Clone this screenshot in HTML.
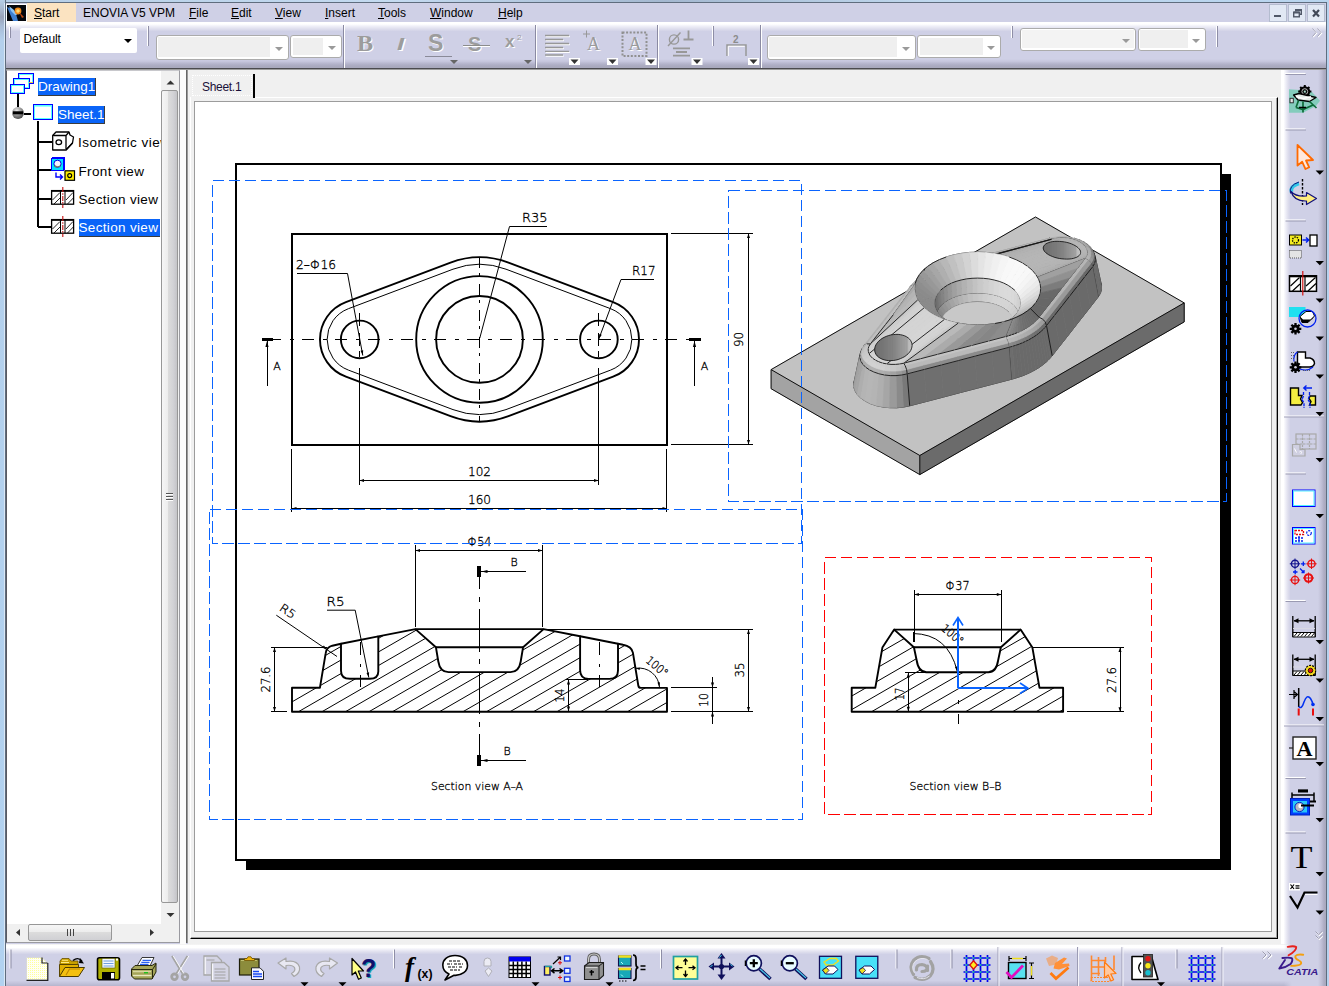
<!DOCTYPE html>
<html><head><meta charset="utf-8"><title>CATIA V5 - Drawing1</title>
<style>
html,body{margin:0;padding:0;}
body{width:1329px;height:986px;overflow:hidden;position:relative;background:#cfd0e6;font-family:"Liberation Sans","DejaVu Sans",sans-serif;font-size:12px;color:#000;}
.abs{position:absolute;}
#frameL{left:0;top:0;width:5px;height:986px;background:linear-gradient(180deg,#b6cee6 0px,#a9b7cc 10px,#98a2b8 17px,#a8bcd6 26px,#b4d0ec 40px,#b2d2f0 986px);border-right:1px solid #5f6d7e;}
#frameL2{left:4px;top:3px;width:1px;height:983px;background:#dbe8f6;}
#frameT{left:0;top:0;width:1329px;height:2px;background:linear-gradient(90deg,#b6cee6 0%,#c4daf0 30%,#a4b8d0 50%,#c0d8ee 70%,#b8d4ee 100%);border-bottom:1px solid #5f6d7e;}
#frameR{left:1326px;top:2px;width:3px;height:984px;background:#b6d2ee;border-left:1px solid #5f6d7e;box-sizing:border-box;}
#menubar{left:6px;top:3px;width:1320px;height:19px;background:#cfd0e6;}
.mi{position:absolute;top:2px;height:17px;line-height:16px;font-size:12px;white-space:nowrap;color:#000;}
.mi u{text-decoration:underline;}
#toolbar{left:6px;top:22px;width:1320px;height:46px;background:linear-gradient(180deg,#ffffff 0px,#ffffff 2px,#f0f0f8 4px,#dedeed 7px,#cfd0e6 9.5px,#cfd0e6 37px,#c5c5dc 39.5px,#b3b3ca 42px,#aaaabf 44px,#a8a8bc 46px);}
#tbline{left:6px;top:68px;width:1320px;height:1px;background:#4a4a4e;}
#tbline2{left:6px;top:69px;width:1320px;height:1px;background:#9c9c9c;}
.combo{position:absolute;background:#fff;border:1px solid #ababab;border-radius:3px;box-sizing:border-box;}
.combo .fill{position:absolute;left:1px;top:1px;bottom:2px;background:#efefef;}
.combo .arr{position:absolute;right:5px;top:10px;width:0;height:0;border-left:4px solid transparent;border-right:4px solid transparent;border-top:4px solid #9a9a9a;}
.grip{position:absolute;width:1px;background:#8e8ea6;border-left:1px solid #fff;}
.dd{position:absolute;width:0;height:0;border-left:4px solid transparent;border-right:4px solid transparent;border-top:4px solid #000;}
#treepanel{left:6px;top:70px;width:174px;height:873px;background:#fff;border:1px solid #9a9aa0;border-top-color:#c8c8cc;border-left-color:#5a5a62;box-sizing:border-box;overflow:hidden;}
#splitter{left:180px;top:70px;width:6px;height:874px;background:#fbfbfb;}
#splitline{left:186px;top:70px;width:1px;height:873px;background:#666;border-right:1px solid #999;}
#docarea{left:188px;top:70px;width:1093px;height:874px;background:#f0f0f0;}
#viewport{left:194px;top:101px;width:1078px;height:831px;background:#fff;border:1px solid #9c9c9c;box-sizing:border-box;}
#tabframe{left:190px;top:97px;width:1088px;height:842px;box-sizing:border-box;border-top:1px solid #fff;border-left:1px solid #fff;border-right:1px solid #000;border-bottom:1px solid #000;}
#tabframe2{left:191px;top:98px;width:1086px;height:840px;box-sizing:border-box;border-right:1px solid #a0a0a0;border-bottom:1px solid #a0a0a0;}
#rtool{left:1281px;top:70px;width:45px;height:916px;background:linear-gradient(90deg,#ffffff 0px,#ffffff 2.5px,#f0f0f8 4.5px,#dedeed 7px,#cfd0e6 9.5px,#cfd0e6 37px,#c2c2d8 40px,#adadc4 43px,#a8a8bc 45px);}
#corner{left:1281px;top:944px;width:45px;height:42px;background:linear-gradient(90deg,rgba(207,208,230,0) 0px,rgba(207,208,230,0) 3px,rgba(207,208,230,1) 11px,#cfd0e6 37px,#c2c2d8 40px,#adadc4 43px,#a8a8bc 45px);}
#btool{left:6px;top:944px;width:1320px;height:42px;background:linear-gradient(180deg,#e8e8e8 0px,#ffffff 1px,#ffffff 3.5px,#f0f0f8 5.5px,#dedeed 8px,#cfd0e6 10.5px,#cfd0e6 36.5px,#c4c4dc 39px,#b6b6ce 42px);}
.tree{font-size:13px;white-space:nowrap;}
</style></head><body>
<div class="abs" id="frameT"></div>
<div class="abs" id="frameL"></div><div class="abs" id="frameL2"></div>
<div class="abs" id="frameR"></div>
<div class="abs" id="menubar">
 <div class="abs" style="left:0px;top:1px;width:19px;height:16px;background:#000;overflow:hidden;border:1px solid #fff">
  <svg width="19" height="16" viewBox="0 0 19 16"><rect width="19" height="16" fill="#05070c"/><path d="M0 2 L5 4 L9 9 L11 16 L6 16 L3 9 Z" fill="#3f7fd0"/><path d="M2 1 L7 5 L10 10 L8 10 L4 6Z" fill="#8cc4f4"/><circle cx="11" cy="6" r="3.4" fill="#f08a1c"/><circle cx="11" cy="6" r="1.8" fill="#ffd870"/><path d="M12 7 L17 12 L15 13Z" fill="#c04810"/></svg>
 </div>
 <div class="abs" style="left:21px;top:0;width:49px;height:19px;background:#fbe3c1"></div>
 <div class="mi" style="left:28px"><u>S</u>tart</div>
 <div class="mi" style="left:77px">ENOVIA V5 VPM</div>
 <div class="mi" style="left:183px"><u>F</u>ile</div>
 <div class="mi" style="left:225px"><u>E</u>dit</div>
 <div class="mi" style="left:269px"><u>V</u>iew</div>
 <div class="mi" style="left:319px"><u>I</u>nsert</div>
 <div class="mi" style="left:372px"><u>T</u>ools</div>
 <div class="mi" style="left:424px"><u>W</u>indow</div>
 <div class="mi" style="left:492px"><u>H</u>elp</div>
</div>
<div class="abs" id="toolbar"></div>
<div class="abs" id="tbline"></div><div class="abs" id="tbline2"></div>
<div class="abs" id="treepanel"></div>
<div class="abs" id="splitter"></div>
<div class="abs" id="splitline"></div>
<div class="abs" id="docarea"></div>
<div class="abs" id="tabframe"></div><div class="abs" id="tabframe2"></div>
<div class="abs" id="viewport"></div>
<div class="abs" style="left:191px;top:74px;width:64px;height:24px;background:#f0f0f0;border-right:2px solid #000;box-sizing:border-box"></div>
<div class="abs" style="left:192px;top:75px;width:60px;height:21px;border:1px dotted #fff;box-sizing:border-box"></div>
<div class="abs" style="left:202px;top:80px;font-size:12px;line-height:14px;color:#1a1038;letter-spacing:-0.3px">Sheet.1</div>
<div class="abs" id="rtool"></div>
<div class="abs" id="btool"></div>
<div class="abs" id="corner"></div>
<!-- tree scrollbars -->
<div class="abs" style="left:161px;top:71px;width:18px;height:853px;background:#f0f0f0"></div>
<div class="abs" style="left:161px;top:90px;width:17px;height:813px;box-sizing:border-box;border:1px solid #979797;border-radius:2px;background:linear-gradient(90deg,#f6f6f6 0%,#ededed 38%,#dcdcdc 42%,#d2d2d6 75%,#c4c4c8 100%)"></div>
<svg class="abs" style="left:161px;top:71px" width="18" height="20"><path d="M5.5 13.5 L9.5 9.5 L13.5 13.5Z" fill="#333"/></svg>
<svg class="abs" style="left:161px;top:904px" width="18" height="20"><path d="M5.5 9 L13.5 9 L9.5 13Z" fill="#333"/></svg>
<svg class="abs" style="left:165px;top:492px" width="10" height="12"><path d="M1 2.500H8M1 5.500H8M1 8.500H8" stroke="#fff" stroke-width="1"/><path d="M1 1.500H8M1 4.500H8M1 7.500H8" stroke="#555" stroke-width="1"/></svg>
<div class="abs" style="left:7px;top:924px;width:172px;height:18px;background:#f0f0f0"></div>
<div class="abs" style="left:28px;top:924px;width:84px;height:17px;box-sizing:border-box;border:1px solid #979797;border-radius:2px;background:linear-gradient(180deg,#f6f6f6 0%,#ededed 45%,#dcdcdc 50%,#d0d0d4 100%)"></div>
<svg class="abs" style="left:7px;top:924px" width="160" height="18"><path d="M13 5 L9 8.5 L13 12Z" fill="#333"/><path d="M143 5 L147 8.5 L143 12Z" fill="#333"/><path d="M60.5 5V12M63.5 5V12M66.5 5V12" stroke="#444" stroke-width="1"/></svg>
<!-- tree content -->
<svg class="abs" style="left:7px;top:71px" width="154" height="180" viewBox="7 71 154 180" shape-rendering="crispEdges">
 <!-- connector lines -->
 <path d="M18 93V107" stroke="#000" stroke-width="2" fill="none"/>
 <path d="M24 113.5H31" stroke="#000" stroke-width="2" fill="none"/>
 <path d="M38 121V227M38 142H52M38 169.5H52M38 198.5H52M38 227H52" stroke="#000" stroke-width="2" fill="none"/>
 <!-- Drawing1 icon -->
 <g>
  <rect x="18.5" y="73.5" width="15" height="10" fill="#fff" stroke="#0000ff"/>
  <rect x="19.5" y="74.5" width="13" height="8" fill="none" stroke="#5ff"/>
  <rect x="13.5" y="78.5" width="16" height="10" fill="#fff" stroke="#0000ff"/>
  <rect x="14.5" y="79.5" width="14" height="8" fill="none" stroke="#5ff"/>
  <rect x="10.5" y="84.5" width="14" height="9" fill="#fff" stroke="#0000ff"/>
  <rect x="11.5" y="85.5" width="12" height="7" fill="none" stroke="#5ff"/>
  <rect x="29" y="82" width="4" height="1" fill="#e8c840"/>
 </g>
 <!-- Sheet icon -->
 <rect x="33.5" y="104.5" width="19" height="15" fill="#fff" stroke="#0000ff"/>
 <rect x="34.5" y="105.5" width="17" height="13" fill="none" stroke="#5ff"/>
 <rect x="35" y="106" width="16" height="1" fill="#a0ffff"/>
</svg>
<svg class="abs" style="left:7px;top:71px" width="154" height="180" viewBox="7 71 154 180">
 <defs><radialGradient id="ball" cx="40%" cy="30%" r="70%"><stop offset="0" stop-color="#e8e8e8"/><stop offset="0.6" stop-color="#8c8c8c"/><stop offset="1" stop-color="#4c4c4c"/></radialGradient></defs>
 <circle cx="18" cy="113" r="6" fill="url(#ball)"/>
 <rect x="13" y="111.3" width="10" height="3" fill="#000"/>
 <!-- Isometric icon -->
 <g fill="#fff" stroke="#000" stroke-width="1.3" stroke-linejoin="round">
  <path d="M52.7 135.5 L56 132 L69 132 L70 135 L73.5 137 L72.5 143 L66 150 L52.7 150 Z"/>
  <path d="M52.7 135.5 H66 V150 M66 135.5 L69 132 M66 150 L72.5 143"/>
  <ellipse cx="58.8" cy="142.2" rx="2.8" ry="2.4"/>
 </g>
 <!-- Front view icon -->
 <rect x="52.5" y="157.5" width="12" height="12" fill="#00e4ff" stroke="#0000ff" stroke-width="1"/>
 <rect x="51.5" y="158.5" width="12" height="12" fill="#00e4ff" stroke="#0000ff" stroke-width="1"/>
 <circle cx="57.5" cy="163.8" r="3.6" fill="#f4f4ff" stroke="#0000e0" stroke-width="1"/>
 <path d="M54.5 165.5 Q57 168 60.5 165.8" stroke="#7a7a60" stroke-width="1.2" fill="none"/>
 <path d="M56 172.5 V177 H62 M60 174.5 L62.5 177 L60 179.5" stroke="#0000ff" stroke-width="1.4" fill="none"/>
 <rect x="65" y="170.8" width="9.5" height="9.5" fill="#ffee00" stroke="#000" stroke-width="1.2"/>
 <circle cx="69.7" cy="175.6" r="2" fill="none" stroke="#000" stroke-width="1.1"/>
 <!-- Section icons -->
 <g id="secico">
  <rect x="51.6" y="190.6" width="22" height="13.6" fill="#fff" stroke="#000" stroke-width="1.3"/>
  <path d="M51.6 191H73.6" stroke="#000" stroke-width="1.6"/>
  <path d="M60.500 190.600V204.200M65 190.600V204.200" stroke="#000" stroke-width="1"/>
  <path d="M52.5 200 L60 192.5 M54 204 L60.5 197.5 M66 200 L73 192.5 M67.5 204 L73.3 198" stroke="#000" stroke-width="0.85"/>
  <path d="M62.8 187V208" stroke="#c81010" stroke-width="1.1" stroke-dasharray="5 1.2 1.5 1.2"/>
 </g>
 <use href="#secico" y="29"/>
</svg>
<div class="abs tree" style="left:38px;top:78px;width:57px;height:17px;background:#0a64f8;border-right:1px solid #3c3c3c;border-bottom:1px solid #3c3c3c"></div>
<div class="abs tree" style="left:38px;top:79px;line-height:16px;color:#fff;font-size:13.5px;letter-spacing:0.05px">Drawing1</div>
<div class="abs tree" style="left:58px;top:106px;width:46px;height:17px;background:#0a64f8;border-right:1px solid #3c3c3c;border-bottom:1px solid #3c3c3c"></div>
<div class="abs tree" style="left:58px;top:107px;line-height:16px;color:#fff;font-size:13.5px;letter-spacing:0px">Sheet.1</div>
<div class="abs tree" style="left:78px;top:135px;width:83px;overflow:hidden;line-height:16px;font-size:13.5px;letter-spacing:0.5px">Isometric view</div>
<div class="abs tree" style="left:78.5px;top:164px;line-height:16px;font-size:13.5px;letter-spacing:0.35px">Front view</div>
<div class="abs tree" style="left:78.5px;top:192px;line-height:16px;font-size:13.5px;letter-spacing:0.33px">Section view</div>
<div class="abs tree" style="left:79px;top:219px;width:81px;height:17px;background:#0a64f8;border-bottom:1px solid #3c3c3c"></div>
<div class="abs tree" style="left:78.5px;top:220px;line-height:16px;color:#fff;font-size:13.5px;letter-spacing:0.33px">Section view</div>
<!-- top toolbar -->
<div class="grip" style="left:9px;top:27px;height:11px"></div>
<div class="abs" style="left:20px;top:28px;width:117px;height:25px;background:#fff;border-radius:2px"></div>
<div class="abs" style="left:23.5px;top:32px;font-size:12px;line-height:15px;letter-spacing:-0.1px">Default</div>
<div class="dd" style="left:124px;top:39px"></div>
<div class="grip" style="left:147px;top:26px;height:20px"></div>
<div class="combo" style="left:156px;top:35px;width:133px;height:25px"><div class="fill" style="width:112px"></div><div class="arr" style="top:11px"></div></div>
<div class="combo" style="left:290px;top:35px;width:52px;height:23px"><div class="fill" style="width:30px;left:2px;top:2px;bottom:2px"></div><div class="arr"></div></div>
<div class="combo" style="left:767px;top:35px;width:149px;height:25px"><div class="fill" style="width:128px"></div><div class="arr" style="top:11px"></div></div>
<div class="combo" style="left:917px;top:35px;width:84px;height:23px"><div class="fill" style="width:63px;left:2px;top:2px;bottom:2px"></div><div class="arr"></div></div>
<div class="combo" style="left:1020px;top:28px;width:116px;height:23px"><div class="fill" style="width:112px;background:#f3f3f3"></div><div class="arr"></div></div>
<div class="combo" style="left:1138px;top:28px;width:68px;height:23px"><div class="fill" style="width:48px"></div><div class="arr"></div></div>
<div class="grip" style="left:1011px;top:26px;height:12px"></div>
<div class="grip" style="left:1216px;top:26px;height:21px"></div>
<div class="grip" style="left:712px;top:26px;height:20px"></div>
<div class="abs" style="left:343px;top:25px;width:1px;height:43px;background:#8a8aa2;border-right:1px solid #fff"></div>
<div class="abs" style="left:535px;top:25px;width:1px;height:43px;background:#8a8aa2;border-right:1px solid #fff"></div>
<div class="abs" style="left:657px;top:25px;width:1px;height:43px;background:#8a8aa2;border-right:1px solid #fff"></div>
<div class="abs" style="left:760px;top:25px;width:1px;height:43px;background:#8a8aa2;border-right:1px solid #fff"></div>
<div class="abs" style="left:357px;top:32px;font-family:'Liberation Serif',serif;font-weight:bold;font-size:23px;line-height:24px;color:#9c9c9c;text-shadow:1px 1px 0 #fff;transform:scaleX(1.05);transform-origin:0 0">B</div>
<div class="abs" style="left:397px;top:35px;font-family:'Liberation Sans',sans-serif;font-weight:bold;font-style:italic;font-size:17px;line-height:20px;color:#9c9c9c;text-shadow:1px 1px 0 #fff;transform:scaleX(1.5);transform-origin:0 0">I</div>
<div class="abs" style="left:428px;top:31px;font-family:'Liberation Sans',sans-serif;font-weight:bold;font-size:23px;line-height:24px;color:#9c9c9c;text-shadow:1px 1px 0 #fff">S</div>
<div class="abs" style="left:425px;top:56px;width:27px;height:1px;background:#8a8a98"></div>
<div class="abs" style="left:468px;top:33px;font-family:'Liberation Sans',sans-serif;font-weight:bold;font-size:20px;line-height:22px;color:#9c9c9c;text-shadow:1px 1px 0 #fff">S</div>
<div class="abs" style="left:463px;top:45px;width:27px;height:1px;background:#8c8c8c;border-bottom:1px solid #fff"></div>
<div class="abs" style="left:505px;top:33px;font-family:'Liberation Sans',sans-serif;font-weight:bold;font-size:17px;line-height:18px;color:#9c9c9c;text-shadow:1px 1px 0 #fff">x</div>
<div class="abs" style="left:517px;top:33px;font-family:'Liberation Sans',sans-serif;font-size:8px;line-height:9px;color:#9c9c9c;text-shadow:1px 1px 0 #fff">2</div>
<div class="dd" style="left:450px;top:60px;border-top-color:#666"></div>
<div class="dd" style="left:524px;top:60px;border-top-color:#666"></div>
<svg class="abs" style="left:540px;top:26px" width="225" height="42" viewBox="540 26 225 42">
 <g stroke="#fff" stroke-width="1.2" fill="none" transform="translate(0.8,1.2)">
  <path d="M545 35.5H569M545 39.5H563M545 43.5H569M545 47.5H563M545 51.3H569M545 55H563"/>
 </g>
 <g stroke="#989898" stroke-width="1.3" fill="none">
  <path d="M545 35.5H569M545 39.5H563M545 43.5H569M545 47.5H563M545 51.3H569M545 55H563"/>
 </g>
 <g fill="#fff"><rect x="569" y="58" width="11" height="7"/><rect x="607" y="58" width="11" height="7"/><rect x="645.5" y="58" width="11" height="7"/><rect x="691.5" y="58" width="11" height="7"/><rect x="748" y="58" width="11" height="7"/></g>
 <g fill="#333"><path d="M570.5 59.5h8l-4 4.5z"/><path d="M608.5 59.5h8l-4 4.5z"/><path d="M647 59.5h8l-4 4.5z"/><path d="M693 59.5h8l-4 4.5z"/><path d="M749.5 59.5h8l-4 4.5z"/></g>
 <path d="M583 34H590M586.5 30.5V37.5" stroke="#989898" stroke-width="1"/>
 <text x="587" y="49.5" font-family="Liberation Serif,serif" font-size="18" fill="#9a9a9a" style="text-shadow:1px 1px 0 #fff">A</text>
 <rect x="622.5" y="32.5" width="24" height="23.5" fill="none" stroke="#909090" stroke-width="2" stroke-dasharray="2 1.6"/>
 <text x="628.5" y="50" font-family="Liberation Serif,serif" font-size="18" fill="#9a9a9a" style="text-shadow:1px 1px 0 #fff">A</text>
 <g stroke="#989898" fill="none" stroke-width="1.4">
  <circle cx="674" cy="39.5" r="4.6"/><path d="M668 46 L680.5 32.5"/>
  <path d="M688.5 30.5V39.5M683.5 39.5H693.5" stroke-width="1.8"/>
  <path d="M673 48.3H690M676 52H687M673 55.7H690" stroke-width="1.8"/>
  <path d="M727 56V45H746V56" stroke-width="1.5"/>
 </g>
 <g stroke="#fff" fill="none" stroke-width="1"><path d="M728.3 56V46.3H744.7"/></g>
 <text x="733" y="42.5" font-family="Liberation Sans,sans-serif" font-size="10" fill="#8c8c8c" font-weight="bold">2</text>
</svg>
<svg class="abs" style="left:1310px;top:27px" width="14" height="12" viewBox="0 0 14 12"><path d="M2.5 1.5L6 5.5L2.5 9.5M7.5 1.5L11 5.5L7.5 9.5" stroke="#fff" stroke-width="1.2" fill="none" transform="translate(0.7,0.7)"/><path d="M2.5 1.5L6 5.5L2.5 9.5M7.5 1.5L11 5.5L7.5 9.5" stroke="#a4a4b8" stroke-width="1" fill="none"/></svg>
<!-- window buttons -->
<div class="abs" style="left:1269px;top:4px;width:18px;height:18px;box-sizing:border-box;background:#e1e8f4;border:1px solid #f4f8fc;outline:1px solid #b4bccf;outline-offset:-1px"></div>
<div class="abs" style="left:1288px;top:4px;width:18px;height:18px;box-sizing:border-box;background:#e1e8f4;border:1px solid #f4f8fc;outline:1px solid #b4bccf;outline-offset:-1px"></div>
<div class="abs" style="left:1307px;top:4px;width:18px;height:18px;box-sizing:border-box;background:#e1e8f4;border:1px solid #f4f8fc;outline:1px solid #b4bccf;outline-offset:-1px"></div>
<svg class="abs" style="left:1269px;top:4px" width="56" height="18" viewBox="0 0 56 18">
 <rect x="5" y="11" width="7" height="2" fill="#505868"/>
 <g fill="none" stroke="#505868" stroke-width="1.4"><path d="M26.7 7.5V5.7H32.3V10.3H30.5"/><rect x="24.7" y="8.2" width="5.6" height="4.6"/><path d="M24.7 8.6H30.3M26.7 6.1H32.3" stroke-width="2"/></g>
 <path d="M44 6L50 12.5M50 6L44 12.5" stroke="#404858" stroke-width="2.2" fill="none"/>
</svg>
<svg id="dwg" class="abs" style="left:195px;top:102px" width="1076" height="829" viewBox="195 102 1076 829">
<style>
.k{stroke:#000;stroke-width:1.9;fill:none;stroke-linejoin:round}
.t{stroke:#000;stroke-width:1;fill:none}
.h{stroke:#000;stroke-width:1;fill:none}
.ah{fill:#000;stroke:none}
.c{stroke:#000;stroke-width:1;fill:none;stroke-dasharray:24 4 4 4}
.vf{stroke:#0a64ff;stroke-width:1;fill:none;stroke-dasharray:11.7 4.3}
.vr{stroke:#ff0000;stroke-width:1;fill:none;stroke-dasharray:11.7 4.3}
#dwg text{font-family:"DejaVu Sans Light","DejaVu Sans","Liberation Sans",sans-serif;font-weight:200;fill:#000;stroke:#000;stroke-width:0.3}
</style>
<g shape-rendering="crispEdges">
<path d="M246 860H1221V174H1231V870H246Z" fill="#000"/>
<rect x="236" y="164" width="985" height="696" fill="#fff" stroke="#000" stroke-width="2"/>
</g>
<g shape-rendering="crispEdges">
<rect class="k" x="292" y="234" width="375.3" height="211"/>
</g>
<path class="k" d="M450.5 262.6A82 82 0 0 1 508.5 262.6L613.1 302.1A39.8 39.8 0 0 1 613.1 376.7L508.5 416.2A82 82 0 0 1 450.5 416.2L345.9 376.7A39.8 39.8 0 0 1 345.9 302.1Z"/>
<path class="t" d="M453 269.2A75 75 0 0 1 506 269.2L610.6 308.7A32.8 32.8 0 0 1 610.6 370.1L506 409.6A75 75 0 0 1 453 409.6L348.4 370.1A32.8 32.8 0 0 1 348.4 308.7Z"/>
<circle class="k" cx="479.5" cy="339.4" r="63.3"/>
<circle class="k" cx="479.5" cy="339.4" r="43.4"/>
<circle class="k" cx="359.7" cy="339.4" r="18.8"/>
<circle class="k" cx="598.9" cy="339.4" r="18.8"/>
<g shape-rendering="crispEdges">
<path class="c" d="M273 339.4H689" style="stroke-dasharray:12 9 3.5 8.5;stroke-dashoffset:3.8"/>
<path class="c" d="M479.5 257.3V421" style="stroke-dasharray:11 5 3 7.4"/>
<path class="t" d="M359.5 313V326M359.5 333V346M359.5 351V357"/>
<path class="t" d="M359.5 368V485"/>
<path class="t" d="M598.5 313V326M598.5 333V346M598.5 351V357"/>
<path class="t" d="M598.5 368V485"/>
<rect x="261.5" y="337.5" width="11.5" height="3.5" fill="#000"/>
<path class="t" d="M267 341V386"/>
<rect x="689" y="337.5" width="11.5" height="3.5" fill="#000"/>
<path class="t" d="M694.5 341V386"/>
</g>
<path class="ah" d="M267 341L268.6 347L265.4 347Z"/>
<text x="277" y="370" font-size="11" text-anchor="middle">A</text>
<path class="ah" d="M694.5 341L696.1 347L692.9 347Z"/>
<text x="704.5" y="370" font-size="11" text-anchor="middle">A</text>
<g shape-rendering="crispEdges">
<path class="t" d="M671 233.5H753M671 444.5H753M748.5 233.5V444.5"/>
<path class="t" d="M291.5 449V512M666.5 449V512M291.5 508.5H666.5M359.5 480.5H598.5"/>
</g>
<path class="ah" d="M748.5 233.5L750 238L747 238Z"/>
<path class="ah" d="M748.5 444.5L747 440L750 440Z"/>
<path class="ah" d="M292 508.5L296.5 507L296.5 510Z"/>
<path class="ah" d="M667 508.5L662.5 510L662.5 507Z"/>
<path class="ah" d="M359.5 480.5L364 479L364 482Z"/>
<path class="ah" d="M598.5 480.5L594 482L594 479Z"/>
<text x="743" y="339.4" font-size="11.5" text-anchor="middle" textLength="15" lengthAdjust="spacingAndGlyphs" transform="rotate(-90 743 339.4)">90</text>
<text x="479.5" y="475.5" font-size="11.5" text-anchor="middle" textLength="23" lengthAdjust="spacingAndGlyphs">102</text>
<text x="479.5" y="503.5" font-size="11.5" text-anchor="middle" textLength="23" lengthAdjust="spacingAndGlyphs">160</text>
<path class="t" d="M547 226.5H509.5L479.8 338"/>
<text x="522" y="221.5" font-size="11.5" text-anchor="start" textLength="25.5" lengthAdjust="spacingAndGlyphs">R35</text>
<path class="t" d="M297 273.5H347.5L362.8 355.5"/>
<path class="ah" d="M362.8 355.5L360.6 350.8L363.2 350.3Z"/>
<text x="296" y="268.5" font-size="11.5" text-anchor="start" textLength="40" lengthAdjust="spacingAndGlyphs">2–Φ16</text>
<path class="t" d="M654 279.5H621L598.8 339"/>
<path class="ah" d="M598.8 339L599.3 333.9L601.8 334.8Z"/>
<text x="632" y="274.8" font-size="11.5" text-anchor="start" textLength="23.5" lengthAdjust="spacingAndGlyphs">R17</text>
<clipPath id="clA"><path d="M292 711.8L292 687.8L319.9 687.8L325.7 653.2Q326.3 647.3 332.3 645.7L341 643.7L341 670.7Q341 678.8 350 678.8L369.8 678.8Q378.3 678.8 378.3 671.5L378.3 636.4L415.4 629.1L435.9 647.2L438.3 661.5Q440 672.1 448.5 672.1L510.5 672.1Q519 672.1 520.7 661.5L523.1 647.2L543.6 629.1L580.1 636.3L580.1 670Q580.1 678.9 588.5 678.9L609.5 678.9Q618 678.9 618 670.5L618 643.7L623 644.7Q631.6 646.2 632.9 652.6L638.3 685.5Q638.7 687.9 641 687.9L667 687.9L667 711.8Z"/></clipPath>
<path class="h" clip-path="url(#clA)" d="M86.8 711.8L346.6 561.8M110.3 711.8L370.1 561.8M133.8 711.8L393.6 561.8M157.3 711.8L417.1 561.8M180.8 711.8L440.6 561.8M204.3 711.8L464.1 561.8M227.8 711.8L487.6 561.8M251.3 711.8L511.1 561.8M274.8 711.8L534.6 561.8M298.3 711.8L558.1 561.8M321.8 711.8L581.6 561.8M345.3 711.8L605.1 561.8M368.8 711.8L628.6 561.8M392.3 711.8L652.1 561.8M415.8 711.8L675.6 561.8M439.3 711.8L699.1 561.8M462.8 711.8L722.6 561.8M486.3 711.8L746.1 561.8M509.8 711.8L769.6 561.8M533.3 711.8L793.1 561.8M556.8 711.8L816.6 561.8M580.3 711.8L840.1 561.8M603.8 711.8L863.6 561.8M627.3 711.8L887.1 561.8M650.8 711.8L910.6 561.8"/>
<path class="k" d="M292 711.8L292 687.8L319.9 687.8L325.7 653.2Q326.3 647.3 332.3 645.7L341 643.7L341 670.7Q341 678.8 350 678.8L369.8 678.8Q378.3 678.8 378.3 671.5L378.3 636.4L415.4 629.1L435.9 647.2L438.3 661.5Q440 672.1 448.5 672.1L510.5 672.1Q519 672.1 520.7 661.5L523.1 647.2L543.6 629.1L580.1 636.3L580.1 670Q580.1 678.9 588.5 678.9L609.5 678.9Q618 678.9 618 670.5L618 643.7L623 644.7Q631.6 646.2 632.9 652.6L638.3 685.5Q638.7 687.9 641 687.9L667 687.9L667 711.8Z"/>
<path class="k" d="M415.4 629.1H543.6M435.9 647.2H523.1M341 643.7L378.3 636.4M580.1 636.3L618 643.7"/>
<g shape-rendering="crispEdges">
<path class="c" d="M479.5 576V754.5" style="stroke-dasharray:42.3 7.5 5.3 7.4;stroke-dashoffset:29.3"/>
<path class="t" d="M360 642V655M360 663.5V667M360 675V687"/>
<path class="t" d="M599 642V655M599 663.5V667M599 675V687"/>
<rect x="477" y="566" width="4" height="10.5" fill="#000"/><rect x="477" y="754.5" width="4" height="11.5" fill="#000"/>
<path class="t" d="M479.5 571.5H526M479.5 760.5H526"/>
<path class="t" d="M415.5 545V627M542.5 545V627M415.5 550.5H542.5"/>
<path class="t" d="M546 629.5H753M671 711.5H753M748.5 629.5V711.5"/>
<path class="t" d="M671 687.5H717M712.5 677V723.5"/>
<path class="t" d="M566 679.5H588M568.5 679.5V711.5"/>
<path class="t" d="M270.5 647.5H327M270.5 711.5H287M274.5 647.5V711.5"/>
</g>
<path class="ah" d="M481.5 571.5L487.5 569.9L487.5 573.1Z"/>
<path class="ah" d="M481.5 760.5L487.5 758.9L487.5 762.1Z"/>
<text x="514" y="565.5" font-size="11" text-anchor="middle">B</text>
<text x="507" y="754.5" font-size="11" text-anchor="middle">B</text>
<path class="ah" d="M415.5 550.5L420 549L420 552Z"/>
<path class="ah" d="M542.5 550.5L538 552L538 549Z"/>
<text x="479.5" y="545.5" font-size="11.5" text-anchor="middle" textLength="24" lengthAdjust="spacingAndGlyphs">Φ54</text>
<path class="ah" d="M748.5 629.5L750 634L747 634Z"/>
<path class="ah" d="M748.5 711.5L747 707L750 707Z"/>
<text x="743.5" y="670" font-size="11.5" text-anchor="middle" textLength="15" lengthAdjust="spacingAndGlyphs" transform="rotate(-90 743.5 670)">35</text>
<path class="ah" d="M712.5 687.5L711 682.5L714 682.5Z"/>
<path class="ah" d="M712.5 711.5L714 716.5L711 716.5Z"/>
<text x="708" y="700" font-size="11.5" text-anchor="middle" textLength="14" lengthAdjust="spacingAndGlyphs" transform="rotate(-90 708 700)">10</text>
<path class="ah" d="M568.5 679.5L570 684.5L567 684.5Z"/>
<path class="ah" d="M568.5 711.5L567 706.5L570 706.5Z"/>
<text x="564" y="695.5" font-size="11.5" text-anchor="middle" textLength="14" lengthAdjust="spacingAndGlyphs" transform="rotate(-90 564 695.5)">14</text>
<path class="ah" d="M274.5 647.5L276 652L273 652Z"/>
<path class="ah" d="M274.5 711.5L273 707L276 707Z"/>
<text x="269.5" y="679.5" font-size="11.5" text-anchor="middle" textLength="26" lengthAdjust="spacingAndGlyphs" transform="rotate(-90 269.5 679.5)">27.6</text>
<path class="t" d="M276.3 615.2L337 656.5"/>
<path class="ah" d="M327.2 649.5L322.3 647.8L323.8 645.6Z"/>
<text x="285.5" y="614.5" font-size="11.5" text-anchor="middle" textLength="17" lengthAdjust="spacingAndGlyphs" transform="rotate(34 285.5 614.5)">R5</text>
<path class="t" d="M327 610.2H355.2L368.8 677.5"/>
<path class="ah" d="M368.8 677.5L366.5 672.9L369.1 672.3Z"/>
<text x="326.5" y="605.5" font-size="11.5" text-anchor="start" textLength="18" lengthAdjust="spacingAndGlyphs">R5</text>
<path class="t" d="M635.8 668.3A20.5 20.5 0 0 1 659.5 687.5"/>
<path class="ah" d="M659.5 687.3L657.4 682.6L659.9 682.2Z"/>
<path class="ah" d="M635.9 668.2L640 667.7L639.6 670.1Z"/>
<text x="654.5" y="669.5" font-size="11.5" text-anchor="middle" textLength="25" lengthAdjust="spacingAndGlyphs" transform="rotate(40 654.5 669.5)">100°</text>
<text x="477" y="790" font-size="11" text-anchor="middle" textLength="92" lengthAdjust="spacingAndGlyphs">Section view A–A</text>
<clipPath id="clB"><path d="M851.7 711.7L851.7 687.8L875.3 687.8L882.4 647.6L894.2 629.6L913.9 647.3L916.7 660.5Q918.5 672.2 926.5 672.2L988.3 672.2Q996.3 672.2 998.1 660.5L1000.9 647.3L1020.6 629.6L1032.4 647.6L1039.5 687.8L1063.1 687.8L1063.1 711.7Z"/></clipPath>
<path class="h" clip-path="url(#clB)" d="M636.6 711.7L896.4 561.7M660.1 711.7L919.9 561.7M683.6 711.7L943.4 561.7M707.1 711.7L966.9 561.7M730.6 711.7L990.4 561.7M754.1 711.7L1013.9 561.7M777.6 711.7L1037.4 561.7M801.1 711.7L1060.9 561.7M824.6 711.7L1084.4 561.7M848.1 711.7L1107.9 561.7M871.6 711.7L1131.4 561.7M895.1 711.7L1154.9 561.7M918.6 711.7L1178.4 561.7M942.1 711.7L1201.9 561.7M965.6 711.7L1225.4 561.7M989.1 711.7L1248.9 561.7M1012.6 711.7L1272.4 561.7M1036.1 711.7L1295.9 561.7M1059.6 711.7L1319.4 561.7"/>
<path class="k" d="M851.7 711.7L851.7 687.8L875.3 687.8L882.4 647.6L894.2 629.6L913.9 647.3L916.7 660.5Q918.5 672.2 926.5 672.2L988.3 672.2Q996.3 672.2 998.1 660.5L1000.9 647.3L1020.6 629.6L1032.4 647.6L1039.5 687.8L1063.1 687.8L1063.1 711.7Z"/>
<path class="k" d="M894.2 629.6H1020.6M913.9 647.3H1000.9"/>
<g shape-rendering="crispEdges">
<path class="t" d="M914.5 590V642M1001.5 590V642M914.5 594.5H1001.5"/>
<path class="t" d="M1033 647.6H1124M1067 711.7H1124M1120 647.6V711.7"/>
<path class="t" d="M904.5 672.4H924M908.3 672.4V711.7"/>
<path class="t" d="M958 713.5V723.5M958 700V704M913 631.5V642"/>
</g>
<path class="ah" d="M914.4 594.5L918.9 593L918.9 596Z"/>
<path class="ah" d="M1001.3 594.5L996.8 596L996.8 593Z"/>
<text x="957.6" y="590" font-size="11.5" text-anchor="middle" textLength="24" lengthAdjust="spacingAndGlyphs">Φ37</text>
<path class="ah" d="M1120 647.6L1121.5 652.1L1118.5 652.1Z"/>
<path class="ah" d="M1120 711.7L1118.5 707.2L1121.5 707.2Z"/>
<text x="1115.5" y="680" font-size="11.5" text-anchor="middle" textLength="26" lengthAdjust="spacingAndGlyphs" transform="rotate(-90 1115.5 680)">27.6</text>
<path class="ah" d="M908.3 672.4L909.8 677.4L906.8 677.4Z"/>
<path class="ah" d="M908.3 711.7L906.8 706.7L909.8 706.7Z"/>
<text x="903.5" y="694" font-size="11.5" text-anchor="middle" textLength="13" lengthAdjust="spacingAndGlyphs" transform="rotate(-90 903.5 694)">17</text>
<path class="t" d="M913 633.5Q948 634 957.2 671"/>
<path class="ah" d="M957.3 671.5L955 666.9L957.5 666.3Z"/>
<text x="950" y="637.5" font-size="11.5" text-anchor="middle" textLength="25" lengthAdjust="spacingAndGlyphs" transform="rotate(40 950 637.5)">100°</text>
<path d="M958 688.3V618M958 688.3H1027.5" stroke="#0a64ff" stroke-width="2" fill="none" shape-rendering="crispEdges"/>
<path d="M953 625.5L958 617.5L963 625.5M1020 683L1028 688.3L1020 693.5" stroke="#0a64ff" stroke-width="1.6" fill="none"/>
<text x="955.5" y="790" font-size="11" text-anchor="middle" textLength="92" lengthAdjust="spacingAndGlyphs">Section view B–B</text>
<g id="iso" stroke-linejoin="round">
<polygon points="771.1,369.6 1035.5,217 1184.2,302.9 919.8,455.5" fill="#c2c2c2" stroke="#c2c2c2" stroke-width="0.7"/>
<polygon points="771.1,369.6 919.8,455.5 919.8,474.6 771.1,388.7" fill="#a3a3a3" stroke="#a3a3a3" stroke-width="0.7"/>
<polygon points="919.8,455.5 1184.2,302.9 1184.2,321.9 919.8,474.6" fill="#6b6b6b" stroke="#6b6b6b" stroke-width="0.7"/>
<path d="M771.1 369.6L1035.5 217L1184.2 302.9L919.8 455.5L771.1 369.6M771.1 369.6L771.1 388.7L919.8 474.6L1184.2 321.9L1184.2 302.9M919.8 455.5L919.8 474.6" stroke="#0c0c0c" stroke-width="1" fill="none"/>
<path d="M1058.8 264.7L1065.6 264.8" stroke="#141414" stroke-width="0.9" fill="none"/>
<path d="M1052 265.4L1058.8 264.7" stroke="#141414" stroke-width="0.9" fill="none"/>
<path d="M1065.6 264.8L1072.4 265.5" stroke="#141414" stroke-width="0.9" fill="none"/>
<path d="M1045.6 266.7L1052 265.4" stroke="#141414" stroke-width="0.9" fill="none"/>
<path d="M1072.4 265.5L1078.8 266.8" stroke="#141414" stroke-width="0.9" fill="none"/>
<path d="M1078.8 266.8L1084.8 268.8" stroke="#141414" stroke-width="0.9" fill="none"/>
<path d="M1028.6 271.1L1045.6 266.7" stroke="#141414" stroke-width="0.9" fill="none"/>
<path d="M1084.8 268.8L1090 271.4" stroke="#141414" stroke-width="0.9" fill="none"/>
<path d="M1090 271.4L1094.4 274.4" stroke="#141414" stroke-width="0.9" fill="none"/>
<path d="M1011.7 275.5L1028.6 271.1" stroke="#141414" stroke-width="0.9" fill="none"/>
<path d="M1094.4 274.4L1097.9 277.8" stroke="#141414" stroke-width="0.9" fill="none"/>
<path d="M1045.6 266.7L1048.1 241.3" stroke="#141414" stroke-width="0.9" fill="none"/>
<path d="M994.8 280L1011.7 275.5" stroke="#141414" stroke-width="0.9" fill="none"/>
<path d="M1097.9 277.8L1100.2 281.5" stroke="#141414" stroke-width="0.9" fill="none"/>
<path d="M977.8 284.4L994.8 280" stroke="#141414" stroke-width="0.9" fill="none"/>
<path d="M1059.3 239.7L1065.1 239.7" stroke="#141414" stroke-width="0.9" fill="none"/>
<path d="M1100.2 281.5L1101.5 285.4" stroke="#141414" stroke-width="0.9" fill="none"/>
<path d="M1053.6 240.2L1059.3 239.7" stroke="#141414" stroke-width="0.9" fill="none"/>
<path d="M1065.1 239.7L1070.8 240.3" stroke="#141414" stroke-width="0.9" fill="none"/>
<path d="M1048.1 241.3L1053.6 240.2" stroke="#141414" stroke-width="0.9" fill="none"/>
<path d="M1070.8 240.3L1076.2 241.5" stroke="#141414" stroke-width="0.9" fill="none"/>
<path d="M1076.2 241.5L1081.2 243.1" stroke="#141414" stroke-width="0.9" fill="none"/>
<path d="M1048.1 241.3L1048.7 238.5" stroke="#141414" stroke-width="0.9" fill="none"/>
<path d="M960.9 288.8L977.8 284.4" stroke="#141414" stroke-width="0.9" fill="none"/>
<path d="M1031.2 245.8L1048.1 241.3" stroke="#141414" stroke-width="0.9" fill="none"/>
<path d="M1101.5 285.4L1101.5 289.4" stroke="#141414" stroke-width="0.9" fill="none"/>
<path d="M1081.2 243.1L1085.6 245.3" stroke="#141414" stroke-width="0.9" fill="none"/>
<polygon points="1075.5,238.6 1080.3,240.2 1078.6,239.8 1074.3,238.3" fill="#797979" stroke="#797979" stroke-width="0.7"/>
<polygon points="1059.6,236.8 1064.6,236.8 1064.3,238.1 1059.9,238.1" fill="#ababab" stroke="#ababab" stroke-width="0.7"/>
<path d="M1048.7 238.5L1050 238.2" stroke="#141414" stroke-width="0.9" fill="none"/>
<polygon points="1054.7,237.2 1059.6,236.8 1059.9,238.1 1055.6,238.5" fill="#adadad" stroke="#adadad" stroke-width="0.7"/>
<polygon points="1064.6,236.8 1069.6,237.3 1068.6,238.5 1064.3,238.1" fill="#a9a9a9" stroke="#a9a9a9" stroke-width="0.7"/>
<path d="M1048.7 238.5L1050 238.2" stroke="#141414" stroke-width="0.9" fill="none"/>
<path d="M1075.5 238.6L1074.3 238.3" stroke="#141414" stroke-width="0.9" fill="none"/>
<polygon points="1050,238.2 1054.7,237.2 1055.6,238.5 1051.5,239.3" fill="#b0b0b0" stroke="#b0b0b0" stroke-width="0.7"/>
<polygon points="1069.6,237.3 1074.3,238.3 1072.7,239.4 1068.6,238.5" fill="#a7a7a7" stroke="#a7a7a7" stroke-width="0.7"/>
<polygon points="1031.8,242.9 1048.7,238.5 1050,238.2 1033,242.6" fill="#989898" stroke="#989898" stroke-width="0.7"/>
<polygon points="1080.3,240.2 1084.6,242.3 1082.4,241.6 1078.6,239.8" fill="#797979" stroke="#797979" stroke-width="0.7"/>
<path d="M1085.6 245.3L1089.4 247.8" stroke="#141414" stroke-width="0.9" fill="none"/>
<polygon points="1074.3,238.3 1078.6,239.8 1076.4,240.7 1072.7,239.4" fill="#a7a7a7" stroke="#a7a7a7" stroke-width="0.7"/>
<path d="M944 293.2L960.9 288.8" stroke="#141414" stroke-width="0.9" fill="none"/>
<path d="M1101.5 289.4L1100.4 293.3" stroke="#141414" stroke-width="0.9" fill="none"/>
<path d="M1059.9 238.1L1064.3 238.1" stroke="#141414" stroke-width="0.9" fill="none"/>
<path d="M1050 238.2L1051.5 239.3" stroke="#141414" stroke-width="0.9" fill="none"/>
<path d="M1055.6 238.5L1059.9 238.1" stroke="#141414" stroke-width="0.9" fill="none"/>
<path d="M1064.3 238.1L1068.6 238.5" stroke="#141414" stroke-width="0.9" fill="none"/>
<path d="M1014.2 250.2L1031.2 245.8" stroke="#141414" stroke-width="0.9" fill="none"/>
<path d="M1051.5 239.3L1055.6 238.5" stroke="#141414" stroke-width="0.9" fill="none"/>
<path d="M1068.6 238.5L1072.7 239.4" stroke="#141414" stroke-width="0.9" fill="none"/>
<polygon points="1033,242.6 1050,238.2 1051.5,239.3 1034.6,243.7" fill="#b1b1b1" stroke="#b1b1b1" stroke-width="0.7"/>
<polygon points="1084.6,242.3 1088.1,244.7 1085.6,243.8 1082.4,241.6" fill="#7a7a7a" stroke="#7a7a7a" stroke-width="0.7"/>
<polygon points="1078.6,239.8 1082.4,241.6 1079.8,242.3 1076.4,240.7" fill="#a6a6a6" stroke="#a6a6a6" stroke-width="0.7"/>
<path d="M1089.4 247.8L1092.3 250.7" stroke="#141414" stroke-width="0.9" fill="none"/>
<path d="M1072.7 239.4L1076.4 240.7" stroke="#141414" stroke-width="0.9" fill="none"/>
<path d="M940.2 294.3L944 293.2" stroke="#141414" stroke-width="0.9" fill="none"/>
<path d="M1101.5 285.4L1095.3 257.2" stroke="#141414" stroke-width="0.9" fill="none"/>
<polygon points="1101.5,285.4 1101.5,289.4 1095.4,260.5 1095.3,257.2" fill="#6a6a6a" stroke="#6a6a6a" stroke-width="0.7"/>
<polygon points="1014.9,247.4 1031.8,242.9 1033,242.6 1016.1,247" fill="#989898" stroke="#989898" stroke-width="0.7"/>
<polygon points="1082.4,241.6 1085.6,243.8 1082.6,244.2 1079.8,242.3" fill="#a7a7a7" stroke="#a7a7a7" stroke-width="0.7"/>
<path d="M1076.4 240.7L1079.8 242.3" stroke="#141414" stroke-width="0.9" fill="none"/>
<path d="M1034.6 243.7L1051.5 239.3" stroke="#141414" stroke-width="0.9" fill="none"/>
<path d="M936.5 295.5L940.2 294.3" stroke="#141414" stroke-width="0.9" fill="none"/>
<polygon points="1088.1,244.7 1090.9,247.5 1088.1,246.3 1085.6,243.8" fill="#7c7c7c" stroke="#7c7c7c" stroke-width="0.7"/>
<path d="M1100.4 293.3L1098.1 297" stroke="#141414" stroke-width="0.9" fill="none"/>
<path d="M1092.3 250.7L1094.3 253.9" stroke="#141414" stroke-width="0.9" fill="none"/>
<path d="M932.9 296.7L936.5 295.5" stroke="#141414" stroke-width="0.9" fill="none"/>
<path d="M997.3 254.6L1014.2 250.2" stroke="#141414" stroke-width="0.9" fill="none"/>
<polygon points="1085.6,243.8 1088.1,246.3 1084.8,246.4 1082.6,244.2" fill="#a7a7a7" stroke="#a7a7a7" stroke-width="0.7"/>
<path d="M1079.8 242.3L1082.6 244.2" stroke="#141414" stroke-width="0.9" fill="none"/>
<polygon points="1016.1,247 1033,242.6 1034.6,243.7 1017.7,248.1" fill="#b1b1b1" stroke="#b1b1b1" stroke-width="0.7"/>
<path d="M929.4 298.1L932.9 296.7" stroke="#141414" stroke-width="0.9" fill="none"/>
<polygon points="1090.9,247.5 1092.8,250.5 1089.9,249 1088.1,246.3" fill="#7f7f7f" stroke="#7f7f7f" stroke-width="0.7"/>
<polygon points="1101.5,289.4 1100.4,293.3 1094.4,263.8 1095.4,260.5" fill="#6a6a6a" stroke="#6a6a6a" stroke-width="0.7"/>
<path d="M1082.6 244.2L1084.8 246.4" stroke="#141414" stroke-width="0.9" fill="none"/>
<polygon points="997.9,251.8 1014.9,247.4 1016.1,247 999.2,251.5" fill="#989898" stroke="#989898" stroke-width="0.7"/>
<path d="M926.1 299.6L929.4 298.1" stroke="#141414" stroke-width="0.9" fill="none"/>
<polygon points="1094.3,253.9 1095.3,257.2 1093.8,253.6 1092.8,250.5" fill="#565656" stroke="#565656" stroke-width="0.7"/>
<path d="M1094.3 253.9L1092.8 250.5" stroke="#141414" stroke-width="0.9" fill="none"/>
<polygon points="1088.1,246.3 1089.9,249 1086.3,248.7 1084.8,246.4" fill="#a9a9a9" stroke="#a9a9a9" stroke-width="0.7"/>
<path d="M1094.3 253.9L1095.3 257.2" stroke="#141414" stroke-width="0.9" fill="none"/>
<path d="M1017.7 248.1L1034.6 243.7" stroke="#141414" stroke-width="0.9" fill="none"/>
<path d="M922.9 301.2L926.1 299.6" stroke="#141414" stroke-width="0.9" fill="none"/>
<polygon points="1092.8,250.5 1093.8,253.6 1090.8,251.9 1089.9,249" fill="#838383" stroke="#838383" stroke-width="0.7"/>
<path d="M980.4 259L997.3 254.6" stroke="#141414" stroke-width="0.9" fill="none"/>
<path d="M1084.8 246.4L1086.3 248.7" stroke="#141414" stroke-width="0.9" fill="none"/>
<polygon points="999.2,251.5 1016.1,247 1017.7,248.1 1000.7,252.6" fill="#b1b1b1" stroke="#b1b1b1" stroke-width="0.7"/>
<polygon points="1100.4,293.3 1098.1,297 1092.5,267 1094.4,263.8" fill="#6a6a6a" stroke="#6a6a6a" stroke-width="0.7"/>
<polygon points="1089.9,249 1090.8,251.9 1087,251.2 1086.3,248.7" fill="#ababab" stroke="#ababab" stroke-width="0.7"/>
<path d="M1098.1 297L1090.5 306.8" stroke="#141414" stroke-width="0.9" fill="none"/>
<path d="M919.8 302.9L922.9 301.2" stroke="#141414" stroke-width="0.9" fill="none"/>
<polygon points="1095.3,257.2 1095.4,260.5 1093.8,256.8 1093.8,253.6" fill="#5c5c5c" stroke="#5c5c5c" stroke-width="0.7"/>
<path d="M1095.3 257.2L1095.4 260.5" stroke="#141414" stroke-width="0.9" fill="none"/>
<path d="M944 293.2L946.5 267.9" stroke="#141414" stroke-width="0.9" fill="none"/>
<polygon points="981,256.2 997.9,251.8 999.2,251.5 982.2,255.9" fill="#989898" stroke="#989898" stroke-width="0.7"/>
<path d="M1086.3 248.7L1087 251.2" stroke="#141414" stroke-width="0.9" fill="none"/>
<polygon points="1093.8,253.6 1093.8,256.8 1090.8,254.8 1090.8,251.9" fill="#898989" stroke="#898989" stroke-width="0.7"/>
<path d="M1000.7 252.6L1017.7 248.1" stroke="#141414" stroke-width="0.9" fill="none"/>
<path d="M916.9 304.6L919.8 302.9" stroke="#141414" stroke-width="0.9" fill="none"/>
<polygon points="1090.8,251.9 1090.8,254.8 1087.1,253.7 1087,251.2" fill="#adadad" stroke="#adadad" stroke-width="0.7"/>
<path d="M1098.1 297L1092.5 267" stroke="#141414" stroke-width="0.9" fill="none"/>
<path d="M963.4 263.4L980.4 259" stroke="#141414" stroke-width="0.9" fill="none"/>
<polygon points="1095.4,260.5 1094.4,263.8 1092.9,260 1093.8,256.8" fill="#626262" stroke="#626262" stroke-width="0.7"/>
<path d="M914.2 306.5L916.9 304.6" stroke="#141414" stroke-width="0.9" fill="none"/>
<polygon points="982.2,255.9 999.2,251.5 1000.7,252.6 983.8,257" fill="#b1b1b1" stroke="#b1b1b1" stroke-width="0.7"/>
<path d="M1087 251.2L1087.1 253.7" stroke="#141414" stroke-width="0.9" fill="none"/>
<path d="M1095.4 260.5L1094.4 263.8" stroke="#141414" stroke-width="0.9" fill="none"/>
<polygon points="1093.8,256.8 1092.9,260 1090,257.6 1090.8,254.8" fill="#8f8f8f" stroke="#8f8f8f" stroke-width="0.7"/>
<polygon points="1090.8,254.8 1090,257.6 1086.4,256.2 1087.1,253.7" fill="#b0b0b0" stroke="#b0b0b0" stroke-width="0.7"/>
<path d="M911.6 308.4L914.2 306.5" stroke="#141414" stroke-width="0.9" fill="none"/>
<polygon points="964.1,260.6 981,256.2 982.2,255.9 965.3,260.3" fill="#989898" stroke="#989898" stroke-width="0.7"/>
<polygon points="1098.1,297 1090.5,306.8 1084.8,276.7 1092.5,267" fill="#6a6a6a" stroke="#6a6a6a" stroke-width="0.7"/>
<polygon points="1051.5,239.3 1055.6,238.5 1000.2,254.5 997.2,253.9" fill="#a0a0a0" stroke="#a0a0a0" stroke-width="0.7"/>
<path d="M983.8 257L1000.7 252.6" stroke="#141414" stroke-width="0.9" fill="none"/>
<polygon points="1055.6,238.5 1059.9,238.1 1003.6,255.3 1000.2,254.5" fill="#ababab" stroke="#ababab" stroke-width="0.7"/>
<path d="M1087.1 253.7L1086.4 256.2" stroke="#141414" stroke-width="0.9" fill="none"/>
<polygon points="1059.9,238.1 1064.3,238.1 1007.2,256.4 1003.6,255.3" fill="#b0b0b0" stroke="#b0b0b0" stroke-width="0.7"/>
<polygon points="1094.4,263.8 1092.5,267 1091.1,263 1092.9,260" fill="#676767" stroke="#676767" stroke-width="0.7"/>
<path d="M1094.4 263.8L1092.5 267" stroke="#141414" stroke-width="0.9" fill="none"/>
<polygon points="1064.3,238.1 1068.6,238.5 1011,257.6 1007.2,256.4" fill="#b2b2b2" stroke="#b2b2b2" stroke-width="0.7"/>
<path d="M909.2 310.4L911.6 308.4" stroke="#141414" stroke-width="0.9" fill="none"/>
<path d="M946.5 267.9L963.4 263.4" stroke="#141414" stroke-width="0.9" fill="none"/>
<path d="M1051.5 239.3L997.2 253.9" stroke="#141414" stroke-width="0.9" fill="none"/>
<polygon points="1092.9,260 1091.1,263 1088.3,260.3 1090,257.6" fill="#969696" stroke="#969696" stroke-width="0.7"/>
<polygon points="1090,257.6 1088.3,260.3 1084.9,258.6 1086.4,256.2" fill="#b3b3b3" stroke="#b3b3b3" stroke-width="0.7"/>
<path d="M1051.5 239.3L997.2 253.9" stroke="#141414" stroke-width="0.9" fill="none"/>
<polygon points="965.3,260.3 982.2,255.9 983.8,257 966.9,261.4" fill="#b1b1b1" stroke="#b1b1b1" stroke-width="0.7"/>
<polygon points="1068.6,238.5 1072.7,239.4 1014.8,259.1 1011,257.6" fill="#b4b4b4" stroke="#b4b4b4" stroke-width="0.7"/>
<path d="M1086.4 256.2L1084.9 258.6" stroke="#141414" stroke-width="0.9" fill="none"/>
<path d="M1092.5 267L1091.1 263" stroke="#141414" stroke-width="0.9" fill="none"/>
<path d="M907 312.5L909.2 310.4" stroke="#141414" stroke-width="0.9" fill="none"/>
<polygon points="1072.7,239.4 1076.4,240.7 1018.6,260.9 1014.8,259.1" fill="#b5b5b5" stroke="#b5b5b5" stroke-width="0.7"/>
<path d="M1090.5 306.8L1082.8 316.6" stroke="#141414" stroke-width="0.9" fill="none"/>
<polygon points="947.1,265 964.1,260.6 965.3,260.3 948.4,264.7" fill="#989898" stroke="#989898" stroke-width="0.7"/>
<path d="M943 268.8L946.5 267.9" stroke="#141414" stroke-width="0.9" fill="none"/>
<path d="M1088.3 260.3L1084.9 258.6" stroke="#141414" stroke-width="0.9" fill="none"/>
<path d="M1091.1 263L1088.3 260.3" stroke="#141414" stroke-width="0.9" fill="none"/>
<path d="M966.9 261.4L983.8 257" stroke="#141414" stroke-width="0.9" fill="none"/>
<path d="M946.5 267.9L947.1 265" stroke="#141414" stroke-width="0.9" fill="none"/>
<path d="M939.6 269.9L943 268.8" stroke="#141414" stroke-width="0.9" fill="none"/>
<polygon points="1076.4,240.7 1079.8,242.3 1022.3,262.8 1018.6,260.9" fill="#b6b6b6" stroke="#b6b6b6" stroke-width="0.7"/>
<path d="M905 314.6L907 312.5" stroke="#141414" stroke-width="0.9" fill="none"/>
<path d="M936.3 271.1L939.6 269.9" stroke="#141414" stroke-width="0.9" fill="none"/>
<polygon points="948.4,264.7 965.3,260.3 966.9,261.4 949.9,265.8" fill="#b1b1b1" stroke="#b1b1b1" stroke-width="0.7"/>
<polygon points="943.7,266 947.1,265 948.4,264.7 945.1,265.6" fill="#999999" stroke="#999999" stroke-width="0.7"/>
<polygon points="1092.5,267 1084.8,276.7 1083.4,272.7 1091.1,263" fill="#696969" stroke="#696969" stroke-width="0.7"/>
<polygon points="1079.8,242.3 1082.6,244.2 1025.6,264.9 1022.3,262.8" fill="#b6b6b6" stroke="#b6b6b6" stroke-width="0.7"/>
<path d="M933.1 272.4L936.3 271.1" stroke="#141414" stroke-width="0.9" fill="none"/>
<path d="M947.1 265L948.4 264.7" stroke="#141414" stroke-width="0.9" fill="none"/>
<path d="M1092.5 267L1084.8 276.7" stroke="#141414" stroke-width="0.9" fill="none"/>
<polygon points="940.3,267.1 943.7,266 945.1,265.6 941.9,266.7" fill="#9b9b9b" stroke="#9b9b9b" stroke-width="0.7"/>
<path d="M903.1 316.8L905 314.6" stroke="#141414" stroke-width="0.9" fill="none"/>
<polygon points="1088.3,260.3 1080.7,270.1 1077.3,268.4 1084.9,258.6" fill="#b5b5b5" stroke="#b5b5b5" stroke-width="0.7"/>
<polygon points="1091.1,263 1083.4,272.7 1080.7,270.1 1088.3,260.3" fill="#9a9a9a" stroke="#9a9a9a" stroke-width="0.7"/>
<polygon points="937.1,268.2 940.3,267.1 941.9,266.7 938.8,267.8" fill="#9d9d9d" stroke="#9d9d9d" stroke-width="0.7"/>
<path d="M1084.9 258.6L1077.3 268.4" stroke="#141414" stroke-width="0.9" fill="none"/>
<path d="M930 273.8L933.1 272.4" stroke="#141414" stroke-width="0.9" fill="none"/>
<path d="M949.9 265.8L966.9 261.4" stroke="#141414" stroke-width="0.9" fill="none"/>
<polygon points="945.1,265.6 948.4,264.7 949.9,265.8 946.8,266.7" fill="#b2b2b2" stroke="#b2b2b2" stroke-width="0.7"/>
<polygon points="1082.6,244.2 1084.8,246.4 1028.6,267.1 1025.6,264.9" fill="#b6b6b6" stroke="#b6b6b6" stroke-width="0.7"/>
<polygon points="1090.5,306.8 1082.8,316.6 1077.2,286.5 1084.8,276.7" fill="#6a6a6a" stroke="#6a6a6a" stroke-width="0.7"/>
<polygon points="934,269.5 937.1,268.2 938.8,267.8 935.8,269" fill="#9f9f9f" stroke="#9f9f9f" stroke-width="0.7"/>
<path d="M948.4 264.7L949.9 265.8" stroke="#141414" stroke-width="0.9" fill="none"/>
<polygon points="941.9,266.7 945.1,265.6 946.8,266.7 943.8,267.7" fill="#b3b3b3" stroke="#b3b3b3" stroke-width="0.7"/>
<path d="M927 275.2L930 273.8" stroke="#141414" stroke-width="0.9" fill="none"/>
<polygon points="938.8,267.8 941.9,266.7 943.8,267.7 940.8,268.7" fill="#b4b4b4" stroke="#b4b4b4" stroke-width="0.7"/>
<polygon points="930.9,270.8 934,269.5 935.8,269 932.9,270.3" fill="#a1a1a1" stroke="#a1a1a1" stroke-width="0.7"/>
<polygon points="1084.8,246.4 1086.3,248.7 1031.2,269.3 1028.6,267.1" fill="#b6b6b6" stroke="#b6b6b6" stroke-width="0.7"/>
<path d="M946.8 266.7L949.9 265.8" stroke="#141414" stroke-width="0.9" fill="none"/>
<path d="M924.2 276.8L927 275.2" stroke="#141414" stroke-width="0.9" fill="none"/>
<polygon points="935.8,269 938.8,267.8 940.8,268.7 938,269.9" fill="#b5b5b5" stroke="#b5b5b5" stroke-width="0.7"/>
<path d="M943.8 267.7L946.8 266.7" stroke="#141414" stroke-width="0.9" fill="none"/>
<polygon points="928,272.2 930.9,270.8 932.9,270.3 930.1,271.6" fill="#a3a3a3" stroke="#a3a3a3" stroke-width="0.7"/>
<path d="M921.5 278.4L924.2 276.8" stroke="#141414" stroke-width="0.9" fill="none"/>
<polygon points="977.6,292.9 983.1,293.1 982.4,302.2 977.6,302" fill="#cacaca" stroke="#cacaca" stroke-width="0.7"/>
<polygon points="972.2,293.1 977.6,292.9 977.6,302 972.9,302.2" fill="#c5c5c5" stroke="#c5c5c5" stroke-width="0.7"/>
<polygon points="932.9,270.3 935.8,269 938,269.9 935.2,271.1" fill="#b6b6b6" stroke="#b6b6b6" stroke-width="0.7"/>
<path d="M1082.8 316.6L1075.1 326.4" stroke="#141414" stroke-width="0.9" fill="none"/>
<path d="M940.8 268.7L943.8 267.7" stroke="#141414" stroke-width="0.9" fill="none"/>
<path d="M895.5 326.6L903.1 316.8" stroke="#141414" stroke-width="0.9" fill="none"/>
<polygon points="1086.3,248.7 1087,251.2 1033.4,271.5 1031.2,269.3" fill="#b5b5b5" stroke="#b5b5b5" stroke-width="0.7"/>
<polygon points="983.1,293.1 988.5,293.7 987,302.7 982.4,302.2" fill="#cecece" stroke="#cecece" stroke-width="0.7"/>
<polygon points="966.8,293.7 972.2,293.1 972.9,302.2 968.3,302.7" fill="#c0c0c0" stroke="#c0c0c0" stroke-width="0.7"/>
<path d="M972.2 293.1L977.6 292.9" stroke="#141414" stroke-width="0.9" fill="none"/>
<path d="M977.6 292.9L983.1 293.1" stroke="#141414" stroke-width="0.9" fill="none"/>
<polygon points="925.3,273.8 928,272.2 930.1,271.6 927.4,273.1" fill="#a5a5a5" stroke="#a5a5a5" stroke-width="0.7"/>
<path d="M983.1 293.1L988.5 293.7" stroke="#141414" stroke-width="0.9" fill="none"/>
<path d="M966.8 293.7L972.2 293.1" stroke="#141414" stroke-width="0.9" fill="none"/>
<path d="M977.6 302L982.4 302.2" stroke="#141414" stroke-width="0.9" fill="none"/>
<path d="M972.9 302.2L977.6 302" stroke="#141414" stroke-width="0.9" fill="none"/>
<polygon points="988.5,293.7 993.7,294.7 991.5,303.6 987,302.7" fill="#d1d1d1" stroke="#d1d1d1" stroke-width="0.7"/>
<polygon points="961.6,294.7 966.8,293.7 968.3,302.7 963.8,303.6" fill="#b9b9b9" stroke="#b9b9b9" stroke-width="0.7"/>
<path d="M982.4 302.2L987 302.7" stroke="#141414" stroke-width="0.9" fill="none"/>
<path d="M968.3 302.7L972.9 302.2" stroke="#141414" stroke-width="0.9" fill="none"/>
<path d="M938 269.9L940.8 268.7" stroke="#141414" stroke-width="0.9" fill="none"/>
<polygon points="930.1,271.6 932.9,270.3 935.2,271.1 932.6,272.4" fill="#b7b7b7" stroke="#b7b7b7" stroke-width="0.7"/>
<path d="M988.5 293.7L993.7 294.7" stroke="#141414" stroke-width="0.9" fill="none"/>
<path d="M961.6 294.7L966.8 293.7" stroke="#141414" stroke-width="0.9" fill="none"/>
<path d="M919 280.1L921.5 278.4" stroke="#141414" stroke-width="0.9" fill="none"/>
<path d="M987 302.7L991.5 303.6" stroke="#141414" stroke-width="0.9" fill="none"/>
<path d="M963.8 303.6L968.3 302.7" stroke="#141414" stroke-width="0.9" fill="none"/>
<polygon points="922.6,275.4 925.3,273.8 927.4,273.1 924.9,274.6" fill="#a6a6a6" stroke="#a6a6a6" stroke-width="0.7"/>
<polygon points="993.7,294.7 998.7,296.1 995.8,304.8 991.5,303.6" fill="#d4d4d4" stroke="#d4d4d4" stroke-width="0.7"/>
<polygon points="956.6,296.1 961.6,294.7 963.8,303.6 959.5,304.8" fill="#b3b3b3" stroke="#b3b3b3" stroke-width="0.7"/>
<path d="M935.2 271.1L938 269.9" stroke="#141414" stroke-width="0.9" fill="none"/>
<polygon points="1087,251.2 1087.1,253.7 1035.2,273.6 1033.4,271.5" fill="#b4b4b4" stroke="#b4b4b4" stroke-width="0.7"/>
<polygon points="927.4,273.1 930.1,271.6 932.6,272.4 930.1,273.8" fill="#b8b8b8" stroke="#b8b8b8" stroke-width="0.7"/>
<path d="M993.7 294.7L998.7 296.1" stroke="#141414" stroke-width="0.9" fill="none"/>
<path d="M956.6 296.1L961.6 294.7" stroke="#141414" stroke-width="0.9" fill="none"/>
<polygon points="972,278.3 977.6,278.1 977.6,292.9 972.2,293.1" fill="#c2c2c2" stroke="#c2c2c2" stroke-width="0.7"/>
<polygon points="977.6,278.1 983.3,278.3 983.1,293.1 977.6,292.9" fill="#c9c9c9" stroke="#c9c9c9" stroke-width="0.7"/>
<path d="M991.5 303.6L995.8 304.8" stroke="#141414" stroke-width="0.9" fill="none"/>
<path d="M959.5 304.8L963.8 303.6" stroke="#141414" stroke-width="0.9" fill="none"/>
<path d="M969.4 252.4L977.6 252.1" stroke="#141414" stroke-width="0.9" fill="none"/>
<path d="M977.6 252.1L985.9 252.4" stroke="#141414" stroke-width="0.9" fill="none"/>
<polygon points="983.3,278.3 988.8,278.9 988.5,293.7 983.1,293.1" fill="#cfcfcf" stroke="#cfcfcf" stroke-width="0.7"/>
<polygon points="966.5,278.9 972,278.3 972.2,293.1 966.8,293.7" fill="#bababa" stroke="#bababa" stroke-width="0.7"/>
<path d="M916.6 281.9L919 280.1" stroke="#141414" stroke-width="0.9" fill="none"/>
<polygon points="1084.8,276.7 1077.2,286.5 1075.8,282.5 1083.4,272.7" fill="#696969" stroke="#696969" stroke-width="0.7"/>
<path d="M949.9 265.8L943 258.1" stroke="#141414" stroke-width="0.9" fill="none"/>
<path d="M932.6 272.4L935.2 271.1" stroke="#141414" stroke-width="0.9" fill="none"/>
<polygon points="998.7,296.1 1003.3,297.9 999.7,306.3 995.8,304.8" fill="#d5d5d5" stroke="#d5d5d5" stroke-width="0.7"/>
<polygon points="952,297.9 956.6,296.1 959.5,304.8 955.6,306.3" fill="#ababab" stroke="#ababab" stroke-width="0.7"/>
<polygon points="920.2,277 922.6,275.4 924.9,274.6 922.5,276.2" fill="#a8a8a8" stroke="#a8a8a8" stroke-width="0.7"/>
<path d="M985.9 252.4L994 253.4" stroke="#141414" stroke-width="0.9" fill="none"/>
<path d="M961.3 253.4L969.4 252.4" stroke="#141414" stroke-width="0.9" fill="none"/>
<path d="M1084.8 276.7L1077.2 286.5" stroke="#141414" stroke-width="0.9" fill="none"/>
<polygon points="977.6,252.1 985.9,252.4 983.3,278.3 977.6,278.1" fill="#e4e4e4" stroke="#e4e4e4" stroke-width="0.7"/>
<polygon points="969.4,252.4 977.6,252.1 977.6,278.1 972,278.3" fill="#dcdcdc" stroke="#dcdcdc" stroke-width="0.7"/>
<polygon points="1080.7,270.1 1073,279.9 1069.6,278.1 1077.3,268.4" fill="#b5b5b5" stroke="#b5b5b5" stroke-width="0.7"/>
<path d="M903.1 316.8L908.8 289.6" stroke="#141414" stroke-width="0.9" fill="none"/>
<polygon points="924.9,274.6 927.4,273.1 930.1,273.8 927.7,275.2" fill="#b9b9b9" stroke="#b9b9b9" stroke-width="0.7"/>
<polygon points="988.8,278.9 994.2,280 993.7,294.7 988.5,293.7" fill="#d3d3d3" stroke="#d3d3d3" stroke-width="0.7"/>
<polygon points="961.1,280 966.5,278.9 966.8,293.7 961.6,294.7" fill="#b2b2b2" stroke="#b2b2b2" stroke-width="0.7"/>
<polygon points="1083.4,272.7 1075.8,282.5 1073,279.9 1080.7,270.1" fill="#9a9a9a" stroke="#9a9a9a" stroke-width="0.7"/>
<path d="M995.8 304.8L999.7 306.3" stroke="#141414" stroke-width="0.9" fill="none"/>
<path d="M955.6 306.3L959.5 304.8" stroke="#141414" stroke-width="0.9" fill="none"/>
<path d="M998.7 296.1L1003.3 297.9" stroke="#141414" stroke-width="0.9" fill="none"/>
<path d="M952 297.9L956.6 296.1" stroke="#141414" stroke-width="0.9" fill="none"/>
<polygon points="961.3,253.4 969.4,252.4 972,278.3 966.5,278.9" fill="#d3d3d3" stroke="#d3d3d3" stroke-width="0.7"/>
<polygon points="985.9,252.4 994,253.4 988.8,278.9 983.3,278.3" fill="#ebebeb" stroke="#ebebeb" stroke-width="0.7"/>
<polygon points="1087.1,253.7 1086.4,256.2 1036.6,275.5 1035.2,273.6" fill="#b1b1b1" stroke="#b1b1b1" stroke-width="0.7"/>
<path d="M930.1 273.8L932.6 272.4" stroke="#141414" stroke-width="0.9" fill="none"/>
<path d="M994 253.4L1001.8 254.9" stroke="#141414" stroke-width="0.9" fill="none"/>
<path d="M953.5 254.9L961.3 253.4" stroke="#141414" stroke-width="0.9" fill="none"/>
<path d="M914.4 283.7L916.6 281.9" stroke="#141414" stroke-width="0.9" fill="none"/>
<path d="M1077.3 268.4L1069.6 278.1" stroke="#141414" stroke-width="0.9" fill="none"/>
<polygon points="994.2,280 999.3,281.4 998.7,296.1 993.7,294.7" fill="#d7d7d7" stroke="#d7d7d7" stroke-width="0.7"/>
<polygon points="956,281.4 961.1,280 961.6,294.7 956.6,296.1" fill="#a9a9a9" stroke="#a9a9a9" stroke-width="0.7"/>
<polygon points="917.8,278.8 920.2,277 922.5,276.2 920.3,277.9" fill="#aaaaaa" stroke="#aaaaaa" stroke-width="0.7"/>
<polygon points="1003.3,297.9 1007.4,300 1003.3,308.1 999.7,306.3" fill="#d5d5d5" stroke="#d5d5d5" stroke-width="0.7"/>
<polygon points="947.9,300 952,297.9 955.6,306.3 952,308.1" fill="#a4a4a4" stroke="#a4a4a4" stroke-width="0.7"/>
<polygon points="994,253.4 1001.8,254.9 994.2,280 988.8,278.9" fill="#f0f0f0" stroke="#f0f0f0" stroke-width="0.7"/>
<polygon points="953.5,254.9 961.3,253.4 966.5,278.9 961.1,280" fill="#cacaca" stroke="#cacaca" stroke-width="0.7"/>
<polygon points="922.5,276.2 924.9,274.6 927.7,275.2 925.4,276.7" fill="#bababa" stroke="#bababa" stroke-width="0.7"/>
<path d="M999.7 306.3L1003.3 308.1" stroke="#141414" stroke-width="0.9" fill="none"/>
<path d="M952 308.1L955.6 306.3" stroke="#141414" stroke-width="0.9" fill="none"/>
<polygon points="1082.8,316.6 1075.1,326.4 1069.5,296.3 1077.2,286.5" fill="#6a6a6a" stroke="#6a6a6a" stroke-width="0.7"/>
<path d="M1003.3 297.9L1007.4 300" stroke="#141414" stroke-width="0.9" fill="none"/>
<path d="M947.9 300L952 297.9" stroke="#141414" stroke-width="0.9" fill="none"/>
<path d="M927.7 275.2L930.1 273.8" stroke="#141414" stroke-width="0.9" fill="none"/>
<path d="M1001.8 254.9L1009.2 257" stroke="#141414" stroke-width="0.9" fill="none"/>
<path d="M946.1 257L953.5 254.9" stroke="#141414" stroke-width="0.9" fill="none"/>
<path d="M977.6 278.1L983.3 278.3" stroke="#141414" stroke-width="0.9" fill="none"/>
<path d="M972 278.3L977.6 278.1" stroke="#141414" stroke-width="0.9" fill="none"/>
<polygon points="999.3,281.4 1004,283.2 1003.3,297.9 998.7,296.1" fill="#dadada" stroke="#dadada" stroke-width="0.7"/>
<polygon points="951.3,283.2 956,281.4 956.6,296.1 952,297.9" fill="#a0a0a0" stroke="#a0a0a0" stroke-width="0.7"/>
<polygon points="1086.4,256.2 1084.9,258.6 1037.6,277.2 1036.6,275.5" fill="#aaaaaa" stroke="#aaaaaa" stroke-width="0.7"/>
<path d="M912.3 285.7L914.4 283.7" stroke="#141414" stroke-width="0.9" fill="none"/>
<polygon points="1001.8,254.9 1009.2,257 999.3,281.4 994.2,280" fill="#f5f5f5" stroke="#f5f5f5" stroke-width="0.7"/>
<polygon points="946.1,257 953.5,254.9 961.1,280 956,281.4" fill="#c1c1c1" stroke="#c1c1c1" stroke-width="0.7"/>
<polygon points="915.7,280.6 917.8,278.8 920.3,277.9 918.2,279.6" fill="#acacac" stroke="#acacac" stroke-width="0.7"/>
<polygon points="920.3,277.9 922.5,276.2 925.4,276.7 923.3,278.3" fill="#bbbbbb" stroke="#bbbbbb" stroke-width="0.7"/>
<path d="M983.3 278.3L988.8 278.9" stroke="#141414" stroke-width="0.9" fill="none"/>
<path d="M966.5 278.9L972 278.3" stroke="#141414" stroke-width="0.9" fill="none"/>
<polygon points="1007.4,300 1011,302.4 1006.4,310.2 1003.3,308.1" fill="#d5d5d5" stroke="#d5d5d5" stroke-width="0.7"/>
<polygon points="944.3,302.4 947.9,300 952,308.1 948.9,310.2" fill="#9c9c9c" stroke="#9c9c9c" stroke-width="0.7"/>
<path d="M925.4 276.7L927.7 275.2" stroke="#141414" stroke-width="0.9" fill="none"/>
<path d="M1003.3 308.1L1006.4 310.2" stroke="#141414" stroke-width="0.9" fill="none"/>
<path d="M948.9 310.2L952 308.1" stroke="#141414" stroke-width="0.9" fill="none"/>
<path d="M988.8 278.9L994.2 280" stroke="#141414" stroke-width="0.9" fill="none"/>
<path d="M961.1 280L966.5 278.9" stroke="#141414" stroke-width="0.9" fill="none"/>
<path d="M1007.4 300L1011 302.4" stroke="#141414" stroke-width="0.9" fill="none"/>
<path d="M944.3 302.4L947.9 300" stroke="#141414" stroke-width="0.9" fill="none"/>
<polygon points="918.2,279.6 920.3,277.9 923.3,278.3 921.3,280" fill="#bcbcbc" stroke="#bcbcbc" stroke-width="0.7"/>
<polygon points="913.7,282.5 915.7,280.6 918.2,279.6 916.3,281.4" fill="#adadad" stroke="#adadad" stroke-width="0.7"/>
<polygon points="1004,283.2 1008.2,285.4 1007.4,300 1003.3,297.9" fill="#dbdbdb" stroke="#dbdbdb" stroke-width="0.7"/>
<polygon points="947.1,285.4 951.3,283.2 952,297.9 947.9,300" fill="#969696" stroke="#969696" stroke-width="0.7"/>
<path d="M910.5 287.6L912.3 285.7" stroke="#141414" stroke-width="0.9" fill="none"/>
<polygon points="1009.2,257 1016.1,259.7 1004,283.2 999.3,281.4" fill="#f8f8f8" stroke="#f8f8f8" stroke-width="0.7"/>
<polygon points="939.2,259.7 946.1,257 956,281.4 951.3,283.2" fill="#b8b8b8" stroke="#b8b8b8" stroke-width="0.7"/>
<path d="M1009.2 257L1016.1 259.7" stroke="#141414" stroke-width="0.9" fill="none"/>
<path d="M939.2 259.7L946.1 257" stroke="#141414" stroke-width="0.9" fill="none"/>
<path d="M1084.9 258.6L1037.6 277.2" stroke="#141414" stroke-width="0.9" fill="none"/>
<path d="M994.2 280L999.3 281.4" stroke="#141414" stroke-width="0.9" fill="none"/>
<path d="M956 281.4L961.1 280" stroke="#141414" stroke-width="0.9" fill="none"/>
<path d="M923.3 278.3L925.4 276.7" stroke="#141414" stroke-width="0.9" fill="none"/>
<path d="M1075.1 326.4L1067.5 336.2" stroke="#141414" stroke-width="0.9" fill="none"/>
<polygon points="1011,302.4 1014.1,305 1009,312.4 1006.4,310.2" fill="#d3d3d3" stroke="#d3d3d3" stroke-width="0.7"/>
<polygon points="941.2,305 944.3,302.4 948.9,310.2 946.3,312.4" fill="#949494" stroke="#949494" stroke-width="0.7"/>
<path d="M887.8 336.3L895.5 326.6" stroke="#141414" stroke-width="0.9" fill="none"/>
<path d="M1006.4 310.2L1009 312.4" stroke="#141414" stroke-width="0.9" fill="none"/>
<path d="M946.3 312.4L948.9 310.2" stroke="#141414" stroke-width="0.9" fill="none"/>
<polygon points="916.3,281.4 918.2,279.6 921.3,280 919.5,281.7" fill="#bdbdbd" stroke="#bdbdbd" stroke-width="0.7"/>
<polygon points="911.8,284.4 913.7,282.5 916.3,281.4 914.5,283.3" fill="#afafaf" stroke="#afafaf" stroke-width="0.7"/>
<path d="M908.8 289.6L910.5 287.6" stroke="#141414" stroke-width="0.9" fill="none"/>
<path d="M999.3 281.4L1004 283.2" stroke="#141414" stroke-width="0.9" fill="none"/>
<path d="M951.3 283.2L956 281.4" stroke="#141414" stroke-width="0.9" fill="none"/>
<path d="M921.3 280L923.3 278.3" stroke="#141414" stroke-width="0.9" fill="none"/>
<path d="M1011 302.4L1014.1 305" stroke="#141414" stroke-width="0.9" fill="none"/>
<path d="M941.2 305L944.3 302.4" stroke="#141414" stroke-width="0.9" fill="none"/>
<polygon points="1008.2,285.4 1011.9,287.9 1011,302.4 1007.4,300" fill="#dbdbdb" stroke="#dbdbdb" stroke-width="0.7"/>
<polygon points="943.4,287.9 947.1,285.4 947.9,300 944.3,302.4" fill="#8d8d8d" stroke="#8d8d8d" stroke-width="0.7"/>
<polygon points="1016.1,259.7 1022.3,262.8 1008.2,285.4 1004,283.2" fill="#f9f9f9" stroke="#f9f9f9" stroke-width="0.7"/>
<polygon points="933,262.8 939.2,259.7 951.3,283.2 947.1,285.4" fill="#afafaf" stroke="#afafaf" stroke-width="0.7"/>
<polygon points="1084.9,258.6 1077.3,268.4 1039.7,281.9 1037.6,277.2" fill="#a0a0a0" stroke="#a0a0a0" stroke-width="0.7"/>
<path d="M1016.1 259.7L1022.3 262.8" stroke="#141414" stroke-width="0.9" fill="none"/>
<path d="M933 262.8L939.2 259.7" stroke="#141414" stroke-width="0.9" fill="none"/>
<polygon points="914.5,283.3 916.3,281.4 919.5,281.7 917.8,283.4" fill="#bebebe" stroke="#bebebe" stroke-width="0.7"/>
<path d="M1009 312.4L1011.1 314.9" stroke="#141414" stroke-width="0.9" fill="none"/>
<path d="M944.2 314.9L946.3 312.4" stroke="#141414" stroke-width="0.9" fill="none"/>
<polygon points="1014.1,305 1016.5,307.9 1011.1,314.9 1009,312.4" fill="#d0d0d0" stroke="#d0d0d0" stroke-width="0.7"/>
<polygon points="938.8,307.9 941.2,305 946.3,312.4 944.2,314.9" fill="#8d8d8d" stroke="#8d8d8d" stroke-width="0.7"/>
<polygon points="910.2,286.4 911.8,284.4 914.5,283.3 912.9,285.2" fill="#b0b0b0" stroke="#b0b0b0" stroke-width="0.7"/>
<path d="M919.5 281.7L921.3 280" stroke="#141414" stroke-width="0.9" fill="none"/>
<path d="M1004 283.2L1008.2 285.4" stroke="#141414" stroke-width="0.9" fill="none"/>
<path d="M947.1 285.4L951.3 283.2" stroke="#141414" stroke-width="0.9" fill="none"/>
<path d="M908.8 289.6L910.2 286.4" stroke="#141414" stroke-width="0.9" fill="none"/>
<polygon points="1077.2,286.5 1069.5,296.3 1068.1,292.3 1075.8,282.5" fill="#696969" stroke="#696969" stroke-width="0.7"/>
<path d="M1077.2 286.5L1069.5 296.3" stroke="#141414" stroke-width="0.9" fill="none"/>
<polygon points="1011.9,287.9 1015.1,290.6 1014.1,305 1011,302.4" fill="#dadada" stroke="#dadada" stroke-width="0.7"/>
<polygon points="940.2,290.6 943.4,287.9 944.3,302.4 941.2,305" fill="#838383" stroke="#838383" stroke-width="0.7"/>
<path d="M1014.1 305L1016.5 307.9" stroke="#141414" stroke-width="0.9" fill="none"/>
<path d="M938.8 307.9L941.2 305" stroke="#141414" stroke-width="0.9" fill="none"/>
<polygon points="1073,279.9 1065.4,289.7 1061.9,287.9 1069.6,278.1" fill="#b5b5b5" stroke="#b5b5b5" stroke-width="0.7"/>
<polygon points="1075.8,282.5 1068.1,292.3 1065.4,289.7 1073,279.9" fill="#9a9a9a" stroke="#9a9a9a" stroke-width="0.7"/>
<polygon points="912.9,285.2 914.5,283.3 917.8,283.4 916.3,285.2" fill="#bfbfbf" stroke="#bfbfbf" stroke-width="0.7"/>
<polygon points="1022.3,262.8 1027.7,266.4 1011.9,287.9 1008.2,285.4" fill="#f9f9f9" stroke="#f9f9f9" stroke-width="0.7"/>
<polygon points="927.6,266.4 933,262.8 947.1,285.4 943.4,287.9" fill="#a7a7a7" stroke="#a7a7a7" stroke-width="0.7"/>
<path d="M917.8 283.4L919.5 281.7" stroke="#141414" stroke-width="0.9" fill="none"/>
<path d="M1069.6 278.1L1061.9 287.9" stroke="#141414" stroke-width="0.9" fill="none"/>
<path d="M1011.1 314.9L1012.6 317.5" stroke="#141414" stroke-width="0.9" fill="none"/>
<path d="M942.7 317.5L944.2 314.9" stroke="#141414" stroke-width="0.9" fill="none"/>
<path d="M910.2 286.4L912.9 285.2" stroke="#141414" stroke-width="0.9" fill="none"/>
<polygon points="1016.5,307.9 1018.3,310.9 1012.6,317.5 1011.1,314.9" fill="#cdcdcd" stroke="#cdcdcd" stroke-width="0.7"/>
<polygon points="937,310.9 938.8,307.9 944.2,314.9 942.7,317.5" fill="#868686" stroke="#868686" stroke-width="0.7"/>
<path d="M1008.2 285.4L1011.9 287.9" stroke="#141414" stroke-width="0.9" fill="none"/>
<path d="M943.4 287.9L947.1 285.4" stroke="#141414" stroke-width="0.9" fill="none"/>
<path d="M1022.3 262.8L1027.7 266.4" stroke="#141414" stroke-width="0.9" fill="none"/>
<path d="M927.6 266.4L933 262.8" stroke="#141414" stroke-width="0.9" fill="none"/>
<polygon points="1075.1,326.4 1067.5,336.2 1061.8,306.1 1069.5,296.3" fill="#6a6a6a" stroke="#6a6a6a" stroke-width="0.7"/>
<path d="M916.3 285.2L917.8 283.4" stroke="#141414" stroke-width="0.9" fill="none"/>
<path d="M912.9 285.2L916.3 285.2" stroke="#141414" stroke-width="0.9" fill="none"/>
<polygon points="1015.1,290.6 1017.6,293.5 1016.5,307.9 1014.1,305" fill="#d7d7d7" stroke="#d7d7d7" stroke-width="0.7"/>
<polygon points="937.7,293.5 940.2,290.6 941.2,305 938.8,307.9" fill="#7a7a7a" stroke="#7a7a7a" stroke-width="0.7"/>
<path d="M1016.5 307.9L1018.3 310.9" stroke="#141414" stroke-width="0.9" fill="none"/>
<path d="M937 310.9L938.8 307.9" stroke="#141414" stroke-width="0.9" fill="none"/>
<path d="M901.1 299.4L908.8 289.6" stroke="#141414" stroke-width="0.9" fill="none"/>
<polygon points="1027.7,266.4 1032.3,270.3 1015.1,290.6 1011.9,287.9" fill="#f8f8f8" stroke="#f8f8f8" stroke-width="0.7"/>
<polygon points="923,270.3 927.6,266.4 943.4,287.9 940.2,290.6" fill="#9f9f9f" stroke="#9f9f9f" stroke-width="0.7"/>
<path d="M1012.6 317.5L1013.6 320.2" stroke="#141414" stroke-width="0.9" fill="none"/>
<path d="M941.7 320.2L942.7 317.5" stroke="#141414" stroke-width="0.9" fill="none"/>
<path d="M1011.9 287.9L1015.1 290.6" stroke="#141414" stroke-width="0.9" fill="none"/>
<path d="M940.2 290.6L943.4 287.9" stroke="#141414" stroke-width="0.9" fill="none"/>
<polygon points="1018.3,310.9 1019.4,314 1013.6,320.2 1012.6,317.5" fill="#c8c8c8" stroke="#c8c8c8" stroke-width="0.7"/>
<polygon points="935.9,314 937,310.9 942.7,317.5 941.7,320.2" fill="#7f7f7f" stroke="#7f7f7f" stroke-width="0.7"/>
<path d="M916.3 285.2L924.9 268.6" stroke="#141414" stroke-width="0.9" fill="none"/>
<polygon points="902.5,296.2 910.2,286.4 912.9,285.2 905.3,295" fill="#b1b1b1" stroke="#b1b1b1" stroke-width="0.7"/>
<polygon points="1077.3,268.4 1069.6,278.1 1040.7,287.2 1039.7,281.9" fill="#919191" stroke="#919191" stroke-width="0.7"/>
<path d="M1027.7 266.4L1032.3 270.3" stroke="#141414" stroke-width="0.9" fill="none"/>
<path d="M923 270.3L927.6 266.4" stroke="#141414" stroke-width="0.9" fill="none"/>
<polygon points="1017.6,293.5 1019.4,296.6 1018.3,310.9 1016.5,307.9" fill="#d3d3d3" stroke="#d3d3d3" stroke-width="0.7"/>
<polygon points="935.9,296.6 937.7,293.5 938.8,307.9 937,310.9" fill="#717171" stroke="#717171" stroke-width="0.7"/>
<path d="M1067.5 336.2L1059.8 345.9" stroke="#141414" stroke-width="0.9" fill="none"/>
<path d="M1018.3 310.9L1019.4 314" stroke="#141414" stroke-width="0.9" fill="none"/>
<path d="M935.9 314L937 310.9" stroke="#141414" stroke-width="0.9" fill="none"/>
<path d="M880.2 346.1L887.8 336.3" stroke="#141414" stroke-width="0.9" fill="none"/>
<polygon points="905.3,295 912.9,285.2 916.3,285.2 908.7,295" fill="#bfbfbf" stroke="#bfbfbf" stroke-width="0.7"/>
<path d="M1013.6 320.2L1013.9 322.9" stroke="#141414" stroke-width="0.9" fill="none"/>
<path d="M941.4 322.9L941.7 320.2" stroke="#141414" stroke-width="0.9" fill="none"/>
<path d="M1015.1 290.6L1017.6 293.5" stroke="#141414" stroke-width="0.9" fill="none"/>
<path d="M937.7 293.5L940.2 290.6" stroke="#141414" stroke-width="0.9" fill="none"/>
<polygon points="1019.4,314 1019.7,317.2 1013.9,322.9 1013.6,320.2" fill="#c3c3c3" stroke="#c3c3c3" stroke-width="0.7"/>
<polygon points="935.6,317.2 935.9,314 941.7,320.2 941.4,322.9" fill="#787878" stroke="#787878" stroke-width="0.7"/>
<polygon points="1003.3,308.1 1006.4,310.2 1009,312.4 1011.1,314.9 1012.6,317.5 1013.6,320.2 1013.9,322.9 1013.6,325.6 1012.6,328.3 1011.1,330.9 1009,333.3 1006.4,335.6 1003.3,337.7 999.7,339.5 995.8,341 991.5,342.2 987,343.1 982.4,343.6 977.6,343.8 972.9,343.6 968.3,343.1 963.8,342.2 959.5,341 955.6,339.5 952,337.7 948.9,335.6 946.3,333.3 944.2,330.9 942.7,328.3 941.7,325.6 941.4,322.9 941.7,320.2 942.7,317.5 944.2,314.9 946.3,312.4 948.9,310.2 952,308.1 955.6,306.3 959.5,304.8 963.8,303.6 968.3,302.7 972.9,302.2 977.6,302 982.4,302.2 987,302.7 991.5,303.6 995.8,304.8 999.7,306.3" fill="#c8c8c8" stroke="#c8c8c8" stroke-width="0.7"/>
<polygon points="1032.3,270.3 1035.9,274.6 1017.6,293.5 1015.1,290.6" fill="#f5f5f5" stroke="#f5f5f5" stroke-width="0.7"/>
<polygon points="919.4,274.6 923,270.3 940.2,290.6 937.7,293.5" fill="#989898" stroke="#989898" stroke-width="0.7"/>
<path d="M908.7 295L916.3 285.2" stroke="#141414" stroke-width="0.9" fill="none"/>
<polygon points="1019.4,296.6 1020.5,299.8 1019.4,314 1018.3,310.9" fill="#cfcfcf" stroke="#cfcfcf" stroke-width="0.7"/>
<polygon points="934.8,299.8 935.9,296.6 937,310.9 935.9,314" fill="#696969" stroke="#696969" stroke-width="0.7"/>
<polygon points="1069.5,296.3 1061.8,306.1 1060.5,302.1 1068.1,292.3" fill="#696969" stroke="#696969" stroke-width="0.7"/>
<path d="M1019.4 314L1019.7 317.2" stroke="#141414" stroke-width="0.9" fill="none"/>
<path d="M935.6 317.2L935.9 314" stroke="#141414" stroke-width="0.9" fill="none"/>
<path d="M1013.9 322.9L1013.6 325.6" stroke="#141414" stroke-width="0.9" fill="none"/>
<path d="M941.7 325.6L941.4 322.9" stroke="#141414" stroke-width="0.9" fill="none"/>
<path d="M1032.3 270.3L1035.9 274.6" stroke="#141414" stroke-width="0.9" fill="none"/>
<path d="M919.4 274.6L923 270.3" stroke="#141414" stroke-width="0.9" fill="none"/>
<path d="M1069.5 296.3L1061.8 306.1" stroke="#141414" stroke-width="0.9" fill="none"/>
<polygon points="1065.4,289.7 1057.7,299.4 1054.3,297.7 1061.9,287.9" fill="#b5b5b5" stroke="#b5b5b5" stroke-width="0.7"/>
<polygon points="1068.1,292.3 1060.5,302.1 1057.7,299.4 1065.4,289.7" fill="#9a9a9a" stroke="#9a9a9a" stroke-width="0.7"/>
<path d="M1017.6 293.5L1019.4 296.6" stroke="#141414" stroke-width="0.9" fill="none"/>
<path d="M935.9 296.6L937.7 293.5" stroke="#141414" stroke-width="0.9" fill="none"/>
<polygon points="1019.7,317.2 1019.4,320.3 1013.6,325.6 1013.9,322.9" fill="#bdbdbd" stroke="#bdbdbd" stroke-width="0.7"/>
<polygon points="935.9,320.3 935.6,317.2 941.4,322.9 941.7,325.6" fill="#727272" stroke="#727272" stroke-width="0.7"/>
<polygon points="1035.9,274.6 1038.6,279.1 1019.4,296.6 1017.6,293.5" fill="#f0f0f0" stroke="#f0f0f0" stroke-width="0.7"/>
<polygon points="916.7,279.1 919.4,274.6 937.7,293.5 935.9,296.6" fill="#939393" stroke="#939393" stroke-width="0.7"/>
<path d="M1061.9 287.9L1054.3 297.7" stroke="#141414" stroke-width="0.9" fill="none"/>
<polygon points="1067.5,336.2 1059.8,345.9 1054.2,315.8 1061.8,306.1" fill="#6a6a6a" stroke="#6a6a6a" stroke-width="0.7"/>
<path d="M1013.6 325.6L1012.6 328.3" stroke="#141414" stroke-width="0.9" fill="none"/>
<path d="M942.7 328.3L941.7 325.6" stroke="#141414" stroke-width="0.9" fill="none"/>
<polygon points="1020.5,299.8 1020.9,303.1 1019.7,317.2 1019.4,314" fill="#c9c9c9" stroke="#c9c9c9" stroke-width="0.7"/>
<polygon points="934.4,303.1 934.8,299.8 935.9,314 935.6,317.2" fill="#696969" stroke="#696969" stroke-width="0.7"/>
<path d="M1019.7 317.2L1019.4 320.3" stroke="#141414" stroke-width="0.9" fill="none"/>
<path d="M935.9 320.3L935.6 317.2" stroke="#141414" stroke-width="0.9" fill="none"/>
<path d="M893.5 309.2L901.1 299.4" stroke="#141414" stroke-width="0.9" fill="none"/>
<polygon points="1069.6,278.1 1061.9,287.9 1040.3,292.9 1040.7,287.2" fill="#7c7c7c" stroke="#7c7c7c" stroke-width="0.7"/>
<polygon points="1019.4,320.3 1018.3,323.5 1012.6,328.3 1013.6,325.6" fill="#b9b9b9" stroke="#b9b9b9" stroke-width="0.7"/>
<polygon points="937,323.5 935.9,320.3 941.7,325.6 942.7,328.3" fill="#6d6d6d" stroke="#6d6d6d" stroke-width="0.7"/>
<path d="M1019.4 296.6L1020.5 299.8" stroke="#141414" stroke-width="0.9" fill="none"/>
<path d="M934.8 299.8L935.9 296.6" stroke="#141414" stroke-width="0.9" fill="none"/>
<path d="M1035.9 274.6L1038.6 279.1" stroke="#141414" stroke-width="0.9" fill="none"/>
<path d="M916.7 279.1L919.4 274.6" stroke="#141414" stroke-width="0.9" fill="none"/>
<polygon points="894.8,305.9 902.5,296.2 905.3,295 897.6,304.8" fill="#b1b1b1" stroke="#b1b1b1" stroke-width="0.7"/>
<path d="M1012.6 328.3L1011.1 330.9" stroke="#141414" stroke-width="0.9" fill="none"/>
<path d="M944.2 330.9L942.7 328.3" stroke="#141414" stroke-width="0.9" fill="none"/>
<polygon points="1038.6,279.1 1040.2,283.8 1020.5,299.8 1019.4,296.6" fill="#ebebeb" stroke="#ebebeb" stroke-width="0.7"/>
<polygon points="915.1,283.8 916.7,279.1 935.9,296.6 934.8,299.8" fill="#8e8e8e" stroke="#8e8e8e" stroke-width="0.7"/>
<path d="M1019.4 320.3L1018.3 323.5" stroke="#141414" stroke-width="0.9" fill="none"/>
<path d="M937 323.5L935.9 320.3" stroke="#141414" stroke-width="0.9" fill="none"/>
<path d="M1059.8 345.9L1052.2 355.7" stroke="#141414" stroke-width="0.9" fill="none"/>
<path d="M872.5 355.9L880.2 346.1" stroke="#141414" stroke-width="0.9" fill="none"/>
<polygon points="1018.3,323.5 1016.5,326.5 1011.1,330.9 1012.6,328.3" fill="#b6b6b6" stroke="#b6b6b6" stroke-width="0.7"/>
<polygon points="938.8,326.5 937,323.5 942.7,328.3 944.2,330.9" fill="#686868" stroke="#686868" stroke-width="0.7"/>
<polygon points="897.6,304.8 905.3,295 908.7,295 901,304.8" fill="#bfbfbf" stroke="#bfbfbf" stroke-width="0.7"/>
<path d="M1020.5 299.8L1020.9 303.1" stroke="#141414" stroke-width="0.9" fill="none"/>
<path d="M934.4 303.1L934.8 299.8" stroke="#141414" stroke-width="0.9" fill="none"/>
<path d="M1011.1 330.9L1009 333.3" stroke="#141414" stroke-width="0.9" fill="none"/>
<path d="M946.3 333.3L944.2 330.9" stroke="#141414" stroke-width="0.9" fill="none"/>
<path d="M901 304.8L908.7 295" stroke="#141414" stroke-width="0.9" fill="none"/>
<path d="M1018.3 323.5L1016.5 326.5" stroke="#141414" stroke-width="0.9" fill="none"/>
<path d="M938.8 326.5L937 323.5" stroke="#141414" stroke-width="0.9" fill="none"/>
<path d="M1038.6 279.1L1040.2 283.8" stroke="#141414" stroke-width="0.9" fill="none"/>
<path d="M915.1 283.8L916.7 279.1" stroke="#141414" stroke-width="0.9" fill="none"/>
<polygon points="1016.5,326.5 1014.1,329.3 1009,333.3 1011.1,330.9" fill="#b1b1b1" stroke="#b1b1b1" stroke-width="0.7"/>
<polygon points="941.2,329.3 938.8,326.5 944.2,330.9 946.3,333.3" fill="#656565" stroke="#656565" stroke-width="0.7"/>
<polygon points="1040.2,283.8 1040.7,288.6 1020.9,303.1 1020.5,299.8" fill="#e4e4e4" stroke="#e4e4e4" stroke-width="0.7"/>
<polygon points="914.6,288.6 915.1,283.8 934.8,299.8 934.4,303.1" fill="#8b8b8b" stroke="#8b8b8b" stroke-width="0.7"/>
<polygon points="1061.8,306.1 1054.2,315.8 1052.8,311.9 1060.5,302.1" fill="#696969" stroke="#696969" stroke-width="0.7"/>
<path d="M1009 333.3L1006.4 335.6" stroke="#141414" stroke-width="0.9" fill="none"/>
<path d="M948.9 335.6L946.3 333.3" stroke="#141414" stroke-width="0.9" fill="none"/>
<path d="M1061.8 306.1L1054.2 315.8" stroke="#141414" stroke-width="0.9" fill="none"/>
<path d="M1020.9 303.1L1020.5 306.3" stroke="#141414" stroke-width="0.9" fill="none"/>
<path d="M934.8 306.3L934.4 303.1" stroke="#141414" stroke-width="0.9" fill="none"/>
<polygon points="1057.7,299.4 1050,309.2 1046.6,307.5 1054.3,297.7" fill="#b5b5b5" stroke="#b5b5b5" stroke-width="0.7"/>
<polygon points="1060.5,302.1 1052.8,311.9 1050,309.2 1057.7,299.4" fill="#9a9a9a" stroke="#9a9a9a" stroke-width="0.7"/>
<polygon points="1061.9,287.9 1054.3,297.7 1038.3,298.7 1040.3,292.9" fill="#696969" stroke="#696969" stroke-width="0.7"/>
<path d="M1054.3 297.7L1046.6 307.5" stroke="#141414" stroke-width="0.9" fill="none"/>
<polygon points="1014.1,329.3 1011,332 1006.4,335.6 1009,333.3" fill="#acacac" stroke="#acacac" stroke-width="0.7"/>
<polygon points="944.3,332 941.2,329.3 946.3,333.3 948.9,335.6" fill="#626262" stroke="#626262" stroke-width="0.7"/>
<path d="M1016.5 326.5L1014.1 329.3" stroke="#141414" stroke-width="0.9" fill="none"/>
<path d="M941.2 329.3L938.8 326.5" stroke="#141414" stroke-width="0.9" fill="none"/>
<polygon points="1059.8,345.9 1052.2,355.7 1046.5,325.6 1054.2,315.8" fill="#6a6a6a" stroke="#6a6a6a" stroke-width="0.7"/>
<path d="M1052.2 355.7L1050.3 357.9" stroke="#141414" stroke-width="0.9" fill="none"/>
<path d="M1006.4 335.6L1003.3 337.7" stroke="#141414" stroke-width="0.9" fill="none"/>
<path d="M952 337.7L948.9 335.6" stroke="#141414" stroke-width="0.9" fill="none"/>
<path d="M885.8 319L893.5 309.2" stroke="#141414" stroke-width="0.9" fill="none"/>
<polygon points="1040.7,288.6 1040.2,293.3 1020.5,306.3 1020.9,303.1" fill="#dcdcdc" stroke="#dcdcdc" stroke-width="0.7"/>
<polygon points="915.1,293.3 914.6,288.6 934.4,303.1 934.8,306.3" fill="#8a8a8a" stroke="#8a8a8a" stroke-width="0.7"/>
<path d="M1020.5 306.3L1019.4 309.5" stroke="#141414" stroke-width="0.9" fill="none"/>
<path d="M935.9 309.5L934.8 306.3" stroke="#141414" stroke-width="0.9" fill="none"/>
<path d="M1040.2 283.8L1040.7 288.6" stroke="#141414" stroke-width="0.9" fill="none"/>
<path d="M914.6 288.6L915.1 283.8" stroke="#141414" stroke-width="0.9" fill="none"/>
<path d="M1003.3 337.7L999.7 339.5" stroke="#141414" stroke-width="0.9" fill="none"/>
<path d="M955.6 339.5L952 337.7" stroke="#141414" stroke-width="0.9" fill="none"/>
<path d="M1050.3 357.9L1048.3 360" stroke="#141414" stroke-width="0.9" fill="none"/>
<path d="M1014.1 329.3L1011 332" stroke="#141414" stroke-width="0.9" fill="none"/>
<path d="M944.3 332L941.2 329.3" stroke="#141414" stroke-width="0.9" fill="none"/>
<polygon points="887.2,315.7 894.8,305.9 897.6,304.8 889.9,314.5" fill="#b1b1b1" stroke="#b1b1b1" stroke-width="0.7"/>
<path d="M999.7 339.5L995.8 341" stroke="#141414" stroke-width="0.9" fill="none"/>
<path d="M959.5 341L955.6 339.5" stroke="#141414" stroke-width="0.9" fill="none"/>
<path d="M864.8 365.7L872.5 355.9" stroke="#141414" stroke-width="0.9" fill="none"/>
<polygon points="889.9,314.5 897.6,304.8 901,304.8 893.4,314.6" fill="#bfbfbf" stroke="#bfbfbf" stroke-width="0.7"/>
<path d="M1048.3 360L1046.1 362.1" stroke="#141414" stroke-width="0.9" fill="none"/>
<path d="M1019.4 309.5L1017.6 312.6" stroke="#141414" stroke-width="0.9" fill="none"/>
<path d="M937.7 312.6L935.9 309.5" stroke="#141414" stroke-width="0.9" fill="none"/>
<path d="M995.8 341L991.5 342.2" stroke="#141414" stroke-width="0.9" fill="none"/>
<path d="M963.8 342.2L959.5 341" stroke="#141414" stroke-width="0.9" fill="none"/>
<path d="M1011 332L1007.4 334.3" stroke="#141414" stroke-width="0.9" fill="none"/>
<path d="M947.9 334.3L944.3 332" stroke="#141414" stroke-width="0.9" fill="none"/>
<polygon points="1040.2,293.3 1038.6,298 1019.4,309.5 1020.5,306.3" fill="#d3d3d3" stroke="#d3d3d3" stroke-width="0.7"/>
<polygon points="916.7,298 915.1,293.3 934.8,306.3 935.9,309.5" fill="#8a8a8a" stroke="#8a8a8a" stroke-width="0.7"/>
<path d="M893.4 314.6L915 284.2" stroke="#141414" stroke-width="0.9" fill="none"/>
<polygon points="1052.2,355.7 1050.3,357.9 1044.8,327.6 1046.5,325.6" fill="#6a6a6a" stroke="#6a6a6a" stroke-width="0.7"/>
<path d="M991.5 342.2L987 343.1" stroke="#141414" stroke-width="0.9" fill="none"/>
<path d="M968.3 343.1L963.8 342.2" stroke="#141414" stroke-width="0.9" fill="none"/>
<path d="M1052.2 355.7L1046.5 325.6" stroke="#141414" stroke-width="0.9" fill="none"/>
<path d="M893.4 314.6L901 304.8" stroke="#141414" stroke-width="0.9" fill="none"/>
<path d="M1046.1 362.1L1043.7 364.1" stroke="#141414" stroke-width="0.9" fill="none"/>
<path d="M1040.7 288.6L1040.2 293.3" stroke="#141414" stroke-width="0.9" fill="none"/>
<path d="M915.1 293.3L914.6 288.6" stroke="#141414" stroke-width="0.9" fill="none"/>
<polygon points="1054.3,297.7 1046.6,307.5 1034.8,304 1038.3,298.7" fill="#676767" stroke="#676767" stroke-width="0.7"/>
<path d="M987 343.1L982.4 343.6" stroke="#141414" stroke-width="0.9" fill="none"/>
<path d="M972.9 343.6L968.3 343.1" stroke="#141414" stroke-width="0.9" fill="none"/>
<polygon points="1054.2,315.8 1046.5,325.6 1045.1,321.6 1052.8,311.9" fill="#696969" stroke="#696969" stroke-width="0.7"/>
<path d="M982.4 343.6L977.6 343.8" stroke="#141414" stroke-width="0.9" fill="none"/>
<path d="M977.6 343.8L972.9 343.6" stroke="#141414" stroke-width="0.9" fill="none"/>
<path d="M1007.4 334.3L1003.3 336.4" stroke="#141414" stroke-width="0.9" fill="none"/>
<path d="M952 336.4L947.9 334.3" stroke="#141414" stroke-width="0.9" fill="none"/>
<path d="M1017.6 312.6L1015.1 315.5" stroke="#141414" stroke-width="0.9" fill="none"/>
<path d="M940.2 315.5L937.7 312.6" stroke="#141414" stroke-width="0.9" fill="none"/>
<path d="M1054.2 315.8L1046.5 325.6" stroke="#141414" stroke-width="0.9" fill="none"/>
<polygon points="1050,309.2 1042.4,319 1039,317.2 1046.6,307.5" fill="#b5b5b5" stroke="#b5b5b5" stroke-width="0.7"/>
<polygon points="1052.8,311.9 1045.1,321.6 1042.4,319 1050,309.2" fill="#9a9a9a" stroke="#9a9a9a" stroke-width="0.7"/>
<polygon points="1050.3,357.9 1048.3,360 1043,329.6 1044.8,327.6" fill="#6a6a6a" stroke="#6a6a6a" stroke-width="0.7"/>
<polygon points="885.7,324.3 893.4,314.6 915,284.2 914.6,289.9" fill="#ababab" stroke="#ababab" stroke-width="0.7"/>
<path d="M1043.7 364.1L1041.1 366" stroke="#141414" stroke-width="0.9" fill="none"/>
<path d="M1046.6 307.5L1039 317.2" stroke="#141414" stroke-width="0.9" fill="none"/>
<polygon points="1038.6,298 1035.9,302.5 1017.6,312.6 1019.4,309.5" fill="#cacaca" stroke="#cacaca" stroke-width="0.7"/>
<polygon points="919.4,302.5 916.7,298 935.9,309.5 937.7,312.6" fill="#8a8a8a" stroke="#8a8a8a" stroke-width="0.7"/>
<path d="M1003.3 336.4L998.7 338.2" stroke="#141414" stroke-width="0.9" fill="none"/>
<path d="M956.6 338.2L952 336.4" stroke="#141414" stroke-width="0.9" fill="none"/>
<polygon points="1048.3,360 1046.1,362.1 1040.9,331.5 1043,329.6" fill="#6a6a6a" stroke="#6a6a6a" stroke-width="0.7"/>
<path d="M1041.1 366L1038.4 367.9" stroke="#141414" stroke-width="0.9" fill="none"/>
<path d="M1015.1 315.5L1011.9 318.2" stroke="#141414" stroke-width="0.9" fill="none"/>
<path d="M943.4 318.2L940.2 315.5" stroke="#141414" stroke-width="0.9" fill="none"/>
<path d="M878.1 328.8L885.8 319" stroke="#141414" stroke-width="0.9" fill="none"/>
<path d="M998.7 338.2L993.7 339.6" stroke="#141414" stroke-width="0.9" fill="none"/>
<path d="M961.6 339.6L956.6 338.2" stroke="#141414" stroke-width="0.9" fill="none"/>
<path d="M1040.2 293.3L1038.6 298" stroke="#141414" stroke-width="0.9" fill="none"/>
<path d="M916.7 298L915.1 293.3" stroke="#141414" stroke-width="0.9" fill="none"/>
<polygon points="1046.1,362.1 1043.7,364.1 1038.7,333.4 1040.9,331.5" fill="#6a6a6a" stroke="#6a6a6a" stroke-width="0.7"/>
<path d="M1038.4 367.9L1035.5 369.6" stroke="#141414" stroke-width="0.9" fill="none"/>
<path d="M993.7 339.6L988.5 340.6" stroke="#141414" stroke-width="0.9" fill="none"/>
<path d="M966.8 340.6L961.6 339.6" stroke="#141414" stroke-width="0.9" fill="none"/>
<polygon points="879.5,325.5 887.2,315.7 889.9,314.5 882.3,324.3" fill="#b1b1b1" stroke="#b1b1b1" stroke-width="0.7"/>
<polygon points="1035.9,302.5 1032.3,306.8 1015.1,315.5 1017.6,312.6" fill="#c1c1c1" stroke="#c1c1c1" stroke-width="0.7"/>
<polygon points="923,306.8 919.4,302.5 937.7,312.6 940.2,315.5" fill="#8a8a8a" stroke="#8a8a8a" stroke-width="0.7"/>
<path d="M1011.9 318.2L1008.2 320.7" stroke="#141414" stroke-width="0.9" fill="none"/>
<path d="M947.1 320.7L943.4 318.2" stroke="#141414" stroke-width="0.9" fill="none"/>
<path d="M988.5 340.6L983.1 341.2" stroke="#141414" stroke-width="0.9" fill="none"/>
<path d="M972.2 341.2L966.8 340.6" stroke="#141414" stroke-width="0.9" fill="none"/>
<polygon points="1046.5,325.6 1044.8,327.6 1043.5,323.6 1045.1,321.6" fill="#6a6a6a" stroke="#6a6a6a" stroke-width="0.7"/>
<path d="M1046.5 325.6L1045.1 321.6" stroke="#141414" stroke-width="0.9" fill="none"/>
<path d="M983.1 341.2L977.6 341.5" stroke="#141414" stroke-width="0.9" fill="none"/>
<path d="M977.6 341.5L972.2 341.2" stroke="#141414" stroke-width="0.9" fill="none"/>
<path d="M1046.5 325.6L1044.8 327.6" stroke="#141414" stroke-width="0.9" fill="none"/>
<polygon points="1042.4,319 1040.8,320.9 1037.5,319.1 1039,317.2" fill="#b5b5b5" stroke="#b5b5b5" stroke-width="0.7"/>
<path d="M1035.5 369.6L1032.4 371.3" stroke="#141414" stroke-width="0.9" fill="none"/>
<path d="M857.2 375.5L864.8 365.7" stroke="#141414" stroke-width="0.9" fill="none"/>
<polygon points="1045.1,321.6 1043.5,323.6 1040.8,320.9 1042.4,319" fill="#9b9b9b" stroke="#9b9b9b" stroke-width="0.7"/>
<polygon points="1043.7,364.1 1041.1,366 1036.3,335.2 1038.7,333.4" fill="#6a6a6a" stroke="#6a6a6a" stroke-width="0.7"/>
<polygon points="882.3,324.3 889.9,314.5 893.4,314.6 885.7,324.3" fill="#bfbfbf" stroke="#bfbfbf" stroke-width="0.7"/>
<path d="M1042.4 319L1039 317.2" stroke="#141414" stroke-width="0.9" fill="none"/>
<polygon points="1046.6,307.5 1039,317.2 1030.4,308.5 1034.8,304" fill="#676767" stroke="#676767" stroke-width="0.7"/>
<path d="M1045.1 321.6L1042.4 319" stroke="#141414" stroke-width="0.9" fill="none"/>
<path d="M1039 317.2L1037.5 319.1" stroke="#141414" stroke-width="0.9" fill="none"/>
<polygon points="1044.8,327.6 1043,329.6 1041.6,325.5 1043.5,323.6" fill="#6b6b6b" stroke="#6b6b6b" stroke-width="0.7"/>
<path d="M1008.2 320.7L1004 322.9" stroke="#141414" stroke-width="0.9" fill="none"/>
<path d="M951.3 322.9L947.1 320.7" stroke="#141414" stroke-width="0.9" fill="none"/>
<path d="M1032.4 371.3L1029.2 372.9" stroke="#141414" stroke-width="0.9" fill="none"/>
<polygon points="1040.8,320.9 1039,322.8 1035.8,320.8 1037.5,319.1" fill="#b6b6b6" stroke="#b6b6b6" stroke-width="0.7"/>
<path d="M1044.8 327.6L1043 329.6" stroke="#141414" stroke-width="0.9" fill="none"/>
<polygon points="878,334.1 885.7,324.3 914.6,289.9 915.6,295.2" fill="#b4b4b4" stroke="#b4b4b4" stroke-width="0.7"/>
<polygon points="1041.1,366 1038.4,367.9 1033.8,336.9 1036.3,335.2" fill="#6a6a6a" stroke="#6a6a6a" stroke-width="0.7"/>
<polygon points="1043.5,323.6 1041.6,325.5 1039,322.8 1040.8,320.9" fill="#9d9d9d" stroke="#9d9d9d" stroke-width="0.7"/>
<path d="M1038.6 298L1035.9 302.5" stroke="#141414" stroke-width="0.9" fill="none"/>
<path d="M919.4 302.5L916.7 298" stroke="#141414" stroke-width="0.9" fill="none"/>
<path d="M885.7 324.3L893.4 314.6" stroke="#141414" stroke-width="0.9" fill="none"/>
<polygon points="1032.3,306.8 1027.7,310.7 1011.9,318.2 1015.1,315.5" fill="#b8b8b8" stroke="#b8b8b8" stroke-width="0.7"/>
<polygon points="927.6,310.7 923,306.8 940.2,315.5 943.4,318.2" fill="#8a8a8a" stroke="#8a8a8a" stroke-width="0.7"/>
<path d="M1037.5 319.1L1035.8 320.8" stroke="#141414" stroke-width="0.9" fill="none"/>
<path d="M1029.2 372.9L1025.9 374.4" stroke="#141414" stroke-width="0.9" fill="none"/>
<polygon points="1043,329.6 1040.9,331.5 1039.6,327.4 1041.6,325.5" fill="#6c6c6c" stroke="#6c6c6c" stroke-width="0.7"/>
<path d="M1004 322.9L999.3 324.7" stroke="#141414" stroke-width="0.9" fill="none"/>
<path d="M956 324.7L951.3 322.9" stroke="#141414" stroke-width="0.9" fill="none"/>
<polygon points="1039,322.8 1037.1,324.5 1034,322.5 1035.8,320.8" fill="#b7b7b7" stroke="#b7b7b7" stroke-width="0.7"/>
<polygon points="1038.4,367.9 1035.5,369.6 1031.1,338.5 1033.8,336.9" fill="#6a6a6a" stroke="#6a6a6a" stroke-width="0.7"/>
<path d="M1043 329.6L1040.9 331.5" stroke="#141414" stroke-width="0.9" fill="none"/>
<polygon points="1041.6,325.5 1039.6,327.4 1037.1,324.5 1039,322.8" fill="#9f9f9f" stroke="#9f9f9f" stroke-width="0.7"/>
<path d="M1035.8 320.8L1034 322.5" stroke="#141414" stroke-width="0.9" fill="none"/>
<path d="M1025.9 374.4L1022.4 375.8" stroke="#141414" stroke-width="0.9" fill="none"/>
<polygon points="1039,317.2 1037.5,319.1 1029.3,309.5 1030.4,308.5" fill="#686868" stroke="#686868" stroke-width="0.7"/>
<path d="M999.3 324.7L994.2 326.1" stroke="#141414" stroke-width="0.9" fill="none"/>
<path d="M961.1 326.1L956 324.7" stroke="#141414" stroke-width="0.9" fill="none"/>
<polygon points="1040.9,331.5 1038.7,333.4 1037.5,329.2 1039.6,327.4" fill="#6d6d6d" stroke="#6d6d6d" stroke-width="0.7"/>
<polygon points="1037.1,324.5 1035,326.3 1032,324.2 1034,322.5" fill="#b8b8b8" stroke="#b8b8b8" stroke-width="0.7"/>
<path d="M1039 317.2L1030.4 308.5" stroke="#141414" stroke-width="0.9" fill="none"/>
<polygon points="1035.5,369.6 1032.4,371.3 1028.3,340 1031.1,338.5" fill="#6a6a6a" stroke="#6a6a6a" stroke-width="0.7"/>
<polygon points="1027.7,310.7 1022.3,314.3 1008.2,320.7 1011.9,318.2" fill="#afafaf" stroke="#afafaf" stroke-width="0.7"/>
<polygon points="933,314.3 927.6,310.7 943.4,318.2 947.1,320.7" fill="#8a8a8a" stroke="#8a8a8a" stroke-width="0.7"/>
<polygon points="1039.6,327.4 1037.5,329.2 1035,326.3 1037.1,324.5" fill="#a2a2a2" stroke="#a2a2a2" stroke-width="0.7"/>
<path d="M1040.9 331.5L1038.7 333.4" stroke="#141414" stroke-width="0.9" fill="none"/>
<path d="M1022.4 375.8L1018.8 377" stroke="#141414" stroke-width="0.9" fill="none"/>
<polygon points="1037.5,319.1 1035.8,320.8 1028.2,310.3 1029.3,309.5" fill="#696969" stroke="#696969" stroke-width="0.7"/>
<path d="M1034 322.5L1032 324.2" stroke="#141414" stroke-width="0.9" fill="none"/>
<path d="M994.2 326.1L988.8 327.2" stroke="#141414" stroke-width="0.9" fill="none"/>
<path d="M966.5 327.2L961.1 326.1" stroke="#141414" stroke-width="0.9" fill="none"/>
<path d="M1035.9 302.5L1032.3 306.8" stroke="#141414" stroke-width="0.9" fill="none"/>
<path d="M923 306.8L919.4 302.5" stroke="#141414" stroke-width="0.9" fill="none"/>
<path d="M854.9 379.2L857.2 375.5" stroke="#141414" stroke-width="0.9" fill="none"/>
<polygon points="1038.7,333.4 1036.3,335.2 1035.1,331 1037.5,329.2" fill="#6e6e6e" stroke="#6e6e6e" stroke-width="0.7"/>
<path d="M870.5 338.5L878.1 328.8" stroke="#141414" stroke-width="0.9" fill="none"/>
<polygon points="1032.4,371.3 1029.2,372.9 1025.3,341.5 1028.3,340" fill="#6a6a6a" stroke="#6a6a6a" stroke-width="0.7"/>
<polygon points="1035,326.3 1032.8,328 1029.9,325.7 1032,324.2" fill="#b9b9b9" stroke="#b9b9b9" stroke-width="0.7"/>
<path d="M988.8 327.2L983.3 327.8" stroke="#141414" stroke-width="0.9" fill="none"/>
<path d="M972 327.8L966.5 327.2" stroke="#141414" stroke-width="0.9" fill="none"/>
<path d="M1018.8 377L1015.1 378.2" stroke="#141414" stroke-width="0.9" fill="none"/>
<polygon points="1035.8,320.8 1034,322.5 1027.1,311.2 1028.2,310.3" fill="#6a6a6a" stroke="#6a6a6a" stroke-width="0.7"/>
<polygon points="1037.5,329.2 1035.1,331 1032.8,328 1035,326.3" fill="#a4a4a4" stroke="#a4a4a4" stroke-width="0.7"/>
<path d="M1038.7 333.4L1036.3 335.2" stroke="#141414" stroke-width="0.9" fill="none"/>
<path d="M983.3 327.8L977.6 328" stroke="#141414" stroke-width="0.9" fill="none"/>
<path d="M977.6 328L972 327.8" stroke="#141414" stroke-width="0.9" fill="none"/>
<path d="M1032 324.2L1029.9 325.7" stroke="#141414" stroke-width="0.9" fill="none"/>
<path d="M1015.1 378.2L1011.3 379.3" stroke="#141414" stroke-width="0.9" fill="none"/>
<polygon points="1029.2,372.9 1025.9,374.4 1022.2,342.9 1025.3,341.5" fill="#6a6a6a" stroke="#6a6a6a" stroke-width="0.7"/>
<polygon points="1022.3,314.3 1016.1,317.4 1004,322.9 1008.2,320.7" fill="#a7a7a7" stroke="#a7a7a7" stroke-width="0.7"/>
<polygon points="939.2,317.4 933,314.3 947.1,320.7 951.3,322.9" fill="#8a8a8a" stroke="#8a8a8a" stroke-width="0.7"/>
<polygon points="1034,322.5 1032,324.2 1025.9,312 1027.1,311.2" fill="#6b6b6b" stroke="#6b6b6b" stroke-width="0.7"/>
<polygon points="1032.8,328 1030.4,329.6 1027.6,327.3 1029.9,325.7" fill="#bababa" stroke="#bababa" stroke-width="0.7"/>
<polygon points="1036.3,335.2 1033.8,336.9 1032.7,332.6 1035.1,331" fill="#6f6f6f" stroke="#6f6f6f" stroke-width="0.7"/>
<polygon points="871.9,335.3 879.5,325.5 882.3,324.3 874.6,334.1" fill="#b1b1b1" stroke="#b1b1b1" stroke-width="0.7"/>
<polygon points="1035.1,331 1032.7,332.6 1030.4,329.6 1032.8,328" fill="#a6a6a6" stroke="#a6a6a6" stroke-width="0.7"/>
<path d="M1036.3 335.2L1033.8 336.9" stroke="#141414" stroke-width="0.9" fill="none"/>
<polygon points="870.4,343.9 878,334.1 915.6,295.2 917.7,299.9" fill="#b9b9b9" stroke="#b9b9b9" stroke-width="0.7"/>
<path d="M1029.9 325.7L1027.6 327.3" stroke="#141414" stroke-width="0.9" fill="none"/>
<polygon points="1032,324.2 1029.9,325.7 1024.7,312.8 1025.9,312" fill="#6c6c6c" stroke="#6c6c6c" stroke-width="0.7"/>
<polygon points="1025.9,374.4 1022.4,375.8 1019,344.2 1022.2,342.9" fill="#6a6a6a" stroke="#6a6a6a" stroke-width="0.7"/>
<polygon points="1030.4,329.6 1027.9,331.1 1025.2,328.7 1027.6,327.3" fill="#bbbbbb" stroke="#bbbbbb" stroke-width="0.7"/>
<polygon points="874.6,334.1 882.3,324.3 885.7,324.3 878,334.1" fill="#bfbfbf" stroke="#bfbfbf" stroke-width="0.7"/>
<polygon points="1033.8,336.9 1031.1,338.5 1030,334.2 1032.7,332.6" fill="#727272" stroke="#727272" stroke-width="0.7"/>
<path d="M1032.3 306.8L1027.7 310.7" stroke="#141414" stroke-width="0.9" fill="none"/>
<path d="M927.6 310.7L923 306.8" stroke="#141414" stroke-width="0.9" fill="none"/>
<path d="M853.8 383.1L854.9 379.2" stroke="#141414" stroke-width="0.9" fill="none"/>
<polygon points="1032.7,332.6 1030,334.2 1027.9,331.1 1030.4,329.6" fill="#a9a9a9" stroke="#a9a9a9" stroke-width="0.7"/>
<path d="M1027.6 327.3L1025.2 328.7" stroke="#141414" stroke-width="0.9" fill="none"/>
<polygon points="1029.9,325.7 1027.6,327.3 1023.5,313.6 1024.7,312.8" fill="#6d6d6d" stroke="#6d6d6d" stroke-width="0.7"/>
<path d="M1033.8 336.9L1031.1 338.5" stroke="#141414" stroke-width="0.9" fill="none"/>
<path d="M1011.3 379.3L994.4 383.7" stroke="#141414" stroke-width="0.9" fill="none"/>
<polygon points="1022.4,375.8 1018.8,377 1015.7,345.3 1019,344.2" fill="#6a6a6a" stroke="#6a6a6a" stroke-width="0.7"/>
<polygon points="1027.9,331.1 1025.2,332.6 1022.7,330.1 1025.2,328.7" fill="#bcbcbc" stroke="#bcbcbc" stroke-width="0.7"/>
<polygon points="1031.1,338.5 1028.3,340 1027.3,335.8 1030,334.2" fill="#757575" stroke="#757575" stroke-width="0.7"/>
<polygon points="1027.6,327.3 1025.2,328.7 1022.3,314.3 1023.5,313.6" fill="#6e6e6e" stroke="#6e6e6e" stroke-width="0.7"/>
<path d="M878 334.1L885.7 324.3" stroke="#141414" stroke-width="0.9" fill="none"/>
<polygon points="1030,334.2 1027.3,335.8 1025.2,332.6 1027.9,331.1" fill="#ababab" stroke="#ababab" stroke-width="0.7"/>
<polygon points="1018.8,377 1015.1,378.2 1012.3,346.4 1015.7,345.3" fill="#6a6a6a" stroke="#6a6a6a" stroke-width="0.7"/>
<path d="M1025.2 328.7L1022.7 330.1" stroke="#141414" stroke-width="0.9" fill="none"/>
<path d="M1031.1 338.5L1028.3 340" stroke="#141414" stroke-width="0.9" fill="none"/>
<polygon points="1025.2,332.6 1022.4,333.9 1020.1,331.4 1022.7,330.1" fill="#bdbdbd" stroke="#bdbdbd" stroke-width="0.7"/>
<polygon points="1025.2,328.7 1022.7,330.1 1021,315 1022.3,314.3" fill="#6f6f6f" stroke="#6f6f6f" stroke-width="0.7"/>
<polygon points="1028.3,340 1025.3,341.5 1024.4,337.2 1027.3,335.8" fill="#797979" stroke="#797979" stroke-width="0.7"/>
<polygon points="1015.1,378.2 1011.3,379.3 1008.8,347.4 1012.3,346.4" fill="#6d6d6d" stroke="#6d6d6d" stroke-width="0.7"/>
<path d="M1022.7 330.1L1020.1 331.4" stroke="#141414" stroke-width="0.9" fill="none"/>
<polygon points="1027.3,335.8 1024.4,337.2 1022.4,333.9 1025.2,332.6" fill="#adadad" stroke="#adadad" stroke-width="0.7"/>
<path d="M857.2 375.5L862.8 348.3" stroke="#141414" stroke-width="0.9" fill="none"/>
<polygon points="868.9,346.3 870.4,343.9 917.7,299.9 918.7,301.6" fill="#c5c5c5" stroke="#c5c5c5" stroke-width="0.7"/>
<path d="M1028.3 340L1025.3 341.5" stroke="#141414" stroke-width="0.9" fill="none"/>
<polygon points="1022.7,330.1 1020.1,331.4 1019.7,315.7 1021,315" fill="#727272" stroke="#727272" stroke-width="0.7"/>
<polygon points="1022.4,333.9 1019.5,335.2 1017.3,332.6 1020.1,331.4" fill="#bebebe" stroke="#bebebe" stroke-width="0.7"/>
<path d="M870.4 343.9L917.7 299.9" stroke="#141414" stroke-width="0.9" fill="none"/>
<path d="M1027.7 310.7L1022.3 314.3" stroke="#141414" stroke-width="0.9" fill="none"/>
<path d="M933 314.3L927.6 310.7" stroke="#141414" stroke-width="0.9" fill="none"/>
<path d="M853.8 387.1L853.8 383.1" stroke="#141414" stroke-width="0.9" fill="none"/>
<polygon points="1025.3,341.5 1022.2,342.9 1021.3,338.5 1024.4,337.2" fill="#7c7c7c" stroke="#7c7c7c" stroke-width="0.7"/>
<path d="M1020.1 331.4L1017.3 332.6" stroke="#141414" stroke-width="0.9" fill="none"/>
<polygon points="1024.4,337.2 1021.3,338.5 1019.5,335.2 1022.4,333.9" fill="#afafaf" stroke="#afafaf" stroke-width="0.7"/>
<polygon points="1020.1,331.4 1017.3,332.6 1018.3,316.4 1019.7,315.7" fill="#767676" stroke="#767676" stroke-width="0.7"/>
<path d="M1011.3 379.3L1008.8 347.4" stroke="#141414" stroke-width="0.9" fill="none"/>
<polygon points="1019.5,335.2 1016.5,336.4 1014.5,333.8 1017.3,332.6" fill="#bfbfbf" stroke="#bfbfbf" stroke-width="0.7"/>
<path d="M994.4 383.7L977.5 388.1" stroke="#141414" stroke-width="0.9" fill="none"/>
<path d="M1025.3 341.5L1022.2 342.9" stroke="#141414" stroke-width="0.9" fill="none"/>
<polygon points="1022.2,342.9 1019,344.2 1018.2,339.8 1021.3,338.5" fill="#808080" stroke="#808080" stroke-width="0.7"/>
<polygon points="1017.3,332.6 1014.5,333.8 1016.9,317.1 1018.3,316.4" fill="#7b7b7b" stroke="#7b7b7b" stroke-width="0.7"/>
<polygon points="1011.3,379.3 994.4,383.7 991.9,351.8 1008.8,347.4" fill="#6f6f6f" stroke="#6f6f6f" stroke-width="0.7"/>
<path d="M1017.3 332.6L1014.5 333.8" stroke="#141414" stroke-width="0.9" fill="none"/>
<polygon points="868.2,348.7 868.9,346.3 918.7,301.6 920.1,303.5" fill="#cdcdcd" stroke="#cdcdcd" stroke-width="0.7"/>
<polygon points="1021.3,338.5 1018.2,339.8 1016.5,336.4 1019.5,335.2" fill="#b2b2b2" stroke="#b2b2b2" stroke-width="0.7"/>
<polygon points="1016.5,336.4 1013.4,337.5 1011.5,334.8 1014.5,333.8" fill="#c0c0c0" stroke="#c0c0c0" stroke-width="0.7"/>
<path d="M862.8 348.3L870.5 338.5" stroke="#141414" stroke-width="0.9" fill="none"/>
<path d="M1022.2 342.9L1019 344.2" stroke="#141414" stroke-width="0.9" fill="none"/>
<polygon points="1014.5,333.8 1011.5,334.8 1015.4,317.7 1016.9,317.1" fill="#808080" stroke="#808080" stroke-width="0.7"/>
<path d="M1014.5 333.8L1011.5 334.8" stroke="#141414" stroke-width="0.9" fill="none"/>
<polygon points="1019,344.2 1015.7,345.3 1015,341 1018.2,339.8" fill="#838383" stroke="#838383" stroke-width="0.7"/>
<polygon points="1018.2,339.8 1015,341 1013.4,337.5 1016.5,336.4" fill="#b4b4b4" stroke="#b4b4b4" stroke-width="0.7"/>
<polygon points="1013.4,337.5 1010.2,338.5 1008.5,335.8 1011.5,334.8" fill="#c1c1c1" stroke="#c1c1c1" stroke-width="0.7"/>
<polygon points="1011.5,334.8 1008.5,335.8 1013.9,318.4 1015.4,317.7" fill="#858585" stroke="#858585" stroke-width="0.7"/>
<path d="M1022.3 314.3L1016.1 317.4" stroke="#141414" stroke-width="0.9" fill="none"/>
<path d="M939.2 317.4L933 314.3" stroke="#141414" stroke-width="0.9" fill="none"/>
<path d="M1019 344.2L1015.7 345.3" stroke="#141414" stroke-width="0.9" fill="none"/>
<path d="M1011.5 334.8L1008.5 335.8" stroke="#141414" stroke-width="0.9" fill="none"/>
<polygon points="868.3,351.3 868.2,348.7 920.1,303.5 921.9,305.6" fill="#d1d1d1" stroke="#d1d1d1" stroke-width="0.7"/>
<polygon points="1015.7,345.3 1012.3,346.4 1011.6,342 1015,341" fill="#868686" stroke="#868686" stroke-width="0.7"/>
<polygon points="864.2,345 871.9,335.3 874.6,334.1 867,343.9" fill="#b1b1b1" stroke="#b1b1b1" stroke-width="0.7"/>
<polygon points="1010.2,338.5 1006.9,339.5 1005.4,336.6 1008.5,335.8" fill="#c2c2c2" stroke="#c2c2c2" stroke-width="0.7"/>
<polygon points="1008.5,335.8 1005.4,336.6 1012.3,319 1013.9,318.4" fill="#8a8a8a" stroke="#8a8a8a" stroke-width="0.7"/>
<path d="M855.1 391L853.8 387.1" stroke="#141414" stroke-width="0.9" fill="none"/>
<polygon points="1015,341 1011.6,342 1010.2,338.5 1013.4,337.5" fill="#b6b6b6" stroke="#b6b6b6" stroke-width="0.7"/>
<path d="M1008.5 335.8L1005.4 336.6" stroke="#141414" stroke-width="0.9" fill="none"/>
<path d="M1015.7 345.3L1012.3 346.4" stroke="#141414" stroke-width="0.9" fill="none"/>
<polygon points="1012.3,346.4 1008.8,347.4 1008.2,343 1011.6,342" fill="#8a8a8a" stroke="#8a8a8a" stroke-width="0.7"/>
<polygon points="1011.6,342 1008.2,343 1006.9,339.5 1010.2,338.5" fill="#b8b8b8" stroke="#b8b8b8" stroke-width="0.7"/>
<path d="M977.5 388.1L960.5 392.5" stroke="#141414" stroke-width="0.9" fill="none"/>
<polygon points="867,343.9 874.6,334.1 878,334.1 870.4,343.9" fill="#bfbfbf" stroke="#bfbfbf" stroke-width="0.7"/>
<path d="M1012.3 346.4L1008.8 347.4" stroke="#141414" stroke-width="0.9" fill="none"/>
<path d="M1005.4 336.6L1012.3 319" stroke="#141414" stroke-width="0.9" fill="none"/>
<path d="M1006.9 339.5L1005.4 336.6" stroke="#141414" stroke-width="0.9" fill="none"/>
<polygon points="994.4,383.7 977.5,388.1 974.9,356.2 991.9,351.8" fill="#6f6f6f" stroke="#6f6f6f" stroke-width="0.7"/>
<polygon points="1005.4,336.6 988.4,341.1 1004.3,321.6 1012.3,319" fill="#8c8c8c" stroke="#8c8c8c" stroke-width="0.7"/>
<polygon points="869,353.7 868.3,351.3 921.9,305.6 924.1,307.8" fill="#d2d2d2" stroke="#d2d2d2" stroke-width="0.7"/>
<path d="M1016.1 317.4L1009.2 320.1" stroke="#141414" stroke-width="0.9" fill="none"/>
<path d="M946.1 320.1L939.2 317.4" stroke="#141414" stroke-width="0.9" fill="none"/>
<path d="M853.8 383.1L859.9 354.8" stroke="#141414" stroke-width="0.9" fill="none"/>
<polygon points="1006.9,339.5 990,343.9 988.4,341.1 1005.4,336.6" fill="#c3c3c3" stroke="#c3c3c3" stroke-width="0.7"/>
<path d="M1008.8 347.4L1008.2 343" stroke="#141414" stroke-width="0.9" fill="none"/>
<polygon points="853.8,387.1 853.8,383.1 859.9,354.8 860,358.1" fill="#9d9d9d" stroke="#9d9d9d" stroke-width="0.7"/>
<path d="M1008.2 343L1006.9 339.5" stroke="#141414" stroke-width="0.9" fill="none"/>
<path d="M1005.4 336.6L988.4 341.1" stroke="#141414" stroke-width="0.9" fill="none"/>
<path d="M870.4 343.9L878 334.1" stroke="#141414" stroke-width="0.9" fill="none"/>
<polygon points="1008.8,347.4 991.9,351.8 991.2,347.4 1008.2,343" fill="#8b8b8b" stroke="#8b8b8b" stroke-width="0.7"/>
<polygon points="1008.2,343 991.2,347.4 990,343.9 1006.9,339.5" fill="#b9b9b9" stroke="#b9b9b9" stroke-width="0.7"/>
<path d="M857.4 394.7L855.1 391" stroke="#141414" stroke-width="0.9" fill="none"/>
<path d="M862.8 348.3L864.2 345" stroke="#141414" stroke-width="0.9" fill="none"/>
<path d="M1008.8 347.4L991.9 351.8" stroke="#141414" stroke-width="0.9" fill="none"/>
<polygon points="870.5,356.1 869,353.7 924.1,307.8 926.7,310" fill="#d3d3d3" stroke="#d3d3d3" stroke-width="0.7"/>
<path d="M1009.2 320.1L1001.8 322.2" stroke="#141414" stroke-width="0.9" fill="none"/>
<path d="M953.5 322.2L946.1 320.1" stroke="#141414" stroke-width="0.9" fill="none"/>
<path d="M869 353.7L924.1 307.8" stroke="#141414" stroke-width="0.9" fill="none"/>
<path d="M860.9 351.5L862.8 348.3" stroke="#141414" stroke-width="0.9" fill="none"/>
<polygon points="988.4,341.1 971.5,345.5 995.1,323.5 1004.3,321.6" fill="#868686" stroke="#868686" stroke-width="0.7"/>
<path d="M960.5 392.5L943.6 397" stroke="#141414" stroke-width="0.9" fill="none"/>
<path d="M864.2 345L867 343.9" stroke="#141414" stroke-width="0.9" fill="none"/>
<polygon points="862.4,348.1 864.2,345 867,343.9 865.3,346.6" fill="#b5b5b5" stroke="#b5b5b5" stroke-width="0.7"/>
<polygon points="855.1,391 853.8,387.1 860,358.1 861,361.4" fill="#a2a2a2" stroke="#a2a2a2" stroke-width="0.7"/>
<path d="M1001.8 322.2L994 323.7" stroke="#141414" stroke-width="0.9" fill="none"/>
<path d="M961.3 323.7L953.5 322.2" stroke="#141414" stroke-width="0.9" fill="none"/>
<polygon points="977.5,388.1 960.5,392.5 958,360.7 974.9,356.2" fill="#6f6f6f" stroke="#6f6f6f" stroke-width="0.7"/>
<polygon points="872.7,358.3 870.5,356.1 926.7,310 929.7,312.2" fill="#d4d4d4" stroke="#d4d4d4" stroke-width="0.7"/>
<polygon points="990,343.9 973.1,348.3 971.5,345.5 988.4,341.1" fill="#c3c3c3" stroke="#c3c3c3" stroke-width="0.7"/>
<path d="M860.9 398.1L857.4 394.7" stroke="#141414" stroke-width="0.9" fill="none"/>
<polygon points="859.9,354.8 860.9,351.5 862.4,348.1 861.5,351.2" fill="#9d9d9d" stroke="#9d9d9d" stroke-width="0.7"/>
<polygon points="865.3,346.6 867,343.9 870.4,343.9 868.9,346.3" fill="#c1c1c1" stroke="#c1c1c1" stroke-width="0.7"/>
<path d="M860.9 351.5L862.4 348.1" stroke="#141414" stroke-width="0.9" fill="none"/>
<path d="M867 343.9L870.4 343.9" stroke="#141414" stroke-width="0.9" fill="none"/>
<path d="M994 323.7L985.9 324.7" stroke="#141414" stroke-width="0.9" fill="none"/>
<path d="M969.4 324.7L961.3 323.7" stroke="#141414" stroke-width="0.9" fill="none"/>
<path d="M988.4 341.1L971.5 345.5" stroke="#141414" stroke-width="0.9" fill="none"/>
<path d="M859.9 354.8L860.9 351.5" stroke="#141414" stroke-width="0.9" fill="none"/>
<polygon points="991.9,351.8 974.9,356.2 974.3,351.8 991.2,347.4" fill="#8b8b8b" stroke="#8b8b8b" stroke-width="0.7"/>
<polygon points="991.2,347.4 974.3,351.8 973.1,348.3 990,343.9" fill="#b9b9b9" stroke="#b9b9b9" stroke-width="0.7"/>
<path d="M985.9 324.7L977.6 325" stroke="#141414" stroke-width="0.9" fill="none"/>
<path d="M977.6 325L969.4 324.7" stroke="#141414" stroke-width="0.9" fill="none"/>
<polygon points="971.5,345.5 954.6,349.9 985.2,324.7 995.1,323.5" fill="#8b8b8b" stroke="#8b8b8b" stroke-width="0.7"/>
<polygon points="875.5,360.2 872.7,358.3 929.7,312.2 933,314.3" fill="#d4d4d4" stroke="#d4d4d4" stroke-width="0.7"/>
<path d="M991.9 351.8L974.9 356.2" stroke="#141414" stroke-width="0.9" fill="none"/>
<polygon points="861.5,351.2 862.4,348.1 865.3,346.6 864.5,349.4" fill="#bcbcbc" stroke="#bcbcbc" stroke-width="0.7"/>
<path d="M868.9 346.3L870.4 343.9" stroke="#141414" stroke-width="0.9" fill="none"/>
<polygon points="857.4,394.7 855.1,391 861,361.4 863,364.5" fill="#a5a5a5" stroke="#a5a5a5" stroke-width="0.7"/>
<polygon points="864.5,349.4 865.3,346.6 868.9,346.3 868.2,348.7" fill="#c4c4c4" stroke="#c4c4c4" stroke-width="0.7"/>
<path d="M943.6 397L926.7 401.4" stroke="#141414" stroke-width="0.9" fill="none"/>
<path d="M865.3 401.1L860.9 398.1" stroke="#141414" stroke-width="0.9" fill="none"/>
<polygon points="878.9,361.8 875.5,360.2 933,314.3 936.7,316.2" fill="#d4d4d4" stroke="#d4d4d4" stroke-width="0.7"/>
<polygon points="860,358.1 859.9,354.8 861.5,351.2 861.5,354.4" fill="#a1a1a1" stroke="#a1a1a1" stroke-width="0.7"/>
<polygon points="960.5,392.5 943.6,397 941.1,365.1 958,360.7" fill="#6f6f6f" stroke="#6f6f6f" stroke-width="0.7"/>
<polygon points="954.6,349.9 937.6,354.3 975.3,325 985.2,324.7" fill="#999999" stroke="#999999" stroke-width="0.7"/>
<path d="M860 358.1L859.9 354.8" stroke="#141414" stroke-width="0.9" fill="none"/>
<polygon points="973.1,348.3 956.1,352.7 954.6,349.9 971.5,345.5" fill="#c3c3c3" stroke="#c3c3c3" stroke-width="0.7"/>
<path d="M868.2 348.7L868.9 346.3" stroke="#141414" stroke-width="0.9" fill="none"/>
<path d="M971.5 345.5L954.6 349.9" stroke="#141414" stroke-width="0.9" fill="none"/>
<polygon points="861.5,354.4 861.5,351.2 864.5,349.4 864.5,352.3" fill="#c2c2c2" stroke="#c2c2c2" stroke-width="0.7"/>
<polygon points="882.6,363.1 878.9,361.8 936.7,316.2 940.5,318" fill="#d5d5d5" stroke="#d5d5d5" stroke-width="0.7"/>
<polygon points="974.9,356.2 958,360.7 957.4,356.2 974.3,351.8" fill="#8b8b8b" stroke="#8b8b8b" stroke-width="0.7"/>
<polygon points="974.3,351.8 957.4,356.2 956.1,352.7 973.1,348.3" fill="#b9b9b9" stroke="#b9b9b9" stroke-width="0.7"/>
<polygon points="864.5,352.3 864.5,349.4 868.2,348.7 868.3,351.3" fill="#c7c7c7" stroke="#c7c7c7" stroke-width="0.7"/>
<polygon points="937.6,354.3 920.7,358.7 966.1,324.4 975.3,325" fill="#ababab" stroke="#ababab" stroke-width="0.7"/>
<polygon points="860.9,398.1 857.4,394.7 863,364.5 865.9,367.4" fill="#aeaeae" stroke="#aeaeae" stroke-width="0.7"/>
<path d="M974.9 356.2L958 360.7" stroke="#141414" stroke-width="0.9" fill="none"/>
<path d="M870.5 403.7L865.3 401.1" stroke="#141414" stroke-width="0.9" fill="none"/>
<polygon points="886.7,363.9 882.6,363.1 940.5,318 944.3,319.5" fill="#d5d5d5" stroke="#d5d5d5" stroke-width="0.7"/>
<polygon points="861,361.4 860,358.1 861.5,354.4 862.5,357.5" fill="#a3a3a3" stroke="#a3a3a3" stroke-width="0.7"/>
<path d="M868.3 351.3L868.2 348.7" stroke="#141414" stroke-width="0.9" fill="none"/>
<path d="M861 361.4L860 358.1" stroke="#141414" stroke-width="0.9" fill="none"/>
<path d="M926.7 401.4L909.7 405.8" stroke="#141414" stroke-width="0.9" fill="none"/>
<polygon points="891,364.4 886.7,363.9 944.3,319.5 948.1,320.7" fill="#d5d5d5" stroke="#d5d5d5" stroke-width="0.7"/>
<polygon points="920.7,358.7 903.8,363.2 958.1,323.2 966.1,324.4" fill="#b9b9b9" stroke="#b9b9b9" stroke-width="0.7"/>
<polygon points="862.5,357.5 861.5,354.4 864.5,352.3 865.4,355.2" fill="#c8c8c8" stroke="#c8c8c8" stroke-width="0.7"/>
<polygon points="943.6,397 926.7,401.4 924.1,369.5 941.1,365.1" fill="#6f6f6f" stroke="#6f6f6f" stroke-width="0.7"/>
<polygon points="895.4,364.4 891,364.4 948.1,320.7 951.7,321.8" fill="#d4d4d4" stroke="#d4d4d4" stroke-width="0.7"/>
<polygon points="865.4,355.2 864.5,352.3 868.3,351.3 869,353.7" fill="#c9c9c9" stroke="#c9c9c9" stroke-width="0.7"/>
<path d="M886.7 363.9L944.3 319.5" stroke="#141414" stroke-width="0.9" fill="none"/>
<path d="M876.5 405.7L870.5 403.7" stroke="#141414" stroke-width="0.9" fill="none"/>
<polygon points="899.7,364 895.4,364.4 951.7,321.8 955.1,322.6" fill="#d2d2d2" stroke="#d2d2d2" stroke-width="0.7"/>
<polygon points="903.8,363.2 899.7,364 955.1,322.6 958.1,323.2" fill="#cacaca" stroke="#cacaca" stroke-width="0.7"/>
<polygon points="956.1,352.7 939.2,357.2 937.6,354.3 954.6,349.9" fill="#c3c3c3" stroke="#c3c3c3" stroke-width="0.7"/>
<polygon points="865.3,401.1 860.9,398.1 865.9,367.4 869.7,370" fill="#b4b4b4" stroke="#b4b4b4" stroke-width="0.7"/>
<path d="M954.6 349.9L937.6 354.3" stroke="#141414" stroke-width="0.9" fill="none"/>
<polygon points="958,360.7 941.1,365.1 940.4,360.7 957.4,356.2" fill="#8b8b8b" stroke="#8b8b8b" stroke-width="0.7"/>
<path d="M869 353.7L868.3 351.3" stroke="#141414" stroke-width="0.9" fill="none"/>
<polygon points="957.4,356.2 940.4,360.7 939.2,357.2 956.1,352.7" fill="#b9b9b9" stroke="#b9b9b9" stroke-width="0.7"/>
<path d="M903.8 363.2L958.1 323.2" stroke="#141414" stroke-width="0.9" fill="none"/>
<polygon points="863,364.5 861,361.4 862.5,357.5 864.4,360.5" fill="#a9a9a9" stroke="#a9a9a9" stroke-width="0.7"/>
<path d="M882.9 407L876.5 405.7" stroke="#141414" stroke-width="0.9" fill="none"/>
<path d="M909.7 405.8L903.3 407.1" stroke="#141414" stroke-width="0.9" fill="none"/>
<path d="M958 360.7L941.1 365.1" stroke="#141414" stroke-width="0.9" fill="none"/>
<path d="M863 364.5L861 361.4" stroke="#141414" stroke-width="0.9" fill="none"/>
<polygon points="864.4,360.5 862.5,357.5 865.4,355.2 867.2,357.9" fill="#cccccc" stroke="#cccccc" stroke-width="0.7"/>
<polygon points="867.2,357.9 865.4,355.2 869,353.7 870.5,356.1" fill="#cbcbcb" stroke="#cbcbcb" stroke-width="0.7"/>
<path d="M889.7 407.7L882.9 407" stroke="#141414" stroke-width="0.9" fill="none"/>
<path d="M903.3 407.1L896.5 407.8" stroke="#141414" stroke-width="0.9" fill="none"/>
<polygon points="870.5,403.7 865.3,401.1 869.7,370 874.1,372.1" fill="#b6b6b6" stroke="#b6b6b6" stroke-width="0.7"/>
<path d="M896.5 407.8L889.7 407.7" stroke="#141414" stroke-width="0.9" fill="none"/>
<path d="M870.5 356.1L869 353.7" stroke="#141414" stroke-width="0.9" fill="none"/>
<polygon points="926.7,401.4 909.7,405.8 907.2,373.9 924.1,369.5" fill="#6f6f6f" stroke="#6f6f6f" stroke-width="0.7"/>
<polygon points="865.9,367.4 863,364.5 864.4,360.5 867.2,363.3" fill="#aeaeae" stroke="#aeaeae" stroke-width="0.7"/>
<polygon points="939.2,357.2 922.3,361.6 920.7,358.7 937.6,354.3" fill="#c3c3c3" stroke="#c3c3c3" stroke-width="0.7"/>
<polygon points="869.7,360.4 867.2,357.9 870.5,356.1 872.7,358.3" fill="#cdcdcd" stroke="#cdcdcd" stroke-width="0.7"/>
<path d="M865.9 367.4L863 364.5" stroke="#141414" stroke-width="0.9" fill="none"/>
<polygon points="876.5,405.7 870.5,403.7 874.1,372.1 879.1,373.8" fill="#b4b4b4" stroke="#b4b4b4" stroke-width="0.7"/>
<polygon points="867.2,363.3 864.4,360.5 867.2,357.9 869.7,360.4" fill="#cfcfcf" stroke="#cfcfcf" stroke-width="0.7"/>
<path d="M937.6 354.3L920.7 358.7" stroke="#141414" stroke-width="0.9" fill="none"/>
<polygon points="941.1,365.1 924.1,369.5 923.5,365.1 940.4,360.7" fill="#8b8b8b" stroke="#8b8b8b" stroke-width="0.7"/>
<polygon points="940.4,360.7 923.5,365.1 922.3,361.6 939.2,357.2" fill="#b9b9b9" stroke="#b9b9b9" stroke-width="0.7"/>
<path d="M872.7 358.3L870.5 356.1" stroke="#141414" stroke-width="0.9" fill="none"/>
<path d="M941.1 365.1L924.1 369.5" stroke="#141414" stroke-width="0.9" fill="none"/>
<polygon points="882.9,407 876.5,405.7 879.1,373.8 884.5,375" fill="#afafaf" stroke="#afafaf" stroke-width="0.7"/>
<polygon points="909.7,405.8 903.3,407.1 901.7,375 907.2,373.9" fill="#797979" stroke="#797979" stroke-width="0.7"/>
<polygon points="872.9,362.6 869.7,360.4 872.7,358.3 875.5,360.2" fill="#cecece" stroke="#cecece" stroke-width="0.7"/>
<polygon points="869.7,370 865.9,367.4 867.2,363.3 870.7,365.7" fill="#b1b1b1" stroke="#b1b1b1" stroke-width="0.7"/>
<path d="M909.7 405.8L907.2 373.9" stroke="#141414" stroke-width="0.9" fill="none"/>
<polygon points="889.7,407.7 882.9,407 884.5,375 890.2,375.6" fill="#a6a6a6" stroke="#a6a6a6" stroke-width="0.7"/>
<polygon points="870.7,365.7 867.2,363.3 869.7,360.4 872.9,362.6" fill="#d1d1d1" stroke="#d1d1d1" stroke-width="0.7"/>
<polygon points="903.3,407.1 896.5,407.8 896,375.6 901.7,375" fill="#8a8a8a" stroke="#8a8a8a" stroke-width="0.7"/>
<path d="M869.7 370L865.9 367.4" stroke="#141414" stroke-width="0.9" fill="none"/>
<path d="M875.5 360.2L872.7 358.3" stroke="#141414" stroke-width="0.9" fill="none"/>
<polygon points="896.5,407.8 889.7,407.7 890.2,375.6 896,375.6" fill="#9a9a9a" stroke="#9a9a9a" stroke-width="0.7"/>
<polygon points="876.7,364.4 872.9,362.6 875.5,360.2 878.9,361.8" fill="#cecece" stroke="#cecece" stroke-width="0.7"/>
<polygon points="922.3,361.6 905.3,366 903.8,363.2 920.7,358.7" fill="#c3c3c3" stroke="#c3c3c3" stroke-width="0.7"/>
<polygon points="874.1,372.1 869.7,370 870.7,365.7 875,367.8" fill="#b2b2b2" stroke="#b2b2b2" stroke-width="0.7"/>
<path d="M920.7 358.7L903.8 363.2" stroke="#141414" stroke-width="0.9" fill="none"/>
<path d="M878.9 361.8L875.5 360.2" stroke="#141414" stroke-width="0.9" fill="none"/>
<polygon points="875,367.8 870.7,365.7 872.9,362.6 876.7,364.4" fill="#d2d2d2" stroke="#d2d2d2" stroke-width="0.7"/>
<polygon points="924.1,369.5 907.2,373.9 906.6,369.5 923.5,365.1" fill="#8b8b8b" stroke="#8b8b8b" stroke-width="0.7"/>
<path d="M874.1 372.1L869.7 370" stroke="#141414" stroke-width="0.9" fill="none"/>
<polygon points="923.5,365.1 906.6,369.5 905.3,366 922.3,361.6" fill="#b9b9b9" stroke="#b9b9b9" stroke-width="0.7"/>
<polygon points="881,365.9 876.7,364.4 878.9,361.8 882.6,363.1" fill="#cecece" stroke="#cecece" stroke-width="0.7"/>
<path d="M924.1 369.5L907.2 373.9" stroke="#141414" stroke-width="0.9" fill="none"/>
<path d="M882.6 363.1L878.9 361.8" stroke="#141414" stroke-width="0.9" fill="none"/>
<polygon points="879.1,373.8 874.1,372.1 875,367.8 879.8,369.4" fill="#b1b1b1" stroke="#b1b1b1" stroke-width="0.7"/>
<polygon points="879.8,369.4 875,367.8 876.7,364.4 881,365.9" fill="#d1d1d1" stroke="#d1d1d1" stroke-width="0.7"/>
<polygon points="885.7,366.9 881,365.9 882.6,363.1 886.7,363.9" fill="#cdcdcd" stroke="#cdcdcd" stroke-width="0.7"/>
<polygon points="905.3,366 900.6,367 899.7,364 903.8,363.2" fill="#c4c4c4" stroke="#c4c4c4" stroke-width="0.7"/>
<path d="M879.1 373.8L874.1 372.1" stroke="#141414" stroke-width="0.9" fill="none"/>
<path d="M886.7 363.9L882.6 363.1" stroke="#141414" stroke-width="0.9" fill="none"/>
<path d="M903.8 363.2L899.7 364" stroke="#141414" stroke-width="0.9" fill="none"/>
<polygon points="890.7,367.4 885.7,366.9 886.7,363.9 891,364.4" fill="#cbcbcb" stroke="#cbcbcb" stroke-width="0.7"/>
<polygon points="900.6,367 895.7,367.4 895.4,364.4 899.7,364" fill="#c7c7c7" stroke="#c7c7c7" stroke-width="0.7"/>
<path d="M905.3 366L903.8 363.2" stroke="#141414" stroke-width="0.9" fill="none"/>
<polygon points="895.7,367.4 890.7,367.4 891,364.4 895.4,364.4" fill="#c9c9c9" stroke="#c9c9c9" stroke-width="0.7"/>
<polygon points="884.5,375 879.1,373.8 879.8,369.4 884.9,370.5" fill="#aeaeae" stroke="#aeaeae" stroke-width="0.7"/>
<polygon points="907.2,373.9 901.7,375 901.4,370.6 906.6,369.5" fill="#909090" stroke="#909090" stroke-width="0.7"/>
<polygon points="884.9,370.5 879.8,369.4 881,365.9 885.7,366.9" fill="#d0d0d0" stroke="#d0d0d0" stroke-width="0.7"/>
<path d="M891 364.4L886.7 363.9" stroke="#141414" stroke-width="0.9" fill="none"/>
<path d="M899.7 364L895.4 364.4" stroke="#141414" stroke-width="0.9" fill="none"/>
<polygon points="906.6,369.5 901.4,370.6 900.6,367 905.3,366" fill="#bcbcbc" stroke="#bcbcbc" stroke-width="0.7"/>
<path d="M895.4 364.4L891 364.4" stroke="#141414" stroke-width="0.9" fill="none"/>
<path d="M884.5 375L879.1 373.8" stroke="#141414" stroke-width="0.9" fill="none"/>
<polygon points="890.2,375.6 884.5,375 884.9,370.5 890.4,371.1" fill="#a9a9a9" stroke="#a9a9a9" stroke-width="0.7"/>
<path d="M907.2 373.9L906.6 369.5" stroke="#141414" stroke-width="0.9" fill="none"/>
<polygon points="901.7,375 896,375.6 895.9,371.1 901.4,370.6" fill="#9a9a9a" stroke="#9a9a9a" stroke-width="0.7"/>
<path d="M907.2 373.9L901.7 375" stroke="#141414" stroke-width="0.9" fill="none"/>
<polygon points="890.4,371.1 884.9,370.5 885.7,366.9 890.7,367.4" fill="#cccccc" stroke="#cccccc" stroke-width="0.7"/>
<polygon points="901.4,370.6 895.9,371.1 895.7,367.4 900.6,367" fill="#c3c3c3" stroke="#c3c3c3" stroke-width="0.7"/>
<path d="M906.6 369.5L905.3 366" stroke="#141414" stroke-width="0.9" fill="none"/>
<polygon points="896,375.6 890.2,375.6 890.4,371.1 895.9,371.1" fill="#a2a2a2" stroke="#a2a2a2" stroke-width="0.7"/>
<polygon points="895.9,371.1 890.4,371.1 890.7,367.4 895.7,367.4" fill="#c8c8c8" stroke="#c8c8c8" stroke-width="0.7"/>
<path d="M890.2 375.6L884.5 375" stroke="#141414" stroke-width="0.9" fill="none"/>
<path d="M901.7 375L896 375.6" stroke="#141414" stroke-width="0.9" fill="none"/>
<path d="M896 375.6L890.2 375.6" stroke="#141414" stroke-width="0.9" fill="none"/>
<clipPath id="hc0"><polygon points="906.6,336.8 908.2,337.9 909.6,339.2 910.7,340.6 911.4,342.1 911.9,343.7 912.1,345.3 911.9,347.1 911.4,348.8 910.7,350.5 909.6,352.1 908.2,353.7 906.6,355.1 904.8,356.5 902.7,357.6 900.5,358.6 898.2,359.5 895.8,360.1 893.4,360.5 890.9,360.6 888.5,360.6 886.2,360.3 884,359.8 882,359.1 880.2,358.2 878.5,357.1 877.2,355.9 876.1,354.5 875.3,352.9 874.8,351.3 874.7,349.7 874.8,348 875.3,346.2 876.1,344.5 877.2,342.9 878.5,341.3 880.2,339.9 882,338.5 884,337.4 886.2,336.4 888.5,335.6 890.9,334.9 893.4,334.6 895.8,334.4 898.2,334.4 900.5,334.7 902.7,335.2 904.8,335.9"/></clipPath>
<g clip-path="url(#hc0)">
<polygon points="906.6,336.8 908.2,337.9 909.6,339.2 910.7,340.6 911.4,342.1 911.9,343.7 912.1,345.3 911.9,347.1 911.4,348.8 910.7,350.5 909.6,352.1 908.2,353.7 906.6,355.1 904.8,356.5 902.7,357.6 900.5,358.6 898.2,359.5 895.8,360.1 893.4,360.5 890.9,360.6 888.5,360.6 886.2,360.3 884,359.8 882,359.1 880.2,358.2 878.5,357.1 877.2,355.9 876.1,354.5 875.3,352.9 874.8,351.3 874.7,349.7 874.8,348 875.3,346.2 876.1,344.5 877.2,342.9 878.5,341.3 880.2,339.9 882,338.5 884,337.4 886.2,336.4 888.5,335.6 890.9,334.9 893.4,334.6 895.8,334.4 898.2,334.4 900.5,334.7 902.7,335.2 904.8,335.9" fill="#808080"/>
<polygon points="906.6,336.8 908.2,337.9 908.2,370.7 906.6,369.6" fill="#a3a3a3" stroke="#a3a3a3" stroke-width="0.7"/>
<polygon points="908.2,337.9 909.6,339.2 909.6,371.9 908.2,370.7" fill="#bdbdbd" stroke="#bdbdbd" stroke-width="0.7"/>
<polygon points="909.6,339.2 910.7,340.6 910.7,373.1 909.6,371.9" fill="#c0c0c0" stroke="#c0c0c0" stroke-width="0.7"/>
<polygon points="910.7,340.6 911.4,342.1 911.4,374.5 910.7,373.1" fill="#c2c2c2" stroke="#c2c2c2" stroke-width="0.7"/>
<polygon points="911.4,342.1 911.9,343.7 911.9,375.9 911.4,374.5" fill="#c4c4c4" stroke="#c4c4c4" stroke-width="0.7"/>
<polygon points="911.9,343.7 912.1,345.3 912.1,377.3 911.9,375.9" fill="#c4c4c4" stroke="#c4c4c4" stroke-width="0.7"/>
<polygon points="874.7,349.7 874.8,348 874.8,375.9 874.7,377.3" fill="#6e6e6e" stroke="#6e6e6e" stroke-width="0.7"/>
<polygon points="874.8,348 875.3,346.2 875.3,374.5 874.8,375.9" fill="#6e6e6e" stroke="#6e6e6e" stroke-width="0.7"/>
<polygon points="875.3,346.2 876.1,344.5 876.1,373.1 875.3,374.5" fill="#6f6f6f" stroke="#6f6f6f" stroke-width="0.7"/>
<polygon points="876.1,344.5 877.2,342.9 877.2,371.9 876.1,373.1" fill="#707070" stroke="#707070" stroke-width="0.7"/>
<polygon points="877.2,342.9 878.5,341.3 878.5,370.7 877.2,371.9" fill="#717171" stroke="#717171" stroke-width="0.7"/>
<polygon points="878.5,341.3 880.2,339.9 880.2,369.6 878.5,370.7" fill="#727272" stroke="#727272" stroke-width="0.7"/>
<polygon points="880.2,339.9 882,338.5 882,368.7 880.2,369.6" fill="#747474" stroke="#747474" stroke-width="0.7"/>
<polygon points="882,338.5 884,337.4 884,367.9 882,368.7" fill="#767676" stroke="#767676" stroke-width="0.7"/>
<polygon points="884,337.4 886.2,336.4 886.2,367.3 884,367.9" fill="#797979" stroke="#797979" stroke-width="0.7"/>
<polygon points="886.2,336.4 888.5,335.6 888.5,366.8 886.2,367.3" fill="#7b7b7b" stroke="#7b7b7b" stroke-width="0.7"/>
<polygon points="888.5,335.6 890.9,334.9 890.9,366.6 888.5,366.8" fill="#7e7e7e" stroke="#7e7e7e" stroke-width="0.7"/>
<polygon points="890.9,334.9 893.4,334.6 893.4,366.5 890.9,366.6" fill="#808080" stroke="#808080" stroke-width="0.7"/>
<polygon points="893.4,334.6 895.8,334.4 895.8,366.6 893.4,366.5" fill="#848484" stroke="#848484" stroke-width="0.7"/>
<polygon points="895.8,334.4 898.2,334.4 898.2,366.8 895.8,366.6" fill="#8a8a8a" stroke="#8a8a8a" stroke-width="0.7"/>
<polygon points="898.2,334.4 900.5,334.7 900.5,367.3 898.2,366.8" fill="#909090" stroke="#909090" stroke-width="0.7"/>
<polygon points="900.5,334.7 902.7,335.2 902.7,367.9 900.5,367.3" fill="#959595" stroke="#959595" stroke-width="0.7"/>
<polygon points="902.7,335.2 904.8,335.9 904.8,368.7 902.7,367.9" fill="#9b9b9b" stroke="#9b9b9b" stroke-width="0.7"/>
<polygon points="904.8,335.9 906.6,336.8 906.6,369.6 904.8,368.7" fill="#9f9f9f" stroke="#9f9f9f" stroke-width="0.7"/>
<polygon points="906.6,369.6 908.2,370.7 909.6,371.9 910.7,373.1 911.4,374.5 911.9,375.9 912.1,377.3 911.9,378.7 911.4,380.1 910.7,381.4 909.6,382.7 908.2,383.8 906.6,384.9 904.8,385.8 902.7,386.6 900.5,387.2 898.2,387.7 895.8,388 893.4,388.1 890.9,388 888.5,387.7 886.2,387.2 884,386.6 882,385.8 880.2,384.9 878.5,383.8 877.2,382.7 876.1,381.4 875.3,380.1 874.8,378.7 874.7,377.3 874.8,375.9 875.3,374.5 876.1,373.1 877.2,371.9 878.5,370.7 880.2,369.6 882,368.7 884,367.9 886.2,367.3 888.5,366.8 890.9,366.6 893.4,366.5 895.8,366.6 898.2,366.8 900.5,367.3 902.7,367.9 904.8,368.7" fill="#8e8e8e" stroke="#333" stroke-width="0.7"/>
</g>
<polygon points="906.6,336.8 908.2,337.9 909.6,339.2 910.7,340.6 911.4,342.1 911.9,343.7 912.1,345.3 911.9,347.1 911.4,348.8 910.7,350.5 909.6,352.1 908.2,353.7 906.6,355.1 904.8,356.5 902.7,357.6 900.5,358.6 898.2,359.5 895.8,360.1 893.4,360.5 890.9,360.6 888.5,360.6 886.2,360.3 884,359.8 882,359.1 880.2,358.2 878.5,357.1 877.2,355.9 876.1,354.5 875.3,352.9 874.8,351.3 874.7,349.7 874.8,348 875.3,346.2 876.1,344.5 877.2,342.9 878.5,341.3 880.2,339.9 882,338.5 884,337.4 886.2,336.4 888.5,335.6 890.9,334.9 893.4,334.6 895.8,334.4 898.2,334.4 900.5,334.7 902.7,335.2 904.8,335.9" fill="none" stroke="#1c1c1c" stroke-width="0.9"/>
<clipPath id="hc1"><polygon points="1075.1,245.6 1076.8,246.7 1078.1,247.8 1079.2,248.9 1080,250 1080.5,251.2 1080.6,252.4 1080.5,253.5 1080,254.5 1079.2,255.5 1078.1,256.4 1076.8,257.2 1075.1,257.8 1073.3,258.4 1071.3,258.8 1069.1,259 1066.8,259.1 1064.4,259 1061.9,258.8 1059.5,258.5 1057.1,258 1054.8,257.4 1052.6,256.6 1050.5,255.7 1048.7,254.8 1047.1,253.7 1045.7,252.6 1044.6,251.5 1043.9,250.3 1043.4,249.2 1043.2,248 1043.4,246.9 1043.9,245.9 1044.6,244.9 1045.7,244 1047.1,243.2 1048.7,242.6 1050.5,242 1052.6,241.6 1054.8,241.4 1057.1,241.3 1059.5,241.4 1061.9,241.6 1064.4,241.9 1066.8,242.4 1069.1,243 1071.3,243.8 1073.3,244.7"/></clipPath>
<g clip-path="url(#hc1)">
<polygon points="1075.1,245.6 1076.8,246.7 1078.1,247.8 1079.2,248.9 1080,250 1080.5,251.2 1080.6,252.4 1080.5,253.5 1080,254.5 1079.2,255.5 1078.1,256.4 1076.8,257.2 1075.1,257.8 1073.3,258.4 1071.3,258.8 1069.1,259 1066.8,259.1 1064.4,259 1061.9,258.8 1059.5,258.5 1057.1,258 1054.8,257.4 1052.6,256.6 1050.5,255.7 1048.7,254.8 1047.1,253.7 1045.7,252.6 1044.6,251.5 1043.9,250.3 1043.4,249.2 1043.2,248 1043.4,246.9 1043.9,245.9 1044.6,244.9 1045.7,244 1047.1,243.2 1048.7,242.6 1050.5,242 1052.6,241.6 1054.8,241.4 1057.1,241.3 1059.5,241.4 1061.9,241.6 1064.4,241.9 1066.8,242.4 1069.1,243 1071.3,243.8 1073.3,244.7" fill="#808080"/>
<polygon points="1075.1,245.6 1076.8,246.7 1076.8,273.4 1075.1,272.3" fill="#a3a3a3" stroke="#a3a3a3" stroke-width="0.7"/>
<polygon points="1076.8,246.7 1078.1,247.8 1078.1,274.6 1076.8,273.4" fill="#bdbdbd" stroke="#bdbdbd" stroke-width="0.7"/>
<polygon points="1078.1,247.8 1079.2,248.9 1079.2,275.8 1078.1,274.6" fill="#c0c0c0" stroke="#c0c0c0" stroke-width="0.7"/>
<polygon points="1079.2,248.9 1080,250 1080,277.2 1079.2,275.8" fill="#c2c2c2" stroke="#c2c2c2" stroke-width="0.7"/>
<polygon points="1080,250 1080.5,251.2 1080.5,278.6 1080,277.2" fill="#c4c4c4" stroke="#c4c4c4" stroke-width="0.7"/>
<polygon points="1080.5,251.2 1080.6,252.4 1080.6,280 1080.5,278.6" fill="#c4c4c4" stroke="#c4c4c4" stroke-width="0.7"/>
<polygon points="1043.2,248 1043.4,246.9 1043.4,278.6 1043.2,280" fill="#6e6e6e" stroke="#6e6e6e" stroke-width="0.7"/>
<polygon points="1043.4,246.9 1043.9,245.9 1043.9,277.2 1043.4,278.6" fill="#6e6e6e" stroke="#6e6e6e" stroke-width="0.7"/>
<polygon points="1043.9,245.9 1044.6,244.9 1044.6,275.8 1043.9,277.2" fill="#6f6f6f" stroke="#6f6f6f" stroke-width="0.7"/>
<polygon points="1044.6,244.9 1045.7,244 1045.7,274.6 1044.6,275.8" fill="#707070" stroke="#707070" stroke-width="0.7"/>
<polygon points="1045.7,244 1047.1,243.2 1047.1,273.4 1045.7,274.6" fill="#717171" stroke="#717171" stroke-width="0.7"/>
<polygon points="1047.1,243.2 1048.7,242.6 1048.7,272.3 1047.1,273.4" fill="#727272" stroke="#727272" stroke-width="0.7"/>
<polygon points="1048.7,242.6 1050.5,242 1050.5,271.4 1048.7,272.3" fill="#747474" stroke="#747474" stroke-width="0.7"/>
<polygon points="1050.5,242 1052.6,241.6 1052.6,270.6 1050.5,271.4" fill="#767676" stroke="#767676" stroke-width="0.7"/>
<polygon points="1052.6,241.6 1054.8,241.4 1054.8,270 1052.6,270.6" fill="#797979" stroke="#797979" stroke-width="0.7"/>
<polygon points="1054.8,241.4 1057.1,241.3 1057.1,269.5 1054.8,270" fill="#7b7b7b" stroke="#7b7b7b" stroke-width="0.7"/>
<polygon points="1057.1,241.3 1059.5,241.4 1059.5,269.3 1057.1,269.5" fill="#7e7e7e" stroke="#7e7e7e" stroke-width="0.7"/>
<polygon points="1059.5,241.4 1061.9,241.6 1061.9,269.2 1059.5,269.3" fill="#808080" stroke="#808080" stroke-width="0.7"/>
<polygon points="1061.9,241.6 1064.4,241.9 1064.4,269.3 1061.9,269.2" fill="#848484" stroke="#848484" stroke-width="0.7"/>
<polygon points="1064.4,241.9 1066.8,242.4 1066.8,269.5 1064.4,269.3" fill="#8a8a8a" stroke="#8a8a8a" stroke-width="0.7"/>
<polygon points="1066.8,242.4 1069.1,243 1069.1,270 1066.8,269.5" fill="#909090" stroke="#909090" stroke-width="0.7"/>
<polygon points="1069.1,243 1071.3,243.8 1071.3,270.6 1069.1,270" fill="#959595" stroke="#959595" stroke-width="0.7"/>
<polygon points="1071.3,243.8 1073.3,244.7 1073.3,271.4 1071.3,270.6" fill="#9b9b9b" stroke="#9b9b9b" stroke-width="0.7"/>
<polygon points="1073.3,244.7 1075.1,245.6 1075.1,272.3 1073.3,271.4" fill="#9f9f9f" stroke="#9f9f9f" stroke-width="0.7"/>
<polygon points="1075.1,272.3 1076.8,273.4 1078.1,274.6 1079.2,275.8 1080,277.2 1080.5,278.6 1080.6,280 1080.5,281.4 1080,282.8 1079.2,284.1 1078.1,285.4 1076.8,286.5 1075.1,287.6 1073.3,288.5 1071.3,289.3 1069.1,289.9 1066.8,290.4 1064.4,290.7 1061.9,290.8 1059.5,290.7 1057.1,290.4 1054.8,289.9 1052.6,289.3 1050.5,288.5 1048.7,287.6 1047.1,286.5 1045.7,285.4 1044.6,284.1 1043.9,282.8 1043.4,281.4 1043.2,280 1043.4,278.6 1043.9,277.2 1044.6,275.8 1045.7,274.6 1047.1,273.4 1048.7,272.3 1050.5,271.4 1052.6,270.6 1054.8,270 1057.1,269.5 1059.5,269.3 1061.9,269.2 1064.4,269.3 1066.8,269.5 1069.1,270 1071.3,270.6 1073.3,271.4" fill="#8e8e8e" stroke="#333" stroke-width="0.7"/>
</g>
<polygon points="1075.1,245.6 1076.8,246.7 1078.1,247.8 1079.2,248.9 1080,250 1080.5,251.2 1080.6,252.4 1080.5,253.5 1080,254.5 1079.2,255.5 1078.1,256.4 1076.8,257.2 1075.1,257.8 1073.3,258.4 1071.3,258.8 1069.1,259 1066.8,259.1 1064.4,259 1061.9,258.8 1059.5,258.5 1057.1,258 1054.8,257.4 1052.6,256.6 1050.5,255.7 1048.7,254.8 1047.1,253.7 1045.7,252.6 1044.6,251.5 1043.9,250.3 1043.4,249.2 1043.2,248 1043.4,246.9 1043.9,245.9 1044.6,244.9 1045.7,244 1047.1,243.2 1048.7,242.6 1050.5,242 1052.6,241.6 1054.8,241.4 1057.1,241.3 1059.5,241.4 1061.9,241.6 1064.4,241.9 1066.8,242.4 1069.1,243 1071.3,243.8 1073.3,244.7" fill="none" stroke="#1c1c1c" stroke-width="0.9"/>
</g>
<g shape-rendering="crispEdges">
<rect class="vf" x="212.5" y="180.5" width="589" height="363"/>
<rect class="vf" x="728.5" y="190.5" width="497.5" height="311"/>
<rect class="vf" x="209.5" y="509.5" width="593" height="310"/>
<rect class="vr" x="824.5" y="557.5" width="327" height="257"/>
</g>
</svg>
<!-- bottom toolbar -->
<svg class="abs" style="left:6px;top:944px" width="1320" height="42" viewBox="6 944 1320 42">
<defs>
 <g id="vgrip"><path d="M0 0V19" stroke="#fff" stroke-width="1"/><path d="M1 0V19" stroke="#8e8ea6" stroke-width="1"/></g>
 <g id="vsep"><path d="M0 0V39" stroke="#9c9cb4" stroke-width="1"/><path d="M1 0V39" stroke="#f4f4fa" stroke-width="1"/></g>
 <path id="dda" d="M0 0h8l-4 4z" fill="#000"/>
 <pattern id="dith" width="2" height="2" patternUnits="userSpaceOnUse"><rect width="2" height="2" fill="#fffff4"/><rect width="1" height="1" fill="#ffff9c"/></pattern>
</defs>
<use href="#vgrip" x="10" y="949.5"/><use href="#vgrip" x="393.5" y="949.5"/><use href="#vgrip" x="660.5" y="949.5"/><use href="#vgrip" x="896" y="949.5"/><use href="#vgrip" x="951" y="949.5"/><use href="#vgrip" x="1176" y="949.5"/>
<use href="#vsep" x="998" y="947"/><use href="#vsep" x="1077.5" y="947"/><use href="#vsep" x="1122" y="947"/><use href="#vsep" x="1222" y="947"/>
<!-- New -->
<path d="M26.5 957.5H42L47.5 963V980H26.5Z" fill="url(#dith)"/>
<path d="M26.5 957.5H42L47.5 963V980H26.5Z" fill="none" stroke="#d8d8d8" stroke-width="1"/>
<path d="M42 957.5V963H47.5M47.8 963V980.3H26.5" fill="none" stroke="#222" stroke-width="1.2"/>
<!-- Open -->
<path d="M60 961L62 958.5H69L71 961H78V965H60Z" fill="#c8a000" stroke="#6a5200" stroke-width="0.8"/>
<path d="M61 962.5h8M62 960.3h6" stroke="#ffe880" stroke-width="1"/>
<path d="M59.5 976.5V964.5H78.5V968" fill="#e0b000" stroke="#5a4600" stroke-width="1"/>
<path d="M59.5 976.5L65 967.5H84.5L78.5 976.5Z" fill="#f4c010" stroke="#4a3a00" stroke-width="1"/>
<path d="M66 975L69.5 969H80" stroke="#c08800" stroke-width="1.2" fill="none"/>
<path d="M73 960.5Q78 956.5 82 961" fill="none" stroke="#000" stroke-width="1.4"/><path d="M80 958L84 963.5L79 963Z" fill="#000"/>
<!-- Save -->
<rect x="97.5" y="957.7" width="22" height="22" rx="2" fill="#b0b000" stroke="#000" stroke-width="1.6"/>
<rect x="102" y="958.5" width="13" height="9.5" fill="#f4f8ff" stroke="#585800" stroke-width="0.6"/>
<path d="M103.5 961h10M103.5 963.5h10M103.5 966h10" stroke="#70a0e0" stroke-width="1"/>
<rect x="102" y="972" width="13" height="7.5" fill="#000"/><rect x="111" y="973" width="3.2" height="5.5" fill="#fff"/>
<rect x="116" y="958.6" width="2" height="2" fill="#fff"/>
<!-- Print -->
<path d="M137 966L142 957.5H154L150 966Z" fill="#fff" stroke="#222" stroke-width="0.9"/>
<path d="M142.5 960.3H151M141.3 962.3H149.5M140 964.3H148.5" stroke="#2a60f0" stroke-width="1.3"/>
<path d="M131.5 969L135 965.5H152L156 963V972L152 979H134.5L131.5 976Z" fill="#a4a458" stroke="#28280c" stroke-width="1"/>
<path d="M132 969.5H152.5V979M152.5 969.5L156 964" fill="none" stroke="#28280c" stroke-width="1"/>
<path d="M133 971.5H151" stroke="#d8d8a0" stroke-width="1.6"/><path d="M133 975.5H151.5" stroke="#e8e8c0" stroke-width="1.4"/>
<rect x="144" y="972" width="4" height="1.4" fill="#20c020"/>
<!-- Cut (gray) -->
<g fill="none" stroke="#a4a4a4" stroke-width="2"><path d="M172 956L182.5 973.5M187.5 956L176.5 973.5"/><circle cx="174.5" cy="976.8" r="2.800" stroke-width="2.800"/><circle cx="185" cy="976.800" r="2.800" stroke-width="2.800"/></g>
<g fill="none" stroke="#fff" stroke-width="0.9"><path d="M173.3 956L183.8 973.5M188.8 956L177.8 973.5"/></g>
<!-- Copy (gray) -->
<g fill="#d4d4e4" stroke="#a8a8a8" stroke-width="1.3"><path d="M204 956H217L221.5 960.5V975H204Z"/><path d="M211.5 962.5H224L229 967V981H211.5Z"/></g>
<path d="M214.5 969h11M214.5 972h11M214.5 975h11M214.5 978h11M206.5 960h8" stroke="#a0a0a0" stroke-width="1"/>
<path d="M205.2 957.2V974M212.7 963.7V980" stroke="#fff" stroke-width="1"/>
<!-- Paste -->
<rect x="239.5" y="959" width="19.5" height="16" fill="#8c8c3c" stroke="#1c1c08" stroke-width="1.2"/>
<path d="M241 960.5h16" stroke="#c0c070" stroke-width="1"/>
<path d="M244.5 960.5V958.5H247L248 956.8H251L252 958.5H254.5V960.5Z" fill="#f0b810" stroke="#6a4c00" stroke-width="0.8"/>
<path d="M251.5 967.8H260L263.5 971.3V979.5H251.5Z" fill="#f8f8ff" stroke="#222" stroke-width="1"/>
<path d="M253 971.5h6M253 974h9M253 976.5h9" stroke="#1848f0" stroke-width="1.5"/>
<!-- Undo / Redo (gray) -->
<g fill="#e8e8f2" stroke="#a8a8a8" stroke-width="1.2" stroke-linejoin="round">
 <path d="M278 963L286 958V961.5Q297 959.5 299.5 967Q300.5 973 294 976.5L291.5 973.5Q296 971 294.5 967.5Q292.5 964.5 286 965.5V969Z"/>
 <path d="M337.5 963L329.5 958V961.5Q318.5 959.5 316 967Q315 973 321.500 976.5L324 973.5Q319.500 971 321 967.5Q323 964.5 329.5 965.5V969Z"/>
</g>
<use href="#dda" x="300.5" y="982.3"/><use href="#dda" x="338.5" y="982.3"/>
<!-- What's this -->
<path d="M352 958.5V975L355.5 972L358.5 979.3L361.300 978L358.300 971L363.500 971Z" fill="#ffff88" stroke="#000" stroke-width="1.2" stroke-linejoin="round"/>
<text x="362" y="977.500" font-family="Liberation Sans,sans-serif" font-weight="bold" font-size="25" fill="#18a0a8">?</text>
<text x="361" y="976.500" font-family="Liberation Sans,sans-serif" font-weight="bold" font-size="25" fill="#10106c">?</text>
<!-- f(x) -->
<text x="405" y="975.500" font-family="Liberation Serif,serif" font-style="italic" font-weight="bold" font-size="27" fill="#000">f</text>
<text x="417.500" y="977.500" font-family="Liberation Sans,sans-serif" font-weight="bold" font-size="12" fill="#000" textLength="15" lengthAdjust="spacingAndGlyphs">(x)</text>
<!-- speech bubble -->
<path d="M455 955.5C447 955.5 442.800 960 442.800 965C442.800 969.500 445.500 972.500 449 974L445 980L454 975.300C462 976 467.500 971 467.500 965.5C467.500 960 463 955.500 455 955.500Z" fill="#fff" stroke="#000" stroke-width="1.6" stroke-linejoin="round"/>
<path d="M449 961h12M447 964h5M454 964h9M448 967h9M459 967h4M450 970h10" stroke="#000" stroke-width="1.2" stroke-dasharray="3 1"/>
<!-- small gray -->
<g fill="#ececf4" stroke="#b0b0b8" stroke-width="1"><path d="M484 966V961.500Q484 958 487.500 958Q491 958 491 961.500V966Z"/><path d="M485 971L488.500 968L492 971L488.500 976.500Z"/></g>
<!-- table -->
<rect x="509" y="957" width="21.5" height="20.5" fill="#fff" stroke="#000" stroke-width="1"/>
<rect x="509" y="956.800" width="21.500" height="4.700" fill="#0000f0"/>
<path d="M509 965.500h21.500M509 969.500h21.500M509 973.500h21.500M513.300 961.500V977.500M517.600 961.500V977.500M521.900 961.500V977.500M526.200 961.500V977.500" stroke="#000" stroke-width="1.500"/>
<use href="#dda" x="531.500" y="982.300"/>
<!-- tree icon -->
<rect x="544.500" y="966.500" width="5.500" height="8.500" fill="#ffee60" stroke="#10106c" stroke-width="1.400"/><path d="M545 966.300h6.500v2" stroke="#20a0a0" stroke-width="1.200" fill="none"/>
<path d="M551.500 970.800H562.500M559.500 968.500L562.800 970.800L559.500 973.100M554.500 968.500L551.500 970.800L554.500 973.100" stroke="#000" stroke-width="1.500" fill="none"/>
<path d="M553 964L560.500 957M557.500 957H560.500V960" stroke="#000" stroke-width="1.200" fill="none"/>
<g fill="#f0f8ff" stroke="#1030e0" stroke-width="1.300"><rect x="564.500" y="956" width="5.500" height="5"/><rect x="564.500" y="968.300" width="5.500" height="5"/><rect x="564.500" y="977" width="5.500" height="4.500"/></g>
<path d="M558 962.800h4M560 960.800v4M558 977.500h4M560 975.500v4" stroke="#e01010" stroke-width="1.100"/>
<!-- lock -->
<path d="M588.500 964V959.500Q588.500 954 594 954Q599.500 954 599.500 959.500V964" fill="none" stroke="#606060" stroke-width="3"/>
<path d="M588.500 964V959.500Q588.500 954 594 954Q599.500 954 599.500 959.500V964" fill="none" stroke="#c8c8c8" stroke-width="1.200"/>
<path d="M584.500 966L589 962.500H603.500V975.500L599 979.500H584.500Z" fill="#909090" stroke="#1c1c1c" stroke-width="1.100"/>
<path d="M584.500 966H599V979.500M599 966L603.500 962.500" fill="none" stroke="#1c1c1c" stroke-width="1"/>
<path d="M586 967.500h11.500" stroke="#d0d0d0" stroke-width="1.200"/><path d="M591.500 970v5.500M589.500 972h4.500" stroke="#000" stroke-width="1.500"/>
<use href="#dda" x="605.500" y="982.300"/>
<!-- monitors brace -->
<g stroke="#10104c" stroke-width="1.100"><rect x="618.500" y="956" width="12.500" height="10" fill="#18a8b8"/><rect x="618.500" y="968.500" width="12.500" height="10" fill="#18a8b8"/></g>
<path d="M618.500 956.500h12.500M618.500 969h12.500" stroke="#f0e020" stroke-width="2.400"/>
<path d="M621 962l2 2M621 974.500l2 2" stroke="#b0ffff" stroke-width="1"/>
<path d="M619 981h1.500M622 981h1.500M625 981h1.500" stroke="#000" stroke-width="1.200"/>
<path d="M633 955Q636 955 636 958.500V964Q636 967.500 638.500 967.500Q636 967.500 636 971V977Q636 980.500 633 980.500" fill="none" stroke="#000" stroke-width="1.700"/>
<path d="M640.500 966h5M640.500 969.500h5" stroke="#000" stroke-width="1.500"/>
<!-- Fit all -->
<rect x="673.500" y="956.500" width="24" height="22.500" fill="#ffff98" stroke="#20a0a0" stroke-width="1.700"/>
<g stroke="#000" stroke-width="1.300" fill="none"><path d="M685.500 959V965M685.500 970.500V976.500M676 967.700H682.500M688.500 967.700H695"/><path d="M683.500 961.500L685.500 959L687.500 961.500M683.500 974L685.500 976.500L687.500 974M678.500 965.700L676 967.700L678.500 969.700M692.500 965.700L695 967.700L692.500 969.700"/></g>
<!-- Pan -->
<g stroke="#10105c" stroke-width="2" fill="none"><path d="M721.500 955.500V977.500M710.500 966.500H732.500"/></g>
<g fill="#10105c"><path d="M721.500 953L717.500 958.500H725.500Z"/><path d="M721.500 980L717.500 974.500H725.500Z"/><path d="M708.500 966.500L714 962.500V970.500Z"/><path d="M734.500 966.500L729 962.500V970.500Z"/><circle cx="721.500" cy="966.500" r="2.600"/></g>
<path d="M719.500 957.500l2-2.500M712.500 965.500l-2 1M730.500 964.500l2 1.500" stroke="#40d8f0" stroke-width="1"/>
<!-- Zoom in / out -->
<g><path d="M759.500 969L770.500 979" stroke="#10105c" stroke-width="3.600"/><path d="M760 969L770 978" stroke="#48c8e8" stroke-width="1.200"/><circle cx="753.800" cy="963.200" r="7.600" fill="#e8fcff" stroke="#10105c" stroke-width="1.700"/><path d="M749.800 963.200h8M753.800 959.200v8" stroke="#000" stroke-width="2.300"/><path d="M745.500 960.500v5.500" stroke="#000" stroke-width="1.500"/></g>
<g><path d="M795.500 969L806.500 979" stroke="#10105c" stroke-width="3.600"/><path d="M796 969L806 978" stroke="#48c8e8" stroke-width="1.200"/><circle cx="789.800" cy="963.200" r="7.600" fill="#e8fcff" stroke="#10105c" stroke-width="1.700"/><path d="M785.800 963.200h8" stroke="#000" stroke-width="2.300"/><path d="M781.500 960.500v5.500" stroke="#000" stroke-width="1.500"/></g>
<!-- Normal view & other -->
<rect x="819.500" y="956.300" width="22" height="22" fill="#48e0f8" stroke="#10105c" stroke-width="1.300"/>
<path d="M824 962L830 958.500H836L838.500 961L833 965H826Z" fill="none" stroke="#f0e020" stroke-width="1.400"/>
<path d="M822.500 970L828 966H834.500L838 969.500L833 974H825.500Z" fill="#fff" stroke="#10105c" stroke-width="1"/><path d="M822.500 970L825.500 974L829 970.500L826.500 967.500Z" fill="#f0e020" stroke="#10105c" stroke-width="0.800"/>
<rect x="855.800" y="956.300" width="22" height="22" fill="#48e0f8" stroke="#10105c" stroke-width="1.300"/>
<path d="M859 970L864.500 966H871L874.500 969.500L869.500 974H862Z" fill="#fff" stroke="#10105c" stroke-width="1"/><path d="M859 970L862 974L865.500 970.500L863 967.500Z" fill="#f0e020" stroke="#10105c" stroke-width="0.800"/>
<!-- swirl -->
<g fill="none" stroke="#a2a2a2" stroke-width="3.200" stroke-linecap="round"><path d="M913.500 974.500Q908.500 967 913.500 960.500Q920 954 929 958.500"/><path d="M930.500 961.500Q935.500 969 930.500 975.500Q924 982 915 977.500"/><path d="M916.500 970Q916 964.500 922 964.500Q927.500 965 927.500 970.500"/><path d="M927.500 966Q928 971.500 922 971.500"/></g>
<g fill="none" stroke="#e8e8f0" stroke-width="0.900"><path d="M914.500 973Q910.500 967 915 961.500Q920.500 956.500 927.500 959.500"/><path d="M929.500 976Q924 980.500 917 977.500"/></g>
<!-- grid icons -->
<g id="bgrid"><path d="M963.500 958H990.500M963.500 965H990.500M963.500 972H990.500M963.500 979H990.500M966.500 955V982M973.500 955V982M980.500 955V982M987.500 955V982" stroke="#0000f0" stroke-width="1.700" stroke-dasharray="5.500 1.500" stroke-dashoffset="3.500"/><g fill="#18a0a8"><rect x="965.5" y="957.0" width="2" height="2"/><rect x="965.5" y="964.0" width="2" height="2"/><rect x="965.5" y="971.0" width="2" height="2"/><rect x="965.5" y="978.0" width="2" height="2"/><rect x="972.5" y="957.0" width="2" height="2"/><rect x="972.5" y="964.0" width="2" height="2"/><rect x="972.5" y="971.0" width="2" height="2"/><rect x="972.5" y="978.0" width="2" height="2"/><rect x="979.5" y="957.0" width="2" height="2"/><rect x="979.5" y="964.0" width="2" height="2"/><rect x="979.5" y="971.0" width="2" height="2"/><rect x="979.5" y="978.0" width="2" height="2"/><rect x="986.5" y="957.0" width="2" height="2"/><rect x="986.5" y="964.0" width="2" height="2"/><rect x="986.5" y="971.0" width="2" height="2"/><rect x="986.5" y="978.0" width="2" height="2"/></g></g>
<path d="M973.500 960.800L977.200 965L973.500 969.200L969.800 965Z" fill="#ffee20" stroke="#e01010" stroke-width="1.300"/>
<use href="#bgrid" x="225"/>
<!-- dimension check icon -->
<rect x="1008.500" y="962.500" width="17.500" height="16" fill="#58e0f0" stroke="#000" stroke-width="1.400"/>
<path d="M1009 958.500H1026M1009 956V961M1026 956V961M1031.500 963V978.500M1029 963H1034M1029 978.500H1034" stroke="#000" stroke-width="1.200"/><path d="M1012 958.500H1023M1031.500 966V975.500" stroke="#f0e020" stroke-width="1.400"/>
<path d="M1006.500 972L1011.500 977.500L1023 965.500" fill="none" stroke="#e010c0" stroke-width="2.800"/>
<!-- orange hand/check -->
<g fill="#ff9038" stroke="none"><path d="M1046 958.500L1052 955.500L1058 958L1056 964.500L1049 966Z" opacity="0.550"/><path d="M1055 963L1064 957.500L1067 958.500L1062 964L1069 963.500L1069.500 966L1059 969.500L1053.500 968.500Z"/></g>
<path d="M1050.500 973L1056 978.500L1068.500 967.500" fill="none" stroke="#ff7a10" stroke-width="2.800"/>
<!-- orange grid with cursor -->
<g stroke="#ff8830" stroke-width="1.600" fill="none"><path d="M1091.500 955.500V981M1114 955.500V970M1091.500 960.500H1106M1091.500 967H1104M1091.500 973.500H1100M1098.500 957V976M1105.500 957V962"/></g>
<path d="M1091 977.500H1110V981.500H1091Z" fill="none" stroke="#ff8830" stroke-width="1" stroke-dasharray="2 1"/>
<path d="M1104.500 962L1104.500 978L1108.200 975L1111 981L1113.600 979.800L1110.800 974L1116 973.500Z" fill="#ffc8a0" stroke="#ff7a10" stroke-width="1.200" stroke-linejoin="round"/>
<!-- traffic light -->
<path d="M1132 956.500H1151.500L1158 979.500H1132Z" fill="#fff" stroke="#000" stroke-width="1.600" stroke-linejoin="round"/>
<path d="M1141 962.500Q1136.500 967.500 1141 973" fill="none" stroke="#000" stroke-width="1.300"/>
<rect x="1143.500" y="954.500" width="9" height="22.500" fill="#505050" stroke="#202020" stroke-width="0.800"/>
<circle cx="1148" cy="958.800" r="2.700" fill="#e01818"/><circle cx="1148" cy="965.800" r="2.700" fill="#f8e818"/><circle cx="1148" cy="972.800" r="2.700" fill="#18c0d0"/>
<use href="#dda" x="1157" y="982.300"/>
<!-- chevrons -->
<path d="M1262.500 951.500L1266 955L1262.500 958.500M1267.500 951.500L1271 955L1267.500 958.500" fill="none" stroke="#fff" stroke-width="1.200" transform="translate(0.700,0.700)"/>
<path d="M1262.500 951.500L1266 955L1262.500 958.500M1267.500 951.500L1271 955L1267.500 958.500" fill="none" stroke="#9c9cb0" stroke-width="1"/>
<!-- DS CATIA logo -->
<g fill="none" stroke-linecap="round" stroke-linejoin="round">
<path d="M1287.700 946.900Q1294 945.600 1296.200 947.100Q1296.600 950.500 1288.600 955.300" stroke="#e8201c" stroke-width="1.900"/>
<path d="M1303.200 954.700Q1297 954 1295.400 956Q1294.600 958.500 1299 960.500Q1302.500 962.500 1300.500 964.300Q1298 966 1291.200 965.900" stroke="#f4a010" stroke-width="1.900"/>
<path d="M1282.400 958Q1289 957.100 1291.700 958.100Q1293.400 960 1290.600 964Q1286 967.500 1279.300 968.500L1285 960" stroke="#3a1a8c" stroke-width="1.900"/>
</g>
<text x="1286.300" y="975.200" font-family="Liberation Sans,sans-serif" font-weight="bold" font-style="italic" font-size="8.800" fill="#3a1a8c" textLength="32" lengthAdjust="spacingAndGlyphs">CATIA</text>
</svg>
<!-- right toolbar -->
<svg class="abs" style="left:1282px;top:70px" width="44" height="874" viewBox="1282 70 44 874">
<defs>
 <g id="hgrip"><path d="M1285 0H1305.500" stroke="#fff" stroke-width="1.200"/><path d="M1285.500 1H1306" stroke="#9a9ab2" stroke-width="1"/></g>
 <g id="hsep"><path d="M1284 0H1324" stroke="#fff" stroke-width="1"/><path d="M1284 1H1324" stroke="#a0a0b8" stroke-width="1"/></g>
 <path id="rdd" d="M1315.600 0h8.400l-4.200 4.200z" fill="#000"/>
</defs>
<use href="#hgrip" y="73.500"/><use href="#hgrip" y="129"/><use href="#hgrip" y="220"/><use href="#hgrip" y="473"/><use href="#hgrip" y="600.500"/><use href="#hgrip" y="777.500"/><use href="#hgrip" y="832"/>
<use href="#hsep" y="416"/><use href="#hsep" y="725"/>
<use href="#rdd" y="170.500"/><use href="#rdd" y="261"/><use href="#rdd" y="298.500"/><use href="#rdd" y="336.500"/><use href="#rdd" y="374.500"/><use href="#rdd" y="412"/><use href="#rdd" y="458"/><use href="#rdd" y="514"/><use href="#rdd" y="640"/><use href="#rdd" y="678.500"/><use href="#rdd" y="717"/><use href="#rdd" y="762"/><use href="#rdd" y="818"/><use href="#rdd" y="872"/><use href="#rdd" y="910.500"/>
<!-- workbench icon -->
<path d="M1289 89.200L1300 90L1312 92L1320 100.800L1316 106L1303 112.800H1289Z" fill="#84ccbc"/>
<circle cx="1304.800" cy="91.600" r="5.400" fill="#000"/><path d="M1304.800 85V98.200M1298.200 91.600H1311.400M1300.200 87L1309.400 96.200M1309.400 87L1300.200 96.200" stroke="#000" stroke-width="2"/>
<circle cx="1304.800" cy="91.600" r="2.900" fill="none" stroke="#b8b8b8" stroke-width="1"/><rect x="1303.800" y="90.600" width="2" height="2" fill="#a8dccc"/>
<path d="M1293.500 95L1299 93.500L1316 97.500L1309.500 101.500L1298 100Z" fill="#e4ece8" stroke="#000" stroke-width="1.300" stroke-linejoin="round"/>
<path d="M1296 96.500L1303 98.500L1311 96.800" stroke="#fff" stroke-width="1.600" fill="none"/>
<path d="M1298.500 100.500L1296 107.500M1303 101.500V112.500M1309.500 101.500L1316.500 108M1296 107.500L1303 109.500L1313 105" stroke="#0c6c38" stroke-width="1.700" fill="none"/>
<path d="M1299 107.500H1306" stroke="#000" stroke-width="1.500"/>
<rect x="1290" y="98.300" width="3.300" height="4.500" fill="#e8e8e8" stroke="#222" stroke-width="0.900"/>
<!-- select arrow -->
<path d="M1297.500 145V165.500L1302.200 161.800L1305.500 169L1309.200 167.300L1306 160.500L1313 160Z" fill="#ffe8dc" stroke="#ff6a00" stroke-width="1.800" stroke-linejoin="round"/>
<!-- rotate -->
<path d="M1302.500 179V205" stroke="#000" stroke-width="1.400" stroke-dasharray="2.500 1.500"/>
<path d="M1299 183.500Q1290 186 1291.500 192" fill="none" stroke="#30c8e8" stroke-width="3.600"/><path d="M1299 182Q1288.500 185.500 1290.500 193.500" fill="none" stroke="#10107c" stroke-width="1"/>
<path d="M1291 191.500Q1296 197 1306.500 196V192.500L1316.500 198.500L1306.500 204.500V201Q1294 201.500 1291 191.500Z" fill="#ffee80" stroke="#10107c" stroke-width="1.200" stroke-linejoin="round"/>
<!-- views icon -->
<rect x="1289.500" y="235" width="12" height="10" fill="#f4ec20" stroke="#000" stroke-width="1"/><circle cx="1295.500" cy="240" r="3" fill="none" stroke="#000" stroke-width="1.300" stroke-dasharray="1.500 1"/>
<path d="M1302.500 240H1308M1306 237.500L1308.700 240L1306 242.500" stroke="#0020f0" stroke-width="1.500" fill="none"/>
<rect x="1310" y="235" width="7" height="11" fill="#fff" stroke="#000" stroke-width="1.300"/>
<rect x="1289.500" y="250.500" width="12" height="7.500" fill="#e4e4e4" stroke="#555" stroke-width="1" stroke-dasharray="1 1"/>
<!-- section icon -->
<rect x="1289.500" y="275.800" width="27" height="15.500" fill="#fff" stroke="#000" stroke-width="1.500"/><path d="M1289.500 276.300H1316.500" stroke="#000" stroke-width="2"/>
<path d="M1300.500 276V291M1305 276V291" stroke="#000" stroke-width="1.200"/>
<path d="M1290.500 286L1299.500 277.500M1292.500 291L1300 284M1306 286L1315.500 277.500M1308 291L1316 283.500" stroke="#000" stroke-width="1.200"/>
<path d="M1302.800 271V295.500" stroke="#d01010" stroke-width="1.200"/>
<!-- detail view -->
<rect x="1289" y="307" width="16.500" height="10" fill="#20e0f0"/>
<path d="M1300 316.500L1306 311.500H1312.500L1314.500 316L1308 322.500H1302Z" fill="#fff" stroke="#000" stroke-width="1"/><path d="M1300 316.500L1302 322.500H1308L1314.500 316L1312 319.500H1303Z" fill="#000"/>
<circle cx="1307.500" cy="318.500" r="8.500" fill="none" stroke="#0020f0" stroke-width="1.300"/>
<g id="gear"><circle cx="1295.500" cy="328.800" r="4" fill="#000"/><path d="M1295.500 323V334.600M1289.700 328.800H1301.300M1291.400 324.700L1299.600 332.900M1299.600 324.700L1291.400 332.900" stroke="#000" stroke-width="2.300"/><circle cx="1295.500" cy="328.800" r="1.300" fill="#d0d0e0"/></g>
<!-- clipping view -->
<path d="M1297.500 352H1305.500V358H1310Q1314.500 359.500 1314.500 363.500Q1313.500 367 1309.500 367H1297.500Z" fill="#fff" stroke="#000" stroke-width="1.400"/>
<path d="M1297.500 352Q1293 355 1294 361.500M1297 367.500Q1306 373 1313 367" fill="none" stroke="#0020f0" stroke-width="1.200"/>
<path d="M1291 352.500h3M1291 355.500h3M1291 358.500h3M1303 370.500h8" stroke="#555" stroke-width="0.900" stroke-dasharray="1 1"/>
<use href="#gear" y="38.500"/>
<!-- broken view -->
<path d="M1290.500 388H1298.500V395.500H1302L1300.500 399L1302.500 402.500L1301 405H1290.500Z" fill="#f4ee40" stroke="#000" stroke-width="1.400"/>
<path d="M1310 396H1315.500V405H1309.500L1311 401.500L1309 398.500Z" fill="#f4ee40" stroke="#000" stroke-width="1.400"/>
<path d="M1303.500 392V396L1302 399.500L1304 403V408M1309.500 392V396L1308 399.500L1310 403V408" fill="none" stroke="#0020f0" stroke-width="1.300" stroke-dasharray="3 1"/>
<path d="M1312 388H1304M1306.500 385.500L1303.800 388L1306.500 390.500" fill="none" stroke="#0020f0" stroke-width="1.400"/>
<!-- gray grid icon -->
<g stroke="#a8a8a8" stroke-width="1.200" fill="none"><rect x="1296" y="434" width="20" height="15"/><path d="M1296 439H1316M1296 444H1316M1302.500 434V449M1309.500 434V449" stroke-dasharray="2.500 1"/><path d="M1292.500 444.500H1300V449.500H1305V456H1292.500Z" fill="#d0d0e2"/></g>
<path d="M1294.500 448.500l2 4M1299.500 452c2-1.500 3 0.500 1 2" stroke="#fff" stroke-width="1" fill="none"/>
<!-- new sheet -->
<rect x="1292.500" y="490" width="22.500" height="16.500" fill="#fff" stroke="#0000ff" stroke-width="1"/><rect x="1293.500" y="491" width="20.500" height="14.500" fill="none" stroke="#50f0ff" stroke-width="1"/>
<!-- new detail sheet -->
<rect x="1292.500" y="527.500" width="22.500" height="16.500" fill="#fff" stroke="#0000ff" stroke-width="1"/><rect x="1293.500" y="528.500" width="20.500" height="14.500" fill="none" stroke="#50f0ff" stroke-width="1"/>
<rect x="1295" y="530.500" width="8.500" height="4" fill="none" stroke="#e01010" stroke-width="1.300" stroke-dasharray="2 1"/>
<path d="M1295 538H1303M1295 541H1303M1299 536V542.500" stroke="#0020f0" stroke-width="1.300" stroke-dasharray="2 1"/><circle cx="1309" cy="533" r="2.300" fill="none" stroke="#0020f0" stroke-width="1.200" stroke-dasharray="2 1"/>
<!-- instantiate -->
<g fill="none" stroke-width="1.400"><circle cx="1295" cy="563.800" r="3.600" stroke="#10108c"/><circle cx="1311.500" cy="563.800" r="3.600" stroke="#e81010"/><circle cx="1295" cy="580" r="3.600" stroke="#e81010"/><circle cx="1308.500" cy="578" r="3.800" stroke="#e81010" stroke-width="2"/>
<path d="M1295 558.500V569M1289.800 563.800H1300.200" stroke="#10108c" stroke-width="1"/><path d="M1311.500 558.500V569M1306.300 563.800H1316.700M1295 574.800V585.200M1289.800 580H1300.200M1308.500 572.500V583.500M1303 578H1314" stroke="#e81010" stroke-width="1"/>
<path d="M1301 563.800h4.500M1303.300 561.500v4.500M1293 572h4.500M1295.200 569.800v4.500M1300 568.500L1304 572.500M1304 570V572.500H1301.500" stroke="#0020f0" stroke-width="1.300"/></g>
<!-- dimension -->
<g id="dimico"><path d="M1292.800 616V637M1315.200 616V637" stroke="#000" stroke-width="1.300"/><path d="M1294 620.800H1314" stroke="#000" stroke-width="1.300"/><path d="M1293.500 620.800L1298.500 618.300V623.300ZM1314.500 620.800L1309.500 618.300V623.300Z" fill="#000"/>
<rect x="1293" y="632.500" width="22" height="4.500" fill="#fff" stroke="#000" stroke-width="1"/><path d="M1294 636.500l3-3.500M1297.500 636.500l3-3.500M1301 636.500l3-3.500M1304.500 636.500l3-3.500M1308 636.500l3-3.500M1311.500 636.500l3-3.500" stroke="#000" stroke-width="1"/><path d="M1293 628.500H1315" stroke="#d8d8e4" stroke-width="1"/></g>
<use href="#dimico" y="38.500"/>
<circle cx="1310.500" cy="670.500" r="5.200" fill="#f4d820" stroke="#000" stroke-width="1.200" stroke-dasharray="2 1.200"/><circle cx="1310.500" cy="670.500" r="2.300" fill="#e01010" stroke="#000" stroke-width="0.800"/>
<!-- curve icon -->
<path d="M1298.700 688V707" stroke="#000" stroke-width="1.500"/><path d="M1289 694.500H1297M1294.500 692L1297.500 694.500L1294.500 697M1294 690V699" stroke="#000" stroke-width="1.200" fill="none"/>
<path d="M1298.700 706.500Q1301.500 710 1304 702Q1307 693.500 1310.500 698.500Q1313 702 1313 706" fill="none" stroke="#0030f0" stroke-width="1.500"/><circle cx="1313" cy="704.500" r="1.800" fill="#0030f0"/>
<path d="M1298.700 708.500V715.500M1313 708.500V715.500" stroke="#e81010" stroke-width="2"/>
<!-- text A -->
<rect x="1293" y="737" width="23" height="22" fill="#fff" stroke="#222" stroke-width="1.400"/><path d="M1289 748H1293" stroke="#222" stroke-width="1.200"/>
<text x="1296.500" y="756" font-family="Liberation Serif,serif" font-weight="bold" font-size="21" fill="#000" textLength="16" lengthAdjust="spacingAndGlyphs">A</text>
<!-- blue icon -->
<path d="M1292 801V792.500M1314 801V792.500M1292 795H1314M1298 790.500H1308" stroke="#000" stroke-width="1.500" fill="none"/><rect x="1298" y="789.500" width="10" height="3" fill="#000"/>
<rect x="1290.500" y="798.500" width="19" height="16.500" fill="#0040ff" stroke="#0020c0" stroke-width="1"/><rect x="1293" y="801" width="14" height="11.500" fill="#28c8f8"/>
<circle cx="1299.500" cy="807" r="4.600" fill="#b8b8c0" stroke="#0020c0" stroke-width="1"/><circle cx="1300.500" cy="806" r="2.200" fill="#fff"/>
<path d="M1301 805.500H1314M1310 801.500H1316" stroke="#000" stroke-width="2"/>
<!-- T -->
<text x="1290.500" y="868.300" font-family="Liberation Serif,serif" font-size="31" fill="#000" textLength="22" lengthAdjust="spacingAndGlyphs">T</text>
<!-- sqrt -->
<rect x="1289" y="883" width="11" height="7.500" fill="#fff"/><path d="M1290.500 884.500l3.500 4.500M1294 884.500l-3.500 4.500M1295.500 885.800h4M1295.500 888.200h4" stroke="#000" stroke-width="1.200"/>
<path d="M1290 896L1297.500 907.500L1304.500 892.500H1317.500" fill="none" stroke="#000" stroke-width="2.200" stroke-linejoin="miter"/><path d="M1305 894.500H1317.500" stroke="#fff" stroke-width="1"/>
<!-- chevrons down -->
<path d="M1315.500 931.500L1318.700 934.700L1322 931.500M1315.500 935.500L1318.700 938.700L1322 935.500" fill="none" stroke="#fff" stroke-width="1.200" transform="translate(0.600,0.700)"/>
<path d="M1315.500 931.500L1318.700 934.700L1322 931.500M1315.500 935.500L1318.700 938.700L1322 935.500" fill="none" stroke="#9c9cb0" stroke-width="1"/>
</svg>
</body></html>
